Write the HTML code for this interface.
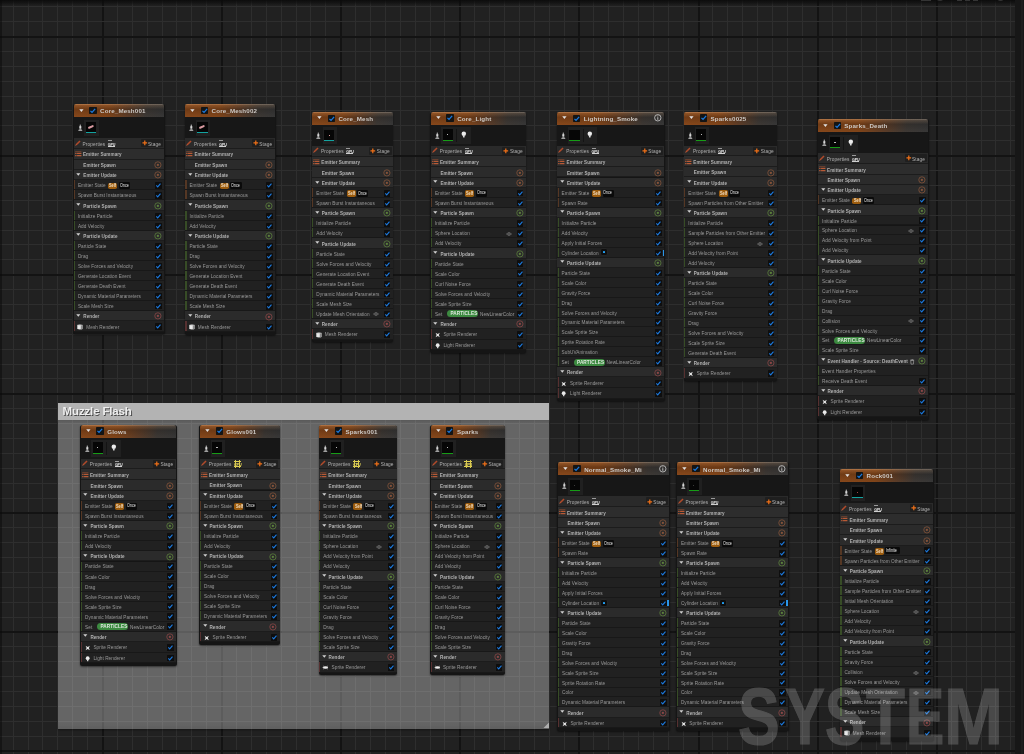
<!DOCTYPE html>
<html><head><meta charset="utf-8"><style>
html,body{margin:0;padding:0;}
body{width:1024px;height:754px;overflow:hidden;position:relative;background:#212121;font-family:"Liberation Sans",sans-serif;}
.gv{position:absolute;top:0;width:1px;height:754px;}
.gh{position:absolute;left:0;height:1px;width:1015px;}
.t{position:absolute;white-space:nowrap;}
svg{display:block;overflow:visible}
.wm{position:absolute;top:677px;font-weight:700;font-size:79.5px;line-height:79.5px;color:#fff;-webkit-text-stroke:1.1px #fff;transform-origin:0 0;white-space:nowrap;}
</style></head><body>
<div class="gv" style="left:13px;background:#2e2e2e"></div><div class="gv" style="left:28px;background:#2e2e2e"></div><div class="gv" style="left:42px;background:#2e2e2e"></div><div class="gv" style="left:57px;background:#2e2e2e"></div><div class="gv" style="left:72px;background:#2e2e2e"></div><div class="gv" style="left:87px;background:#2e2e2e"></div><div class="gv" style="left:102px;width:2px;background:#131313"></div><div class="gv" style="left:117px;background:#2e2e2e"></div><div class="gv" style="left:132px;background:#2e2e2e"></div><div class="gv" style="left:147px;background:#2e2e2e"></div><div class="gv" style="left:162px;background:#2e2e2e"></div><div class="gv" style="left:176px;background:#2e2e2e"></div><div class="gv" style="left:191px;background:#2e2e2e"></div><div class="gv" style="left:206px;background:#2e2e2e"></div><div class="gv" style="left:221px;width:2px;background:#131313"></div><div class="gv" style="left:236px;background:#2e2e2e"></div><div class="gv" style="left:251px;background:#2e2e2e"></div><div class="gv" style="left:266px;background:#2e2e2e"></div><div class="gv" style="left:281px;background:#2e2e2e"></div><div class="gv" style="left:296px;background:#2e2e2e"></div><div class="gv" style="left:310px;background:#2e2e2e"></div><div class="gv" style="left:325px;background:#2e2e2e"></div><div class="gv" style="left:340px;width:2px;background:#131313"></div><div class="gv" style="left:355px;background:#2e2e2e"></div><div class="gv" style="left:370px;background:#2e2e2e"></div><div class="gv" style="left:385px;background:#2e2e2e"></div><div class="gv" style="left:400px;background:#2e2e2e"></div><div class="gv" style="left:415px;background:#2e2e2e"></div><div class="gv" style="left:430px;background:#2e2e2e"></div><div class="gv" style="left:444px;background:#2e2e2e"></div><div class="gv" style="left:459px;width:2px;background:#131313"></div><div class="gv" style="left:474px;background:#2e2e2e"></div><div class="gv" style="left:489px;background:#2e2e2e"></div><div class="gv" style="left:504px;background:#2e2e2e"></div><div class="gv" style="left:519px;background:#2e2e2e"></div><div class="gv" style="left:534px;background:#2e2e2e"></div><div class="gv" style="left:549px;background:#2e2e2e"></div><div class="gv" style="left:564px;background:#2e2e2e"></div><div class="gv" style="left:578px;width:2px;background:#131313"></div><div class="gv" style="left:593px;background:#2e2e2e"></div><div class="gv" style="left:608px;background:#2e2e2e"></div><div class="gv" style="left:623px;background:#2e2e2e"></div><div class="gv" style="left:638px;background:#2e2e2e"></div><div class="gv" style="left:653px;background:#2e2e2e"></div><div class="gv" style="left:668px;background:#2e2e2e"></div><div class="gv" style="left:683px;background:#2e2e2e"></div><div class="gv" style="left:698px;width:2px;background:#131313"></div><div class="gv" style="left:712px;background:#2e2e2e"></div><div class="gv" style="left:727px;background:#2e2e2e"></div><div class="gv" style="left:742px;background:#2e2e2e"></div><div class="gv" style="left:757px;background:#2e2e2e"></div><div class="gv" style="left:772px;background:#2e2e2e"></div><div class="gv" style="left:787px;background:#2e2e2e"></div><div class="gv" style="left:802px;background:#2e2e2e"></div><div class="gv" style="left:817px;width:2px;background:#131313"></div><div class="gv" style="left:832px;background:#2e2e2e"></div><div class="gv" style="left:846px;background:#2e2e2e"></div><div class="gv" style="left:861px;background:#2e2e2e"></div><div class="gv" style="left:876px;background:#2e2e2e"></div><div class="gv" style="left:891px;background:#2e2e2e"></div><div class="gv" style="left:906px;background:#2e2e2e"></div><div class="gv" style="left:921px;background:#2e2e2e"></div><div class="gv" style="left:936px;width:2px;background:#131313"></div><div class="gv" style="left:951px;background:#2e2e2e"></div><div class="gv" style="left:966px;background:#2e2e2e"></div><div class="gv" style="left:981px;background:#2e2e2e"></div><div class="gv" style="left:995px;background:#2e2e2e"></div><div class="gv" style="left:1010px;background:#2e2e2e"></div><div class="gh" style="top:6px;background:#2e2e2e"></div><div class="gh" style="top:21px;background:#2e2e2e"></div><div class="gh" style="top:36px;height:2px;background:#131313"></div><div class="gh" style="top:51px;background:#2e2e2e"></div><div class="gh" style="top:66px;background:#2e2e2e"></div><div class="gh" style="top:81px;background:#2e2e2e"></div><div class="gh" style="top:96px;background:#2e2e2e"></div><div class="gh" style="top:110px;background:#2e2e2e"></div><div class="gh" style="top:125px;background:#2e2e2e"></div><div class="gh" style="top:140px;background:#2e2e2e"></div><div class="gh" style="top:155px;height:2px;background:#131313"></div><div class="gh" style="top:170px;background:#2e2e2e"></div><div class="gh" style="top:185px;background:#2e2e2e"></div><div class="gh" style="top:200px;background:#2e2e2e"></div><div class="gh" style="top:215px;background:#2e2e2e"></div><div class="gh" style="top:230px;background:#2e2e2e"></div><div class="gh" style="top:244px;background:#2e2e2e"></div><div class="gh" style="top:259px;background:#2e2e2e"></div><div class="gh" style="top:274px;height:2px;background:#131313"></div><div class="gh" style="top:289px;background:#2e2e2e"></div><div class="gh" style="top:304px;background:#2e2e2e"></div><div class="gh" style="top:319px;background:#2e2e2e"></div><div class="gh" style="top:334px;background:#2e2e2e"></div><div class="gh" style="top:349px;background:#2e2e2e"></div><div class="gh" style="top:364px;background:#2e2e2e"></div><div class="gh" style="top:378px;background:#2e2e2e"></div><div class="gh" style="top:393px;height:2px;background:#131313"></div><div class="gh" style="top:408px;background:#2e2e2e"></div><div class="gh" style="top:423px;background:#2e2e2e"></div><div class="gh" style="top:438px;background:#2e2e2e"></div><div class="gh" style="top:453px;background:#2e2e2e"></div><div class="gh" style="top:468px;background:#2e2e2e"></div><div class="gh" style="top:483px;background:#2e2e2e"></div><div class="gh" style="top:498px;background:#2e2e2e"></div><div class="gh" style="top:512px;height:2px;background:#131313"></div><div class="gh" style="top:527px;background:#2e2e2e"></div><div class="gh" style="top:542px;background:#2e2e2e"></div><div class="gh" style="top:557px;background:#2e2e2e"></div><div class="gh" style="top:572px;background:#2e2e2e"></div><div class="gh" style="top:587px;background:#2e2e2e"></div><div class="gh" style="top:602px;background:#2e2e2e"></div><div class="gh" style="top:617px;background:#2e2e2e"></div><div class="gh" style="top:631px;height:2px;background:#131313"></div><div class="gh" style="top:646px;background:#2e2e2e"></div><div class="gh" style="top:661px;background:#2e2e2e"></div><div class="gh" style="top:676px;background:#2e2e2e"></div><div class="gh" style="top:691px;background:#2e2e2e"></div><div class="gh" style="top:706px;background:#2e2e2e"></div><div class="gh" style="top:721px;background:#2e2e2e"></div><div class="gh" style="top:736px;background:#2e2e2e"></div><div class="gh" style="top:750px;height:2px;background:#131313"></div>
<div style="position:absolute;left:0;top:0;width:1024px;height:6px;background:linear-gradient(rgba(10,10,10,0.9),rgba(10,10,10,0.55) 45%,rgba(10,10,10,0))"></div>
<div style="position:absolute;left:0;top:0;width:1.5px;height:754px;background:rgba(10,10,10,0.5)"></div>
<div style="position:absolute;left:921px;top:0;width:10px;height:1.4px;background:#343434"></div>
<div style="position:absolute;left:934.6px;top:-6px;width:10.4px;height:7.4px;border-radius:0 0 5px 5px;border:1.4px solid #343434;border-top:none;box-sizing:border-box"></div>
<div style="position:absolute;left:957px;top:0;width:5px;height:1.4px;background:#343434"></div>
<div style="position:absolute;left:964.5px;top:0;width:5px;height:1.4px;background:#343434"></div>
<div style="position:absolute;left:972.5px;top:0;width:5px;height:1.4px;background:#343434"></div>
<div style="position:absolute;left:996px;top:-6px;width:9.4px;height:7.4px;border-radius:0 0 5px 5px;border:1.4px solid #343434;border-top:none;box-sizing:border-box"></div>
<div style="position:absolute;left:1015px;top:0;width:9px;height:754px;background:#171717"></div>
<div style="position:absolute;left:1021px;top:0;width:1.5px;height:754px;background:#1e1e1e"></div>
<div style="position:absolute;left:0;top:0;width:1024px;height:754px;will-change:transform">
<div style="position:absolute;left:57.8px;top:420px;width:491.2px;height:308.7px;background:rgba(255,255,255,0.31);box-shadow:0 1px 2px rgba(0,0,0,0.4)"></div><div style="position:absolute;left:57.8px;top:403px;width:491.2px;height:16.5px;background:#b3b3b3"></div><div style="position:absolute;left:57.8px;top:419.5px;width:491.2px;height:4px;background:linear-gradient(rgba(0,0,0,0.12),rgba(0,0,0,0))"></div><div class="t" style="left:62.6px;top:404.9px;font-size:11.5px;line-height:13.8px;color:#eeeeee;font-weight:700;text-shadow:0.9px 0.9px 0.6px rgba(0,0,0,0.6);letter-spacing:-0.15px">Muzzle Flash</div><div style="position:absolute;left:57.8px;top:721.7px;width:491.2px;height:7px;background:linear-gradient(rgba(0,0,0,0),rgba(0,0,0,0.06))"></div><div style="position:absolute;left:542.5px;top:722.2px;width:6px;height:6px;"><svg viewBox="0 0 6 6" width="100%" height="100%"><path d="M6 0.5 L6 6 L0.5 6Z" fill="#c8c8c8" opacity="0.75"/></svg></div>
<div style="position:absolute;left:73.2px;top:104px;width:91.5px;height:230.3px;background:#151515;border-radius:2.5px;box-shadow:0 1px 2px rgba(0,0,0,0.5)"></div><div style="position:absolute;left:73.7px;top:104px;width:90.5px;height:13.2px;border-radius:2.5px 2.5px 0 0;background:linear-gradient(100deg,#88481b 0%,#824519 38%,#5e3d27 60%,#3e3935 80%,#373737 100%)"></div><div style="position:absolute;left:73.7px;top:104px;width:90.5px;height:13.2px;border-radius:2.5px 2.5px 0 0;background:linear-gradient(180deg,rgba(255,190,130,0.16) 0%,rgba(0,0,0,0.18) 40%,rgba(0,0,0,0.12) 60%,rgba(0,0,0,0) 100%)"></div><div style="position:absolute;left:73.7px;top:104px;width:90.5px;height:1px;border-radius:2.5px 2.5px 0 0;background:linear-gradient(90deg,rgba(255,200,150,0.22),rgba(255,255,255,0.12))"></div><div style="position:absolute;left:78.7px;top:108.5px;width:4.8px;height:3.1px;"><svg viewBox="0 0 10 6" width="100%" height="100%"><path d="M0.5 0.5 H9.5 L5 5.8Z" fill="#e2e2e2"/></svg></div><div style="position:absolute;left:89.3px;top:106.9px;width:7.4px;height:7.4px;background:#141414;border-radius:0.8px"><svg viewBox="0 0 10 10" width="100%" height="100%"><path d="M2 5.2 L4.1 7.3 L8.3 2.6" fill="none" stroke="#1b7ae0" stroke-width="1.7"/></svg></div><div class="t" style="left:100.1px;top:107.38px;font-size:6.2px;line-height:7.44px;color:#cdc9c5;font-weight:700;letter-spacing:0.15px">Core_Mesh001</div><div style="position:absolute;left:73.7px;top:117.2px;width:90.5px;height:20.9px;background:rgba(24,24,24,0.84)"></div><div style="position:absolute;left:77.7px;top:124.2px;width:4.6px;height:7.4px;"><svg viewBox="0 0 6 9" width="100%" height="100%"><ellipse cx="3" cy="1.4" rx="0.9" ry="1.0" fill="#bdbdbd"/><path d="M1.6 2.6 Q3 1.8 4.4 2.6 L4.3 5.6 Q3 6.4 1.7 5.6Z" fill="#d8d8d8"/><path d="M0.2 8.8 Q0.6 6.2 3 6.1 Q5.4 6.2 5.8 8.8Z" fill="#a0a0a0"/></svg></div><div style="position:absolute;left:84.3px;top:119.7px;width:14.6px;height:16.8px;background:#202020"></div><div style="position:absolute;left:85.5px;top:121.9px;width:10.6px;height:11.2px;background:#060606;border-bottom:1.6px solid #13a3a0;box-sizing:border-box"></div><div style="position:absolute;left:87.7px;top:126px;width:5.5px;height:2.4px;background:#d99aa0;transform:rotate(-25deg);border-radius:1px"></div><div style="position:absolute;left:73.7px;top:138.1px;width:90.5px;height:10.8px;background:#2a2a2a;border-bottom:0.9px solid #1c1c1c;box-sizing:border-box"></div><div style="position:absolute;left:74.7px;top:139.7px;width:6px;height:6px;"><svg viewBox="0 0 10 10" width="100%" height="100%"><path d="M1.6 8.4 L8.4 1.6" stroke="#b04a2a" stroke-width="2.6"/><path d="M0.8 9.2 L2 8" stroke="#d07050" stroke-width="1.2"/></svg></div><div class="t" style="left:82.6px;top:141.55px;font-size:4.75px;line-height:5.7px;color:#aeaeae;font-weight:400;letter-spacing:0.1px">Properties</div><div class="t" style="left:107.8px;top:142.58px;font-size:3.7px;line-height:4.44px;color:#e6e6e6;font-weight:700;letter-spacing:-0.15px">GPU</div><div style="position:absolute;left:107.9px;top:140.2px;width:4px;height:0.6px;background:#9a9a9a"></div><div style="position:absolute;left:107.8px;top:145.7px;width:7.2px;height:0.8px;background:#d0d0d0"></div><div style="position:absolute;left:140.6px;top:139.1px;width:22.4px;height:8.2px;background:#1f1f1f;border-radius:1px"></div><div style="position:absolute;left:141.6px;top:140.3px;width:5.6px;height:5.6px;"><svg viewBox="0 0 10 10" width="100%" height="100%"><path d="M5 0.8 V9.2 M0.8 5 H9.2" stroke="#f07018" stroke-width="2.2"/></svg></div><div class="t" style="left:148.1px;top:141.55px;font-size:4.75px;line-height:5.7px;color:#b4b4b4;font-weight:400;letter-spacing:0.1px">Stage</div><div style="position:absolute;left:73.7px;top:148.9px;width:90.5px;height:10.8px;background:#2d2d2d;border-bottom:0.9px solid #1c1c1c;box-sizing:border-box"></div><div style="position:absolute;left:74.5px;top:151.1px;width:6.6px;height:5.6px;"><svg viewBox="0 0 10 9" width="100%" height="100%"><path d="M0 0.8 H10" stroke="#a05030" stroke-width="0.8"/><path d="M0 4 H2.2 M3 4 H10 M0 7.3 H2.2 M3 7.3 H10" stroke="#b85a36" stroke-width="2"/></svg></div><div class="t" style="left:82.9px;top:152.44px;font-size:4.6px;line-height:5.52px;color:#b0b0b0;font-weight:700;letter-spacing:0.05px">Emitter Summary</div><div style="position:absolute;left:73.7px;top:159.7px;width:90.5px;height:10.3px;background:#2b2b2b;border-bottom:0.9px solid #1c1c1c;box-sizing:border-box"></div><div class="t" style="left:83.3px;top:162.99px;font-size:4.6px;line-height:5.52px;color:#b2b2b2;font-weight:700;letter-spacing:0.05px">Emitter Spawn</div><div style="position:absolute;left:154px;top:161.15px;width:7.8px;height:7.8px;"><svg viewBox="0 0 10 10" width="100%" height="100%"><circle cx="5" cy="5" r="4.0" fill="none" stroke="#a0603f" stroke-width="0.85" opacity="0.9"/><path d="M5 3.6 V6.4 M3.6 5 H6.4" stroke="#a0603f" stroke-width="1.1"/></svg></div><div style="position:absolute;left:73.7px;top:170px;width:90.5px;height:10.3px;background:#2b2b2b;border-bottom:0.9px solid #1c1c1c;box-sizing:border-box"></div><div style="position:absolute;left:76.3px;top:172.85px;width:4.6px;height:3px;"><svg viewBox="0 0 10 6" width="100%" height="100%"><path d="M0.5 0.5 H9.5 L5 5.8Z" fill="#d0d0d0"/></svg></div><div class="t" style="left:83.3px;top:173.29px;font-size:4.6px;line-height:5.52px;color:#b2b2b2;font-weight:700;letter-spacing:0.05px">Emitter Update</div><div style="position:absolute;left:154px;top:171.45px;width:7.8px;height:7.8px;"><svg viewBox="0 0 10 10" width="100%" height="100%"><circle cx="5" cy="5" r="4.0" fill="none" stroke="#a0603f" stroke-width="0.85" opacity="0.9"/><path d="M5 3.6 V6.4 M3.6 5 H6.4" stroke="#a0603f" stroke-width="1.1"/></svg></div><div style="position:absolute;left:73.7px;top:180.3px;width:90.5px;height:10px;background:#212121;border-bottom:0.9px solid #181818;box-sizing:border-box"></div><div style="position:absolute;left:73.9px;top:180.3px;width:1.2px;height:9.1px;background:#553724"></div><div class="t" style="left:77.9px;top:183.28px;font-size:4.7px;line-height:5.64px;color:#9a9a9a;font-weight:400;letter-spacing:0.05px">Emitter State</div><div style="position:absolute;left:108.1px;top:182.7px;width:9px;height:6.6px;background:#9c5c0e;border-radius:1.8px"></div><div class="t" style="left:109.3px;top:183.3px;font-size:4.5px;line-height:5.4px;color:#f0dcc0;font-weight:700;transform:scaleX(0.85);transform-origin:0 50%">Self</div><div style="position:absolute;left:118.9px;top:182.2px;width:11.2px;height:7px;background:#0a0a0a;border-radius:1.2px"></div><div class="t" style="left:119.7px;top:182.9px;font-size:4.5px;line-height:5.4px;color:#e8e8e8;font-weight:400;transform:scaleX(0.82);transform-origin:0 50%">Once</div><div style="position:absolute;left:155.1px;top:182.2px;width:6.6px;height:6.6px;background:#0e0e0e;border-radius:0.6px"><svg viewBox="0 0 10 10" width="100%" height="100%"><path d="M2 5.2 L4.1 7.3 L8.3 2.6" fill="none" stroke="#1b7ae0" stroke-width="1.7"/></svg></div><div style="position:absolute;left:73.7px;top:190.3px;width:90.5px;height:10px;background:#212121;border-bottom:0.9px solid #181818;box-sizing:border-box"></div><div style="position:absolute;left:73.9px;top:190.3px;width:1.2px;height:9.1px;background:#553724"></div><div class="t" style="left:77.9px;top:193.28px;font-size:4.7px;line-height:5.64px;color:#9a9a9a;font-weight:400;letter-spacing:0.05px">Spawn Burst Instantaneous</div><div style="position:absolute;left:155.1px;top:192.2px;width:6.6px;height:6.6px;background:#0e0e0e;border-radius:0.6px"><svg viewBox="0 0 10 10" width="100%" height="100%"><path d="M2 5.2 L4.1 7.3 L8.3 2.6" fill="none" stroke="#1b7ae0" stroke-width="1.7"/></svg></div><div style="position:absolute;left:73.7px;top:200.3px;width:90.5px;height:10.3px;background:#2b2b2b;border-bottom:0.9px solid #1c1c1c;box-sizing:border-box"></div><div style="position:absolute;left:76.3px;top:203.15px;width:4.6px;height:3px;"><svg viewBox="0 0 10 6" width="100%" height="100%"><path d="M0.5 0.5 H9.5 L5 5.8Z" fill="#d0d0d0"/></svg></div><div class="t" style="left:83.3px;top:203.59px;font-size:4.6px;line-height:5.52px;color:#b2b2b2;font-weight:700;letter-spacing:0.05px">Particle Spawn</div><div style="position:absolute;left:154px;top:201.75px;width:7.8px;height:7.8px;"><svg viewBox="0 0 10 10" width="100%" height="100%"><circle cx="5" cy="5" r="4.0" fill="none" stroke="#6a9a42" stroke-width="0.85" opacity="0.9"/><path d="M5 3.6 V6.4 M3.6 5 H6.4" stroke="#6a9a42" stroke-width="1.1"/></svg></div><div style="position:absolute;left:73.7px;top:210.6px;width:90.5px;height:10px;background:#212121;border-bottom:0.9px solid #181818;box-sizing:border-box"></div><div style="position:absolute;left:73.9px;top:210.6px;width:1.2px;height:9.1px;background:#374c26"></div><div class="t" style="left:77.9px;top:213.58px;font-size:4.7px;line-height:5.64px;color:#9a9a9a;font-weight:400;letter-spacing:0.05px">Initialize Particle</div><div style="position:absolute;left:155.1px;top:212.5px;width:6.6px;height:6.6px;background:#0e0e0e;border-radius:0.6px"><svg viewBox="0 0 10 10" width="100%" height="100%"><path d="M2 5.2 L4.1 7.3 L8.3 2.6" fill="none" stroke="#1b7ae0" stroke-width="1.7"/></svg></div><div style="position:absolute;left:73.7px;top:220.6px;width:90.5px;height:10px;background:#212121;border-bottom:0.9px solid #181818;box-sizing:border-box"></div><div style="position:absolute;left:73.9px;top:220.6px;width:1.2px;height:9.1px;background:#374c26"></div><div class="t" style="left:77.9px;top:223.58px;font-size:4.7px;line-height:5.64px;color:#9a9a9a;font-weight:400;letter-spacing:0.05px">Add Velocity</div><div style="position:absolute;left:155.1px;top:222.5px;width:6.6px;height:6.6px;background:#0e0e0e;border-radius:0.6px"><svg viewBox="0 0 10 10" width="100%" height="100%"><path d="M2 5.2 L4.1 7.3 L8.3 2.6" fill="none" stroke="#1b7ae0" stroke-width="1.7"/></svg></div><div style="position:absolute;left:73.7px;top:230.6px;width:90.5px;height:10.3px;background:#2b2b2b;border-bottom:0.9px solid #1c1c1c;box-sizing:border-box"></div><div style="position:absolute;left:76.3px;top:233.45px;width:4.6px;height:3px;"><svg viewBox="0 0 10 6" width="100%" height="100%"><path d="M0.5 0.5 H9.5 L5 5.8Z" fill="#d0d0d0"/></svg></div><div class="t" style="left:83.3px;top:233.89px;font-size:4.6px;line-height:5.52px;color:#b2b2b2;font-weight:700;letter-spacing:0.05px">Particle Update</div><div style="position:absolute;left:154px;top:232.05px;width:7.8px;height:7.8px;"><svg viewBox="0 0 10 10" width="100%" height="100%"><circle cx="5" cy="5" r="4.0" fill="none" stroke="#6a9a42" stroke-width="0.85" opacity="0.9"/><path d="M5 3.6 V6.4 M3.6 5 H6.4" stroke="#6a9a42" stroke-width="1.1"/></svg></div><div style="position:absolute;left:73.7px;top:240.9px;width:90.5px;height:10px;background:#212121;border-bottom:0.9px solid #181818;box-sizing:border-box"></div><div style="position:absolute;left:73.9px;top:240.9px;width:1.2px;height:9.1px;background:#374c26"></div><div class="t" style="left:77.9px;top:243.88px;font-size:4.7px;line-height:5.64px;color:#9a9a9a;font-weight:400;letter-spacing:0.05px">Particle State</div><div style="position:absolute;left:155.1px;top:242.8px;width:6.6px;height:6.6px;background:#0e0e0e;border-radius:0.6px"><svg viewBox="0 0 10 10" width="100%" height="100%"><path d="M2 5.2 L4.1 7.3 L8.3 2.6" fill="none" stroke="#1b7ae0" stroke-width="1.7"/></svg></div><div style="position:absolute;left:73.7px;top:250.9px;width:90.5px;height:10px;background:#212121;border-bottom:0.9px solid #181818;box-sizing:border-box"></div><div style="position:absolute;left:73.9px;top:250.9px;width:1.2px;height:9.1px;background:#374c26"></div><div class="t" style="left:77.9px;top:253.88px;font-size:4.7px;line-height:5.64px;color:#9a9a9a;font-weight:400;letter-spacing:0.05px">Drag</div><div style="position:absolute;left:155.1px;top:252.8px;width:6.6px;height:6.6px;background:#0e0e0e;border-radius:0.6px"><svg viewBox="0 0 10 10" width="100%" height="100%"><path d="M2 5.2 L4.1 7.3 L8.3 2.6" fill="none" stroke="#1b7ae0" stroke-width="1.7"/></svg></div><div style="position:absolute;left:73.7px;top:260.9px;width:90.5px;height:10px;background:#212121;border-bottom:0.9px solid #181818;box-sizing:border-box"></div><div style="position:absolute;left:73.9px;top:260.9px;width:1.2px;height:9.1px;background:#374c26"></div><div class="t" style="left:77.9px;top:263.88px;font-size:4.7px;line-height:5.64px;color:#9a9a9a;font-weight:400;letter-spacing:0.05px">Solve Forces and Velocity</div><div style="position:absolute;left:155.1px;top:262.8px;width:6.6px;height:6.6px;background:#0e0e0e;border-radius:0.6px"><svg viewBox="0 0 10 10" width="100%" height="100%"><path d="M2 5.2 L4.1 7.3 L8.3 2.6" fill="none" stroke="#1b7ae0" stroke-width="1.7"/></svg></div><div style="position:absolute;left:73.7px;top:270.9px;width:90.5px;height:10px;background:#212121;border-bottom:0.9px solid #181818;box-sizing:border-box"></div><div style="position:absolute;left:73.9px;top:270.9px;width:1.2px;height:9.1px;background:#374c26"></div><div class="t" style="left:77.9px;top:273.88px;font-size:4.7px;line-height:5.64px;color:#9a9a9a;font-weight:400;letter-spacing:0.05px">Generate Location Event</div><div style="position:absolute;left:155.1px;top:272.8px;width:6.6px;height:6.6px;background:#0e0e0e;border-radius:0.6px"><svg viewBox="0 0 10 10" width="100%" height="100%"><path d="M2 5.2 L4.1 7.3 L8.3 2.6" fill="none" stroke="#1b7ae0" stroke-width="1.7"/></svg></div><div style="position:absolute;left:73.7px;top:280.9px;width:90.5px;height:10px;background:#212121;border-bottom:0.9px solid #181818;box-sizing:border-box"></div><div style="position:absolute;left:73.9px;top:280.9px;width:1.2px;height:9.1px;background:#374c26"></div><div class="t" style="left:77.9px;top:283.88px;font-size:4.7px;line-height:5.64px;color:#9a9a9a;font-weight:400;letter-spacing:0.05px">Generate Death Event</div><div style="position:absolute;left:155.1px;top:282.8px;width:6.6px;height:6.6px;background:#0e0e0e;border-radius:0.6px"><svg viewBox="0 0 10 10" width="100%" height="100%"><path d="M2 5.2 L4.1 7.3 L8.3 2.6" fill="none" stroke="#1b7ae0" stroke-width="1.7"/></svg></div><div style="position:absolute;left:73.7px;top:290.9px;width:90.5px;height:10px;background:#212121;border-bottom:0.9px solid #181818;box-sizing:border-box"></div><div style="position:absolute;left:73.9px;top:290.9px;width:1.2px;height:9.1px;background:#374c26"></div><div class="t" style="left:77.9px;top:293.88px;font-size:4.7px;line-height:5.64px;color:#9a9a9a;font-weight:400;letter-spacing:0.05px">Dynamic Material Parameters</div><div style="position:absolute;left:155.1px;top:292.8px;width:6.6px;height:6.6px;background:#0e0e0e;border-radius:0.6px"><svg viewBox="0 0 10 10" width="100%" height="100%"><path d="M2 5.2 L4.1 7.3 L8.3 2.6" fill="none" stroke="#1b7ae0" stroke-width="1.7"/></svg></div><div style="position:absolute;left:73.7px;top:300.9px;width:90.5px;height:10px;background:#212121;border-bottom:0.9px solid #181818;box-sizing:border-box"></div><div style="position:absolute;left:73.9px;top:300.9px;width:1.2px;height:9.1px;background:#374c26"></div><div class="t" style="left:77.9px;top:303.88px;font-size:4.7px;line-height:5.64px;color:#9a9a9a;font-weight:400;letter-spacing:0.05px">Scale Mesh Size</div><div style="position:absolute;left:155.1px;top:302.8px;width:6.6px;height:6.6px;background:#0e0e0e;border-radius:0.6px"><svg viewBox="0 0 10 10" width="100%" height="100%"><path d="M2 5.2 L4.1 7.3 L8.3 2.6" fill="none" stroke="#1b7ae0" stroke-width="1.7"/></svg></div><div style="position:absolute;left:73.7px;top:310.9px;width:90.5px;height:10.3px;background:#2b2b2b;border-bottom:0.9px solid #1c1c1c;box-sizing:border-box"></div><div style="position:absolute;left:76.3px;top:313.75px;width:4.6px;height:3px;"><svg viewBox="0 0 10 6" width="100%" height="100%"><path d="M0.5 0.5 H9.5 L5 5.8Z" fill="#d0d0d0"/></svg></div><div class="t" style="left:83.3px;top:314.19px;font-size:4.6px;line-height:5.52px;color:#b2b2b2;font-weight:700;letter-spacing:0.05px">Render</div><div style="position:absolute;left:154px;top:312.35px;width:7.8px;height:7.8px;"><svg viewBox="0 0 10 10" width="100%" height="100%"><circle cx="5" cy="5" r="4.0" fill="none" stroke="#a85050" stroke-width="0.85" opacity="0.9"/><path d="M5 3.6 V6.4 M3.6 5 H6.4" stroke="#a85050" stroke-width="1.1"/></svg></div><div style="position:absolute;left:73.7px;top:321.2px;width:90.5px;height:10.7px;background:#212121;border-bottom:0.9px solid #181818;box-sizing:border-box"></div><div style="position:absolute;left:73.9px;top:321.2px;width:1.2px;height:9.8px;background:#563030"></div><div style="position:absolute;left:77.1px;top:323.95px;width:5.8px;height:6px;"><svg viewBox="0 0 10 10" width="100%" height="100%"><path d="M0.5 1.5 Q5 0 9.5 1.5 V8.3 Q5 10 0.5 8.3Z" fill="#e8e8e8"/><path d="M6.5 2 H9.5 V8.3 Q8 9.3 6.5 9.3Z" fill="#8a8a8a"/><path d="M0.5 1.5 Q5 3 9.5 1.5" stroke="#b0b0b0" stroke-width="0.6" fill="none"/></svg></div><div class="t" style="left:86.3px;top:324.53px;font-size:4.7px;line-height:5.64px;color:#9a9a9a;font-weight:400;letter-spacing:0.05px">Mesh Renderer</div><div style="position:absolute;left:155.1px;top:323.45px;width:6.6px;height:6.6px;background:#0e0e0e;border-radius:0.6px"><svg viewBox="0 0 10 10" width="100%" height="100%"><path d="M2 5.2 L4.1 7.3 L8.3 2.6" fill="none" stroke="#1b7ae0" stroke-width="1.7"/></svg></div><div style="position:absolute;left:184.7px;top:104px;width:91.2px;height:230.5px;background:#151515;border-radius:2.5px;box-shadow:0 1px 2px rgba(0,0,0,0.5)"></div><div style="position:absolute;left:185.2px;top:104px;width:90.2px;height:13.2px;border-radius:2.5px 2.5px 0 0;background:linear-gradient(100deg,#88481b 0%,#824519 38%,#5e3d27 60%,#3e3935 80%,#373737 100%)"></div><div style="position:absolute;left:185.2px;top:104px;width:90.2px;height:13.2px;border-radius:2.5px 2.5px 0 0;background:linear-gradient(180deg,rgba(255,190,130,0.16) 0%,rgba(0,0,0,0.18) 40%,rgba(0,0,0,0.12) 60%,rgba(0,0,0,0) 100%)"></div><div style="position:absolute;left:185.2px;top:104px;width:90.2px;height:1px;border-radius:2.5px 2.5px 0 0;background:linear-gradient(90deg,rgba(255,200,150,0.22),rgba(255,255,255,0.12))"></div><div style="position:absolute;left:190.2px;top:108.5px;width:4.8px;height:3.1px;"><svg viewBox="0 0 10 6" width="100%" height="100%"><path d="M0.5 0.5 H9.5 L5 5.8Z" fill="#e2e2e2"/></svg></div><div style="position:absolute;left:200.8px;top:106.9px;width:7.4px;height:7.4px;background:#141414;border-radius:0.8px"><svg viewBox="0 0 10 10" width="100%" height="100%"><path d="M2 5.2 L4.1 7.3 L8.3 2.6" fill="none" stroke="#1b7ae0" stroke-width="1.7"/></svg></div><div class="t" style="left:211.6px;top:107.38px;font-size:6.2px;line-height:7.44px;color:#cdc9c5;font-weight:700;letter-spacing:0.15px">Core_Mesh002</div><div style="position:absolute;left:185.2px;top:117.2px;width:90.2px;height:20.9px;background:rgba(24,24,24,0.84)"></div><div style="position:absolute;left:189.2px;top:124.2px;width:4.6px;height:7.4px;"><svg viewBox="0 0 6 9" width="100%" height="100%"><ellipse cx="3" cy="1.4" rx="0.9" ry="1.0" fill="#bdbdbd"/><path d="M1.6 2.6 Q3 1.8 4.4 2.6 L4.3 5.6 Q3 6.4 1.7 5.6Z" fill="#d8d8d8"/><path d="M0.2 8.8 Q0.6 6.2 3 6.1 Q5.4 6.2 5.8 8.8Z" fill="#a0a0a0"/></svg></div><div style="position:absolute;left:195.8px;top:119.7px;width:14.6px;height:16.8px;background:#202020"></div><div style="position:absolute;left:197px;top:121.9px;width:10.6px;height:11.2px;background:#060606;border-bottom:1.6px solid #13a3a0;box-sizing:border-box"></div><div style="position:absolute;left:199.2px;top:126px;width:5.5px;height:2.4px;background:#d99aa0;transform:rotate(-25deg);border-radius:1px"></div><div style="position:absolute;left:185.2px;top:138.1px;width:90.2px;height:10.81px;background:#2a2a2a;border-bottom:0.9px solid #1c1c1c;box-sizing:border-box"></div><div style="position:absolute;left:186.2px;top:139.7px;width:6px;height:6px;"><svg viewBox="0 0 10 10" width="100%" height="100%"><path d="M1.6 8.4 L8.4 1.6" stroke="#b04a2a" stroke-width="2.6"/><path d="M0.8 9.2 L2 8" stroke="#d07050" stroke-width="1.2"/></svg></div><div class="t" style="left:194.1px;top:141.56px;font-size:4.75px;line-height:5.7px;color:#aeaeae;font-weight:400;letter-spacing:0.1px">Properties</div><div class="t" style="left:219.3px;top:142.59px;font-size:3.7px;line-height:4.44px;color:#e6e6e6;font-weight:700;letter-spacing:-0.15px">GPU</div><div style="position:absolute;left:219.4px;top:140.2px;width:4px;height:0.6px;background:#9a9a9a"></div><div style="position:absolute;left:219.3px;top:145.7px;width:7.2px;height:0.8px;background:#d0d0d0"></div><div style="position:absolute;left:251.8px;top:139.1px;width:22.4px;height:8.2px;background:#1f1f1f;border-radius:1px"></div><div style="position:absolute;left:252.8px;top:140.3px;width:5.6px;height:5.6px;"><svg viewBox="0 0 10 10" width="100%" height="100%"><path d="M5 0.8 V9.2 M0.8 5 H9.2" stroke="#f07018" stroke-width="2.2"/></svg></div><div class="t" style="left:259.3px;top:141.56px;font-size:4.75px;line-height:5.7px;color:#b4b4b4;font-weight:400;letter-spacing:0.1px">Stage</div><div style="position:absolute;left:185.2px;top:148.91px;width:90.2px;height:10.81px;background:#2d2d2d;border-bottom:0.9px solid #1c1c1c;box-sizing:border-box"></div><div style="position:absolute;left:186px;top:151.11px;width:6.6px;height:5.6px;"><svg viewBox="0 0 10 9" width="100%" height="100%"><path d="M0 0.8 H10" stroke="#a05030" stroke-width="0.8"/><path d="M0 4 H2.2 M3 4 H10 M0 7.3 H2.2 M3 7.3 H10" stroke="#b85a36" stroke-width="2"/></svg></div><div class="t" style="left:194.4px;top:152.46px;font-size:4.6px;line-height:5.52px;color:#b0b0b0;font-weight:700;letter-spacing:0.05px">Emitter Summary</div><div style="position:absolute;left:185.2px;top:159.72px;width:90.2px;height:10.31px;background:#2b2b2b;border-bottom:0.9px solid #1c1c1c;box-sizing:border-box"></div><div class="t" style="left:194.8px;top:163.02px;font-size:4.6px;line-height:5.52px;color:#b2b2b2;font-weight:700;letter-spacing:0.05px">Emitter Spawn</div><div style="position:absolute;left:265.2px;top:161.18px;width:7.8px;height:7.8px;"><svg viewBox="0 0 10 10" width="100%" height="100%"><circle cx="5" cy="5" r="4.0" fill="none" stroke="#a0603f" stroke-width="0.85" opacity="0.9"/><path d="M5 3.6 V6.4 M3.6 5 H6.4" stroke="#a0603f" stroke-width="1.1"/></svg></div><div style="position:absolute;left:185.2px;top:170.03px;width:90.2px;height:10.31px;background:#2b2b2b;border-bottom:0.9px solid #1c1c1c;box-sizing:border-box"></div><div style="position:absolute;left:187.8px;top:172.89px;width:4.6px;height:3px;"><svg viewBox="0 0 10 6" width="100%" height="100%"><path d="M0.5 0.5 H9.5 L5 5.8Z" fill="#d0d0d0"/></svg></div><div class="t" style="left:194.8px;top:173.33px;font-size:4.6px;line-height:5.52px;color:#b2b2b2;font-weight:700;letter-spacing:0.05px">Emitter Update</div><div style="position:absolute;left:265.2px;top:171.49px;width:7.8px;height:7.8px;"><svg viewBox="0 0 10 10" width="100%" height="100%"><circle cx="5" cy="5" r="4.0" fill="none" stroke="#a0603f" stroke-width="0.85" opacity="0.9"/><path d="M5 3.6 V6.4 M3.6 5 H6.4" stroke="#a0603f" stroke-width="1.1"/></svg></div><div style="position:absolute;left:185.2px;top:180.34px;width:90.2px;height:10.01px;background:#212121;border-bottom:0.9px solid #181818;box-sizing:border-box"></div><div style="position:absolute;left:185.4px;top:180.34px;width:1.2px;height:9.11px;background:#553724"></div><div class="t" style="left:189.4px;top:183.33px;font-size:4.7px;line-height:5.64px;color:#9a9a9a;font-weight:400;letter-spacing:0.05px">Emitter State</div><div style="position:absolute;left:219.6px;top:182.75px;width:9px;height:6.6px;background:#9c5c0e;border-radius:1.8px"></div><div class="t" style="left:220.8px;top:183.35px;font-size:4.5px;line-height:5.4px;color:#f0dcc0;font-weight:700;transform:scaleX(0.85);transform-origin:0 50%">Self</div><div style="position:absolute;left:230.4px;top:182.25px;width:11.2px;height:7px;background:#0a0a0a;border-radius:1.2px"></div><div class="t" style="left:231.2px;top:182.95px;font-size:4.5px;line-height:5.4px;color:#e8e8e8;font-weight:400;transform:scaleX(0.82);transform-origin:0 50%">Once</div><div style="position:absolute;left:266.3px;top:182.25px;width:6.6px;height:6.6px;background:#0e0e0e;border-radius:0.6px"><svg viewBox="0 0 10 10" width="100%" height="100%"><path d="M2 5.2 L4.1 7.3 L8.3 2.6" fill="none" stroke="#1b7ae0" stroke-width="1.7"/></svg></div><div style="position:absolute;left:185.2px;top:190.35px;width:90.2px;height:10.01px;background:#212121;border-bottom:0.9px solid #181818;box-sizing:border-box"></div><div style="position:absolute;left:185.4px;top:190.35px;width:1.2px;height:9.11px;background:#553724"></div><div class="t" style="left:189.4px;top:193.34px;font-size:4.7px;line-height:5.64px;color:#9a9a9a;font-weight:400;letter-spacing:0.05px">Spawn Burst Instantaneous</div><div style="position:absolute;left:266.3px;top:192.26px;width:6.6px;height:6.6px;background:#0e0e0e;border-radius:0.6px"><svg viewBox="0 0 10 10" width="100%" height="100%"><path d="M2 5.2 L4.1 7.3 L8.3 2.6" fill="none" stroke="#1b7ae0" stroke-width="1.7"/></svg></div><div style="position:absolute;left:185.2px;top:200.36px;width:90.2px;height:10.31px;background:#2b2b2b;border-bottom:0.9px solid #1c1c1c;box-sizing:border-box"></div><div style="position:absolute;left:187.8px;top:203.22px;width:4.6px;height:3px;"><svg viewBox="0 0 10 6" width="100%" height="100%"><path d="M0.5 0.5 H9.5 L5 5.8Z" fill="#d0d0d0"/></svg></div><div class="t" style="left:194.8px;top:203.66px;font-size:4.6px;line-height:5.52px;color:#b2b2b2;font-weight:700;letter-spacing:0.05px">Particle Spawn</div><div style="position:absolute;left:265.2px;top:201.82px;width:7.8px;height:7.8px;"><svg viewBox="0 0 10 10" width="100%" height="100%"><circle cx="5" cy="5" r="4.0" fill="none" stroke="#6a9a42" stroke-width="0.85" opacity="0.9"/><path d="M5 3.6 V6.4 M3.6 5 H6.4" stroke="#6a9a42" stroke-width="1.1"/></svg></div><div style="position:absolute;left:185.2px;top:210.67px;width:90.2px;height:10.01px;background:#212121;border-bottom:0.9px solid #181818;box-sizing:border-box"></div><div style="position:absolute;left:185.4px;top:210.67px;width:1.2px;height:9.11px;background:#374c26"></div><div class="t" style="left:189.4px;top:213.66px;font-size:4.7px;line-height:5.64px;color:#9a9a9a;font-weight:400;letter-spacing:0.05px">Initialize Particle</div><div style="position:absolute;left:266.3px;top:212.58px;width:6.6px;height:6.6px;background:#0e0e0e;border-radius:0.6px"><svg viewBox="0 0 10 10" width="100%" height="100%"><path d="M2 5.2 L4.1 7.3 L8.3 2.6" fill="none" stroke="#1b7ae0" stroke-width="1.7"/></svg></div><div style="position:absolute;left:185.2px;top:220.69px;width:90.2px;height:10.01px;background:#212121;border-bottom:0.9px solid #181818;box-sizing:border-box"></div><div style="position:absolute;left:185.4px;top:220.69px;width:1.2px;height:9.11px;background:#374c26"></div><div class="t" style="left:189.4px;top:223.67px;font-size:4.7px;line-height:5.64px;color:#9a9a9a;font-weight:400;letter-spacing:0.05px">Add Velocity</div><div style="position:absolute;left:266.3px;top:222.59px;width:6.6px;height:6.6px;background:#0e0e0e;border-radius:0.6px"><svg viewBox="0 0 10 10" width="100%" height="100%"><path d="M2 5.2 L4.1 7.3 L8.3 2.6" fill="none" stroke="#1b7ae0" stroke-width="1.7"/></svg></div><div style="position:absolute;left:185.2px;top:230.7px;width:90.2px;height:10.31px;background:#2b2b2b;border-bottom:0.9px solid #1c1c1c;box-sizing:border-box"></div><div style="position:absolute;left:187.8px;top:233.55px;width:4.6px;height:3px;"><svg viewBox="0 0 10 6" width="100%" height="100%"><path d="M0.5 0.5 H9.5 L5 5.8Z" fill="#d0d0d0"/></svg></div><div class="t" style="left:194.8px;top:233.99px;font-size:4.6px;line-height:5.52px;color:#b2b2b2;font-weight:700;letter-spacing:0.05px">Particle Update</div><div style="position:absolute;left:265.2px;top:232.15px;width:7.8px;height:7.8px;"><svg viewBox="0 0 10 10" width="100%" height="100%"><circle cx="5" cy="5" r="4.0" fill="none" stroke="#6a9a42" stroke-width="0.85" opacity="0.9"/><path d="M5 3.6 V6.4 M3.6 5 H6.4" stroke="#6a9a42" stroke-width="1.1"/></svg></div><div style="position:absolute;left:185.2px;top:241.01px;width:90.2px;height:10.01px;background:#212121;border-bottom:0.9px solid #181818;box-sizing:border-box"></div><div style="position:absolute;left:185.4px;top:241.01px;width:1.2px;height:9.11px;background:#374c26"></div><div class="t" style="left:189.4px;top:243.99px;font-size:4.7px;line-height:5.64px;color:#9a9a9a;font-weight:400;letter-spacing:0.05px">Particle State</div><div style="position:absolute;left:266.3px;top:242.91px;width:6.6px;height:6.6px;background:#0e0e0e;border-radius:0.6px"><svg viewBox="0 0 10 10" width="100%" height="100%"><path d="M2 5.2 L4.1 7.3 L8.3 2.6" fill="none" stroke="#1b7ae0" stroke-width="1.7"/></svg></div><div style="position:absolute;left:185.2px;top:251.02px;width:90.2px;height:10.01px;background:#212121;border-bottom:0.9px solid #181818;box-sizing:border-box"></div><div style="position:absolute;left:185.4px;top:251.02px;width:1.2px;height:9.11px;background:#374c26"></div><div class="t" style="left:189.4px;top:254px;font-size:4.7px;line-height:5.64px;color:#9a9a9a;font-weight:400;letter-spacing:0.05px">Drag</div><div style="position:absolute;left:266.3px;top:252.92px;width:6.6px;height:6.6px;background:#0e0e0e;border-radius:0.6px"><svg viewBox="0 0 10 10" width="100%" height="100%"><path d="M2 5.2 L4.1 7.3 L8.3 2.6" fill="none" stroke="#1b7ae0" stroke-width="1.7"/></svg></div><div style="position:absolute;left:185.2px;top:261.03px;width:90.2px;height:10.01px;background:#212121;border-bottom:0.9px solid #181818;box-sizing:border-box"></div><div style="position:absolute;left:185.4px;top:261.03px;width:1.2px;height:9.11px;background:#374c26"></div><div class="t" style="left:189.4px;top:264.01px;font-size:4.7px;line-height:5.64px;color:#9a9a9a;font-weight:400;letter-spacing:0.05px">Solve Forces and Velocity</div><div style="position:absolute;left:266.3px;top:262.93px;width:6.6px;height:6.6px;background:#0e0e0e;border-radius:0.6px"><svg viewBox="0 0 10 10" width="100%" height="100%"><path d="M2 5.2 L4.1 7.3 L8.3 2.6" fill="none" stroke="#1b7ae0" stroke-width="1.7"/></svg></div><div style="position:absolute;left:185.2px;top:271.04px;width:90.2px;height:10.01px;background:#212121;border-bottom:0.9px solid #181818;box-sizing:border-box"></div><div style="position:absolute;left:185.4px;top:271.04px;width:1.2px;height:9.11px;background:#374c26"></div><div class="t" style="left:189.4px;top:274.02px;font-size:4.7px;line-height:5.64px;color:#9a9a9a;font-weight:400;letter-spacing:0.05px">Generate Location Event</div><div style="position:absolute;left:266.3px;top:272.94px;width:6.6px;height:6.6px;background:#0e0e0e;border-radius:0.6px"><svg viewBox="0 0 10 10" width="100%" height="100%"><path d="M2 5.2 L4.1 7.3 L8.3 2.6" fill="none" stroke="#1b7ae0" stroke-width="1.7"/></svg></div><div style="position:absolute;left:185.2px;top:281.05px;width:90.2px;height:10.01px;background:#212121;border-bottom:0.9px solid #181818;box-sizing:border-box"></div><div style="position:absolute;left:185.4px;top:281.05px;width:1.2px;height:9.11px;background:#374c26"></div><div class="t" style="left:189.4px;top:284.03px;font-size:4.7px;line-height:5.64px;color:#9a9a9a;font-weight:400;letter-spacing:0.05px">Generate Death Event</div><div style="position:absolute;left:266.3px;top:282.95px;width:6.6px;height:6.6px;background:#0e0e0e;border-radius:0.6px"><svg viewBox="0 0 10 10" width="100%" height="100%"><path d="M2 5.2 L4.1 7.3 L8.3 2.6" fill="none" stroke="#1b7ae0" stroke-width="1.7"/></svg></div><div style="position:absolute;left:185.2px;top:291.06px;width:90.2px;height:10.01px;background:#212121;border-bottom:0.9px solid #181818;box-sizing:border-box"></div><div style="position:absolute;left:185.4px;top:291.06px;width:1.2px;height:9.11px;background:#374c26"></div><div class="t" style="left:189.4px;top:294.04px;font-size:4.7px;line-height:5.64px;color:#9a9a9a;font-weight:400;letter-spacing:0.05px">Dynamic Material Parameters</div><div style="position:absolute;left:266.3px;top:292.96px;width:6.6px;height:6.6px;background:#0e0e0e;border-radius:0.6px"><svg viewBox="0 0 10 10" width="100%" height="100%"><path d="M2 5.2 L4.1 7.3 L8.3 2.6" fill="none" stroke="#1b7ae0" stroke-width="1.7"/></svg></div><div style="position:absolute;left:185.2px;top:301.07px;width:90.2px;height:10.01px;background:#212121;border-bottom:0.9px solid #181818;box-sizing:border-box"></div><div style="position:absolute;left:185.4px;top:301.07px;width:1.2px;height:9.11px;background:#374c26"></div><div class="t" style="left:189.4px;top:304.05px;font-size:4.7px;line-height:5.64px;color:#9a9a9a;font-weight:400;letter-spacing:0.05px">Scale Mesh Size</div><div style="position:absolute;left:266.3px;top:302.97px;width:6.6px;height:6.6px;background:#0e0e0e;border-radius:0.6px"><svg viewBox="0 0 10 10" width="100%" height="100%"><path d="M2 5.2 L4.1 7.3 L8.3 2.6" fill="none" stroke="#1b7ae0" stroke-width="1.7"/></svg></div><div style="position:absolute;left:185.2px;top:311.08px;width:90.2px;height:10.31px;background:#2b2b2b;border-bottom:0.9px solid #1c1c1c;box-sizing:border-box"></div><div style="position:absolute;left:187.8px;top:313.93px;width:4.6px;height:3px;"><svg viewBox="0 0 10 6" width="100%" height="100%"><path d="M0.5 0.5 H9.5 L5 5.8Z" fill="#d0d0d0"/></svg></div><div class="t" style="left:194.8px;top:314.37px;font-size:4.6px;line-height:5.52px;color:#b2b2b2;font-weight:700;letter-spacing:0.05px">Render</div><div style="position:absolute;left:265.2px;top:312.53px;width:7.8px;height:7.8px;"><svg viewBox="0 0 10 10" width="100%" height="100%"><circle cx="5" cy="5" r="4.0" fill="none" stroke="#a85050" stroke-width="0.85" opacity="0.9"/><path d="M5 3.6 V6.4 M3.6 5 H6.4" stroke="#a85050" stroke-width="1.1"/></svg></div><div style="position:absolute;left:185.2px;top:321.39px;width:90.2px;height:10.71px;background:#212121;border-bottom:0.9px solid #181818;box-sizing:border-box"></div><div style="position:absolute;left:185.4px;top:321.39px;width:1.2px;height:9.81px;background:#563030"></div><div style="position:absolute;left:188.6px;top:324.14px;width:5.8px;height:6px;"><svg viewBox="0 0 10 10" width="100%" height="100%"><path d="M0.5 1.5 Q5 0 9.5 1.5 V8.3 Q5 10 0.5 8.3Z" fill="#e8e8e8"/><path d="M6.5 2 H9.5 V8.3 Q8 9.3 6.5 9.3Z" fill="#8a8a8a"/><path d="M0.5 1.5 Q5 3 9.5 1.5" stroke="#b0b0b0" stroke-width="0.6" fill="none"/></svg></div><div class="t" style="left:197.8px;top:324.72px;font-size:4.7px;line-height:5.64px;color:#9a9a9a;font-weight:400;letter-spacing:0.05px">Mesh Renderer</div><div style="position:absolute;left:266.3px;top:323.64px;width:6.6px;height:6.6px;background:#0e0e0e;border-radius:0.6px"><svg viewBox="0 0 10 10" width="100%" height="100%"><path d="M2 5.2 L4.1 7.3 L8.3 2.6" fill="none" stroke="#1b7ae0" stroke-width="1.7"/></svg></div><div style="position:absolute;left:311.6px;top:111.7px;width:81.8px;height:230.4px;background:#151515;border-radius:2.5px;box-shadow:0 1px 2px rgba(0,0,0,0.5)"></div><div style="position:absolute;left:312.1px;top:111.7px;width:80.8px;height:13.2px;border-radius:2.5px 2.5px 0 0;background:linear-gradient(100deg,#88481b 0%,#824519 38%,#5e3d27 60%,#3e3935 80%,#373737 100%)"></div><div style="position:absolute;left:312.1px;top:111.7px;width:80.8px;height:13.2px;border-radius:2.5px 2.5px 0 0;background:linear-gradient(180deg,rgba(255,190,130,0.16) 0%,rgba(0,0,0,0.18) 40%,rgba(0,0,0,0.12) 60%,rgba(0,0,0,0) 100%)"></div><div style="position:absolute;left:312.1px;top:111.7px;width:80.8px;height:1px;border-radius:2.5px 2.5px 0 0;background:linear-gradient(90deg,rgba(255,200,150,0.22),rgba(255,255,255,0.12))"></div><div style="position:absolute;left:317.1px;top:116.2px;width:4.8px;height:3.1px;"><svg viewBox="0 0 10 6" width="100%" height="100%"><path d="M0.5 0.5 H9.5 L5 5.8Z" fill="#e2e2e2"/></svg></div><div style="position:absolute;left:327.7px;top:114.6px;width:7.4px;height:7.4px;background:#141414;border-radius:0.8px"><svg viewBox="0 0 10 10" width="100%" height="100%"><path d="M2 5.2 L4.1 7.3 L8.3 2.6" fill="none" stroke="#1b7ae0" stroke-width="1.7"/></svg></div><div class="t" style="left:338.5px;top:115.08px;font-size:6.2px;line-height:7.44px;color:#cdc9c5;font-weight:700;letter-spacing:0.15px">Core_Mesh</div><div style="position:absolute;left:312.1px;top:124.9px;width:80.8px;height:20.9px;background:rgba(24,24,24,0.84)"></div><div style="position:absolute;left:316.1px;top:131.9px;width:4.6px;height:7.4px;"><svg viewBox="0 0 6 9" width="100%" height="100%"><ellipse cx="3" cy="1.4" rx="0.9" ry="1.0" fill="#bdbdbd"/><path d="M1.6 2.6 Q3 1.8 4.4 2.6 L4.3 5.6 Q3 6.4 1.7 5.6Z" fill="#d8d8d8"/><path d="M0.2 8.8 Q0.6 6.2 3 6.1 Q5.4 6.2 5.8 8.8Z" fill="#a0a0a0"/></svg></div><div style="position:absolute;left:322.7px;top:127.4px;width:14.6px;height:16.8px;background:#202020"></div><div style="position:absolute;left:323.9px;top:129.6px;width:10.6px;height:11.2px;background:#060606;border-bottom:1.6px solid #13a3a0;box-sizing:border-box"></div><div style="position:absolute;left:328.7px;top:134.5px;width:0.9px;height:0.9px;background:#e79a9a"></div><div style="position:absolute;left:312.1px;top:145.8px;width:80.8px;height:10.81px;background:#2a2a2a;border-bottom:0.9px solid #1c1c1c;box-sizing:border-box"></div><div style="position:absolute;left:313.1px;top:147.4px;width:6px;height:6px;"><svg viewBox="0 0 10 10" width="100%" height="100%"><path d="M1.6 8.4 L8.4 1.6" stroke="#b04a2a" stroke-width="2.6"/><path d="M0.8 9.2 L2 8" stroke="#d07050" stroke-width="1.2"/></svg></div><div class="t" style="left:321px;top:149.25px;font-size:4.75px;line-height:5.7px;color:#aeaeae;font-weight:400;letter-spacing:0.1px">Properties</div><div class="t" style="left:346.2px;top:150.28px;font-size:3.7px;line-height:4.44px;color:#e6e6e6;font-weight:700;letter-spacing:-0.15px">GPU</div><div style="position:absolute;left:346.3px;top:147.9px;width:4px;height:0.6px;background:#9a9a9a"></div><div style="position:absolute;left:346.2px;top:153.4px;width:7.2px;height:0.8px;background:#d0d0d0"></div><div style="position:absolute;left:369.3px;top:146.8px;width:22.4px;height:8.2px;background:#1f1f1f;border-radius:1px"></div><div style="position:absolute;left:370.3px;top:148px;width:5.6px;height:5.6px;"><svg viewBox="0 0 10 10" width="100%" height="100%"><path d="M5 0.8 V9.2 M0.8 5 H9.2" stroke="#f07018" stroke-width="2.2"/></svg></div><div class="t" style="left:376.8px;top:149.25px;font-size:4.75px;line-height:5.7px;color:#b4b4b4;font-weight:400;letter-spacing:0.1px">Stage</div><div style="position:absolute;left:312.1px;top:156.61px;width:80.8px;height:10.81px;background:#2d2d2d;border-bottom:0.9px solid #1c1c1c;box-sizing:border-box"></div><div style="position:absolute;left:312.9px;top:158.81px;width:6.6px;height:5.6px;"><svg viewBox="0 0 10 9" width="100%" height="100%"><path d="M0 0.8 H10" stroke="#a05030" stroke-width="0.8"/><path d="M0 4 H2.2 M3 4 H10 M0 7.3 H2.2 M3 7.3 H10" stroke="#b85a36" stroke-width="2"/></svg></div><div class="t" style="left:321.3px;top:160.15px;font-size:4.6px;line-height:5.52px;color:#b0b0b0;font-weight:700;letter-spacing:0.05px">Emitter Summary</div><div style="position:absolute;left:312.1px;top:167.41px;width:80.8px;height:10.31px;background:#2b2b2b;border-bottom:0.9px solid #1c1c1c;box-sizing:border-box"></div><div class="t" style="left:321.7px;top:170.7px;font-size:4.6px;line-height:5.52px;color:#b2b2b2;font-weight:700;letter-spacing:0.05px">Emitter Spawn</div><div style="position:absolute;left:382.7px;top:168.86px;width:7.8px;height:7.8px;"><svg viewBox="0 0 10 10" width="100%" height="100%"><circle cx="5" cy="5" r="4.0" fill="none" stroke="#a0603f" stroke-width="0.85" opacity="0.9"/><path d="M5 3.6 V6.4 M3.6 5 H6.4" stroke="#a0603f" stroke-width="1.1"/></svg></div><div style="position:absolute;left:312.1px;top:177.72px;width:80.8px;height:10.31px;background:#2b2b2b;border-bottom:0.9px solid #1c1c1c;box-sizing:border-box"></div><div style="position:absolute;left:314.7px;top:180.57px;width:4.6px;height:3px;"><svg viewBox="0 0 10 6" width="100%" height="100%"><path d="M0.5 0.5 H9.5 L5 5.8Z" fill="#d0d0d0"/></svg></div><div class="t" style="left:321.7px;top:181.01px;font-size:4.6px;line-height:5.52px;color:#b2b2b2;font-weight:700;letter-spacing:0.05px">Emitter Update</div><div style="position:absolute;left:382.7px;top:179.17px;width:7.8px;height:7.8px;"><svg viewBox="0 0 10 10" width="100%" height="100%"><circle cx="5" cy="5" r="4.0" fill="none" stroke="#a0603f" stroke-width="0.85" opacity="0.9"/><path d="M5 3.6 V6.4 M3.6 5 H6.4" stroke="#a0603f" stroke-width="1.1"/></svg></div><div style="position:absolute;left:312.1px;top:188.02px;width:80.8px;height:10.01px;background:#212121;border-bottom:0.9px solid #181818;box-sizing:border-box"></div><div style="position:absolute;left:312.3px;top:188.02px;width:1.2px;height:9.11px;background:#553724"></div><div class="t" style="left:316.3px;top:191px;font-size:4.7px;line-height:5.64px;color:#9a9a9a;font-weight:400;letter-spacing:0.05px">Emitter State</div><div style="position:absolute;left:346.5px;top:190.42px;width:9px;height:6.6px;background:#9c5c0e;border-radius:1.8px"></div><div class="t" style="left:347.7px;top:191.02px;font-size:4.5px;line-height:5.4px;color:#f0dcc0;font-weight:700;transform:scaleX(0.85);transform-origin:0 50%">Self</div><div style="position:absolute;left:357.3px;top:189.92px;width:11.2px;height:7px;background:#0a0a0a;border-radius:1.2px"></div><div class="t" style="left:358.1px;top:190.62px;font-size:4.5px;line-height:5.4px;color:#e8e8e8;font-weight:400;transform:scaleX(0.82);transform-origin:0 50%">Once</div><div style="position:absolute;left:383.8px;top:189.92px;width:6.6px;height:6.6px;background:#0e0e0e;border-radius:0.6px"><svg viewBox="0 0 10 10" width="100%" height="100%"><path d="M2 5.2 L4.1 7.3 L8.3 2.6" fill="none" stroke="#1b7ae0" stroke-width="1.7"/></svg></div><div style="position:absolute;left:312.1px;top:198.03px;width:80.8px;height:10.01px;background:#212121;border-bottom:0.9px solid #181818;box-sizing:border-box"></div><div style="position:absolute;left:312.3px;top:198.03px;width:1.2px;height:9.11px;background:#553724"></div><div class="t" style="left:316.3px;top:201.01px;font-size:4.7px;line-height:5.64px;color:#9a9a9a;font-weight:400;letter-spacing:0.05px">Spawn Burst Instantaneous</div><div style="position:absolute;left:383.8px;top:199.93px;width:6.6px;height:6.6px;background:#0e0e0e;border-radius:0.6px"><svg viewBox="0 0 10 10" width="100%" height="100%"><path d="M2 5.2 L4.1 7.3 L8.3 2.6" fill="none" stroke="#1b7ae0" stroke-width="1.7"/></svg></div><div style="position:absolute;left:312.1px;top:208.03px;width:80.8px;height:10.31px;background:#2b2b2b;border-bottom:0.9px solid #1c1c1c;box-sizing:border-box"></div><div style="position:absolute;left:314.7px;top:210.88px;width:4.6px;height:3px;"><svg viewBox="0 0 10 6" width="100%" height="100%"><path d="M0.5 0.5 H9.5 L5 5.8Z" fill="#d0d0d0"/></svg></div><div class="t" style="left:321.7px;top:211.32px;font-size:4.6px;line-height:5.52px;color:#b2b2b2;font-weight:700;letter-spacing:0.05px">Particle Spawn</div><div style="position:absolute;left:382.7px;top:209.48px;width:7.8px;height:7.8px;"><svg viewBox="0 0 10 10" width="100%" height="100%"><circle cx="5" cy="5" r="4.0" fill="none" stroke="#6a9a42" stroke-width="0.85" opacity="0.9"/><path d="M5 3.6 V6.4 M3.6 5 H6.4" stroke="#6a9a42" stroke-width="1.1"/></svg></div><div style="position:absolute;left:312.1px;top:218.34px;width:80.8px;height:10.01px;background:#212121;border-bottom:0.9px solid #181818;box-sizing:border-box"></div><div style="position:absolute;left:312.3px;top:218.34px;width:1.2px;height:9.11px;background:#374c26"></div><div class="t" style="left:316.3px;top:221.32px;font-size:4.7px;line-height:5.64px;color:#9a9a9a;font-weight:400;letter-spacing:0.05px">Initialize Particle</div><div style="position:absolute;left:383.8px;top:220.24px;width:6.6px;height:6.6px;background:#0e0e0e;border-radius:0.6px"><svg viewBox="0 0 10 10" width="100%" height="100%"><path d="M2 5.2 L4.1 7.3 L8.3 2.6" fill="none" stroke="#1b7ae0" stroke-width="1.7"/></svg></div><div style="position:absolute;left:312.1px;top:228.34px;width:80.8px;height:10.01px;background:#212121;border-bottom:0.9px solid #181818;box-sizing:border-box"></div><div style="position:absolute;left:312.3px;top:228.34px;width:1.2px;height:9.11px;background:#374c26"></div><div class="t" style="left:316.3px;top:231.33px;font-size:4.7px;line-height:5.64px;color:#9a9a9a;font-weight:400;letter-spacing:0.05px">Add Velocity</div><div style="position:absolute;left:383.8px;top:230.25px;width:6.6px;height:6.6px;background:#0e0e0e;border-radius:0.6px"><svg viewBox="0 0 10 10" width="100%" height="100%"><path d="M2 5.2 L4.1 7.3 L8.3 2.6" fill="none" stroke="#1b7ae0" stroke-width="1.7"/></svg></div><div style="position:absolute;left:312.1px;top:238.35px;width:80.8px;height:10.31px;background:#2b2b2b;border-bottom:0.9px solid #1c1c1c;box-sizing:border-box"></div><div style="position:absolute;left:314.7px;top:241.2px;width:4.6px;height:3px;"><svg viewBox="0 0 10 6" width="100%" height="100%"><path d="M0.5 0.5 H9.5 L5 5.8Z" fill="#d0d0d0"/></svg></div><div class="t" style="left:321.7px;top:241.64px;font-size:4.6px;line-height:5.52px;color:#b2b2b2;font-weight:700;letter-spacing:0.05px">Particle Update</div><div style="position:absolute;left:382.7px;top:239.8px;width:7.8px;height:7.8px;"><svg viewBox="0 0 10 10" width="100%" height="100%"><circle cx="5" cy="5" r="4.0" fill="none" stroke="#6a9a42" stroke-width="0.85" opacity="0.9"/><path d="M5 3.6 V6.4 M3.6 5 H6.4" stroke="#6a9a42" stroke-width="1.1"/></svg></div><div style="position:absolute;left:312.1px;top:248.65px;width:80.8px;height:10.01px;background:#212121;border-bottom:0.9px solid #181818;box-sizing:border-box"></div><div style="position:absolute;left:312.3px;top:248.65px;width:1.2px;height:9.11px;background:#374c26"></div><div class="t" style="left:316.3px;top:251.64px;font-size:4.7px;line-height:5.64px;color:#9a9a9a;font-weight:400;letter-spacing:0.05px">Particle State</div><div style="position:absolute;left:383.8px;top:250.56px;width:6.6px;height:6.6px;background:#0e0e0e;border-radius:0.6px"><svg viewBox="0 0 10 10" width="100%" height="100%"><path d="M2 5.2 L4.1 7.3 L8.3 2.6" fill="none" stroke="#1b7ae0" stroke-width="1.7"/></svg></div><div style="position:absolute;left:312.1px;top:258.66px;width:80.8px;height:10.01px;background:#212121;border-bottom:0.9px solid #181818;box-sizing:border-box"></div><div style="position:absolute;left:312.3px;top:258.66px;width:1.2px;height:9.11px;background:#374c26"></div><div class="t" style="left:316.3px;top:261.64px;font-size:4.7px;line-height:5.64px;color:#9a9a9a;font-weight:400;letter-spacing:0.05px">Solve Forces and Velocity</div><div style="position:absolute;left:383.8px;top:260.56px;width:6.6px;height:6.6px;background:#0e0e0e;border-radius:0.6px"><svg viewBox="0 0 10 10" width="100%" height="100%"><path d="M2 5.2 L4.1 7.3 L8.3 2.6" fill="none" stroke="#1b7ae0" stroke-width="1.7"/></svg></div><div style="position:absolute;left:312.1px;top:268.66px;width:80.8px;height:10.01px;background:#212121;border-bottom:0.9px solid #181818;box-sizing:border-box"></div><div style="position:absolute;left:312.3px;top:268.66px;width:1.2px;height:9.11px;background:#374c26"></div><div class="t" style="left:316.3px;top:271.65px;font-size:4.7px;line-height:5.64px;color:#9a9a9a;font-weight:400;letter-spacing:0.05px">Generate Location Event</div><div style="position:absolute;left:383.8px;top:270.57px;width:6.6px;height:6.6px;background:#0e0e0e;border-radius:0.6px"><svg viewBox="0 0 10 10" width="100%" height="100%"><path d="M2 5.2 L4.1 7.3 L8.3 2.6" fill="none" stroke="#1b7ae0" stroke-width="1.7"/></svg></div><div style="position:absolute;left:312.1px;top:278.67px;width:80.8px;height:10.01px;background:#212121;border-bottom:0.9px solid #181818;box-sizing:border-box"></div><div style="position:absolute;left:312.3px;top:278.67px;width:1.2px;height:9.11px;background:#374c26"></div><div class="t" style="left:316.3px;top:281.65px;font-size:4.7px;line-height:5.64px;color:#9a9a9a;font-weight:400;letter-spacing:0.05px">Generate Death Event</div><div style="position:absolute;left:383.8px;top:280.57px;width:6.6px;height:6.6px;background:#0e0e0e;border-radius:0.6px"><svg viewBox="0 0 10 10" width="100%" height="100%"><path d="M2 5.2 L4.1 7.3 L8.3 2.6" fill="none" stroke="#1b7ae0" stroke-width="1.7"/></svg></div><div style="position:absolute;left:312.1px;top:288.67px;width:80.8px;height:10.01px;background:#212121;border-bottom:0.9px solid #181818;box-sizing:border-box"></div><div style="position:absolute;left:312.3px;top:288.67px;width:1.2px;height:9.11px;background:#374c26"></div><div class="t" style="left:316.3px;top:291.66px;font-size:4.7px;line-height:5.64px;color:#9a9a9a;font-weight:400;letter-spacing:0.05px">Dynamic Material Parameters</div><div style="position:absolute;left:383.8px;top:290.58px;width:6.6px;height:6.6px;background:#0e0e0e;border-radius:0.6px"><svg viewBox="0 0 10 10" width="100%" height="100%"><path d="M2 5.2 L4.1 7.3 L8.3 2.6" fill="none" stroke="#1b7ae0" stroke-width="1.7"/></svg></div><div style="position:absolute;left:312.1px;top:298.68px;width:80.8px;height:10.01px;background:#212121;border-bottom:0.9px solid #181818;box-sizing:border-box"></div><div style="position:absolute;left:312.3px;top:298.68px;width:1.2px;height:9.11px;background:#374c26"></div><div class="t" style="left:316.3px;top:301.66px;font-size:4.7px;line-height:5.64px;color:#9a9a9a;font-weight:400;letter-spacing:0.05px">Scale Mesh Size</div><div style="position:absolute;left:383.8px;top:300.58px;width:6.6px;height:6.6px;background:#0e0e0e;border-radius:0.6px"><svg viewBox="0 0 10 10" width="100%" height="100%"><path d="M2 5.2 L4.1 7.3 L8.3 2.6" fill="none" stroke="#1b7ae0" stroke-width="1.7"/></svg></div><div style="position:absolute;left:312.1px;top:308.68px;width:80.8px;height:10.01px;background:#212121;border-bottom:0.9px solid #181818;box-sizing:border-box"></div><div style="position:absolute;left:312.3px;top:308.68px;width:1.2px;height:9.11px;background:#374c26"></div><div class="t" style="left:316.3px;top:311.67px;font-size:4.7px;line-height:5.64px;color:#9a9a9a;font-weight:400;letter-spacing:0.05px">Update Mesh Orientation</div><div style="position:absolute;left:372.5px;top:312.49px;width:6px;height:4px;"><svg viewBox="0 0 10 7" width="100%" height="100%"><path d="M0.6 3.5 L5 0.6 L9.4 3.5 L5 6.4Z" fill="none" stroke="#9a9a9a" stroke-width="0.9"/><circle cx="5" cy="3.5" r="1.2" fill="#9a9a9a"/></svg></div><div style="position:absolute;left:383.8px;top:310.59px;width:6.6px;height:6.6px;background:#0e0e0e;border-radius:0.6px"><svg viewBox="0 0 10 10" width="100%" height="100%"><path d="M2 5.2 L4.1 7.3 L8.3 2.6" fill="none" stroke="#1b7ae0" stroke-width="1.7"/></svg></div><div style="position:absolute;left:312.1px;top:318.69px;width:80.8px;height:10.31px;background:#2b2b2b;border-bottom:0.9px solid #1c1c1c;box-sizing:border-box"></div><div style="position:absolute;left:314.7px;top:321.54px;width:4.6px;height:3px;"><svg viewBox="0 0 10 6" width="100%" height="100%"><path d="M0.5 0.5 H9.5 L5 5.8Z" fill="#d0d0d0"/></svg></div><div class="t" style="left:321.7px;top:321.98px;font-size:4.6px;line-height:5.52px;color:#b2b2b2;font-weight:700;letter-spacing:0.05px">Render</div><div style="position:absolute;left:382.7px;top:320.14px;width:7.8px;height:7.8px;"><svg viewBox="0 0 10 10" width="100%" height="100%"><circle cx="5" cy="5" r="4.0" fill="none" stroke="#a85050" stroke-width="0.85" opacity="0.9"/><path d="M5 3.6 V6.4 M3.6 5 H6.4" stroke="#a85050" stroke-width="1.1"/></svg></div><div style="position:absolute;left:312.1px;top:328.99px;width:80.8px;height:10.71px;background:#212121;border-bottom:0.9px solid #181818;box-sizing:border-box"></div><div style="position:absolute;left:312.3px;top:328.99px;width:1.2px;height:9.81px;background:#563030"></div><div style="position:absolute;left:315.5px;top:331.75px;width:5.8px;height:6px;"><svg viewBox="0 0 10 10" width="100%" height="100%"><path d="M0.5 1.5 Q5 0 9.5 1.5 V8.3 Q5 10 0.5 8.3Z" fill="#e8e8e8"/><path d="M6.5 2 H9.5 V8.3 Q8 9.3 6.5 9.3Z" fill="#8a8a8a"/><path d="M0.5 1.5 Q5 3 9.5 1.5" stroke="#b0b0b0" stroke-width="0.6" fill="none"/></svg></div><div class="t" style="left:324.7px;top:332.33px;font-size:4.7px;line-height:5.64px;color:#9a9a9a;font-weight:400;letter-spacing:0.05px">Mesh Renderer</div><div style="position:absolute;left:383.8px;top:331.25px;width:6.6px;height:6.6px;background:#0e0e0e;border-radius:0.6px"><svg viewBox="0 0 10 10" width="100%" height="100%"><path d="M2 5.2 L4.1 7.3 L8.3 2.6" fill="none" stroke="#1b7ae0" stroke-width="1.7"/></svg></div><div style="position:absolute;left:430.3px;top:111.5px;width:96.2px;height:241.3px;background:#151515;border-radius:2.5px;box-shadow:0 1px 2px rgba(0,0,0,0.5)"></div><div style="position:absolute;left:430.8px;top:111.5px;width:95.2px;height:13.2px;border-radius:2.5px 2.5px 0 0;background:linear-gradient(100deg,#88481b 0%,#824519 38%,#5e3d27 60%,#3e3935 80%,#373737 100%)"></div><div style="position:absolute;left:430.8px;top:111.5px;width:95.2px;height:13.2px;border-radius:2.5px 2.5px 0 0;background:linear-gradient(180deg,rgba(255,190,130,0.16) 0%,rgba(0,0,0,0.18) 40%,rgba(0,0,0,0.12) 60%,rgba(0,0,0,0) 100%)"></div><div style="position:absolute;left:430.8px;top:111.5px;width:95.2px;height:1px;border-radius:2.5px 2.5px 0 0;background:linear-gradient(90deg,rgba(255,200,150,0.22),rgba(255,255,255,0.12))"></div><div style="position:absolute;left:435.8px;top:116px;width:4.8px;height:3.1px;"><svg viewBox="0 0 10 6" width="100%" height="100%"><path d="M0.5 0.5 H9.5 L5 5.8Z" fill="#e2e2e2"/></svg></div><div style="position:absolute;left:446.4px;top:114.4px;width:7.4px;height:7.4px;background:#141414;border-radius:0.8px"><svg viewBox="0 0 10 10" width="100%" height="100%"><path d="M2 5.2 L4.1 7.3 L8.3 2.6" fill="none" stroke="#1b7ae0" stroke-width="1.7"/></svg></div><div class="t" style="left:457.2px;top:114.88px;font-size:6.2px;line-height:7.44px;color:#cdc9c5;font-weight:700;letter-spacing:0.15px">Core_Light</div><div style="position:absolute;left:430.8px;top:124.7px;width:95.2px;height:20.9px;background:rgba(24,24,24,0.84)"></div><div style="position:absolute;left:434.8px;top:131.7px;width:4.6px;height:7.4px;"><svg viewBox="0 0 6 9" width="100%" height="100%"><ellipse cx="3" cy="1.4" rx="0.9" ry="1.0" fill="#bdbdbd"/><path d="M1.6 2.6 Q3 1.8 4.4 2.6 L4.3 5.6 Q3 6.4 1.7 5.6Z" fill="#d8d8d8"/><path d="M0.2 8.8 Q0.6 6.2 3 6.1 Q5.4 6.2 5.8 8.8Z" fill="#a0a0a0"/></svg></div><div style="position:absolute;left:441.4px;top:127.2px;width:14.6px;height:16.8px;background:#202020"></div><div style="position:absolute;left:442.6px;top:129.4px;width:10.6px;height:11.2px;background:#060606;border-bottom:1.6px solid #169c16;box-sizing:border-box"></div><div style="position:absolute;left:447.3px;top:134.3px;width:1.2px;height:0.7px;background:#bbbbbb"></div><div style="position:absolute;left:456px;top:127.2px;width:14.6px;height:16.8px;background:#202020"></div><div style="position:absolute;left:460.6px;top:130.9px;width:5.6px;height:7.6px;"><svg viewBox="0 0 8 10" width="100%" height="100%"><circle cx="4" cy="3.6" r="3.2" fill="#ececec"/><path d="M2.6 6 H5.4 L5 8.8 H3Z" fill="#dcdcdc"/></svg></div><div style="position:absolute;left:456px;top:128.9px;width:0.8px;height:13.2px;background:#141414"></div><div style="position:absolute;left:430.8px;top:145.6px;width:95.2px;height:10.82px;background:#2a2a2a;border-bottom:0.9px solid #1c1c1c;box-sizing:border-box"></div><div style="position:absolute;left:431.8px;top:147.2px;width:6px;height:6px;"><svg viewBox="0 0 10 10" width="100%" height="100%"><path d="M1.6 8.4 L8.4 1.6" stroke="#b04a2a" stroke-width="2.6"/><path d="M0.8 9.2 L2 8" stroke="#d07050" stroke-width="1.2"/></svg></div><div class="t" style="left:439.7px;top:149.06px;font-size:4.75px;line-height:5.7px;color:#aeaeae;font-weight:400;letter-spacing:0.1px">Properties</div><div class="t" style="left:464.9px;top:150.09px;font-size:3.7px;line-height:4.44px;color:#e6e6e6;font-weight:700;letter-spacing:-0.15px">GPU</div><div style="position:absolute;left:465px;top:147.7px;width:4px;height:0.6px;background:#9a9a9a"></div><div style="position:absolute;left:464.9px;top:153.2px;width:7.2px;height:0.8px;background:#d0d0d0"></div><div style="position:absolute;left:502.4px;top:146.6px;width:22.4px;height:8.2px;background:#1f1f1f;border-radius:1px"></div><div style="position:absolute;left:503.4px;top:147.8px;width:5.6px;height:5.6px;"><svg viewBox="0 0 10 10" width="100%" height="100%"><path d="M5 0.8 V9.2 M0.8 5 H9.2" stroke="#f07018" stroke-width="2.2"/></svg></div><div class="t" style="left:509.9px;top:149.06px;font-size:4.75px;line-height:5.7px;color:#b4b4b4;font-weight:400;letter-spacing:0.1px">Stage</div><div style="position:absolute;left:430.8px;top:156.42px;width:95.2px;height:10.82px;background:#2d2d2d;border-bottom:0.9px solid #1c1c1c;box-sizing:border-box"></div><div style="position:absolute;left:431.6px;top:158.62px;width:6.6px;height:5.6px;"><svg viewBox="0 0 10 9" width="100%" height="100%"><path d="M0 0.8 H10" stroke="#a05030" stroke-width="0.8"/><path d="M0 4 H2.2 M3 4 H10 M0 7.3 H2.2 M3 7.3 H10" stroke="#b85a36" stroke-width="2"/></svg></div><div class="t" style="left:440px;top:159.96px;font-size:4.6px;line-height:5.52px;color:#b0b0b0;font-weight:700;letter-spacing:0.05px">Emitter Summary</div><div style="position:absolute;left:430.8px;top:167.23px;width:95.2px;height:10.32px;background:#2b2b2b;border-bottom:0.9px solid #1c1c1c;box-sizing:border-box"></div><div class="t" style="left:440.4px;top:170.53px;font-size:4.6px;line-height:5.52px;color:#b2b2b2;font-weight:700;letter-spacing:0.05px">Emitter Spawn</div><div style="position:absolute;left:515.8px;top:168.69px;width:7.8px;height:7.8px;"><svg viewBox="0 0 10 10" width="100%" height="100%"><circle cx="5" cy="5" r="4.0" fill="none" stroke="#a0603f" stroke-width="0.85" opacity="0.9"/><path d="M5 3.6 V6.4 M3.6 5 H6.4" stroke="#a0603f" stroke-width="1.1"/></svg></div><div style="position:absolute;left:430.8px;top:177.55px;width:95.2px;height:10.32px;background:#2b2b2b;border-bottom:0.9px solid #1c1c1c;box-sizing:border-box"></div><div style="position:absolute;left:433.4px;top:180.4px;width:4.6px;height:3px;"><svg viewBox="0 0 10 6" width="100%" height="100%"><path d="M0.5 0.5 H9.5 L5 5.8Z" fill="#d0d0d0"/></svg></div><div class="t" style="left:440.4px;top:180.84px;font-size:4.6px;line-height:5.52px;color:#b2b2b2;font-weight:700;letter-spacing:0.05px">Emitter Update</div><div style="position:absolute;left:515.8px;top:179px;width:7.8px;height:7.8px;"><svg viewBox="0 0 10 10" width="100%" height="100%"><circle cx="5" cy="5" r="4.0" fill="none" stroke="#a0603f" stroke-width="0.85" opacity="0.9"/><path d="M5 3.6 V6.4 M3.6 5 H6.4" stroke="#a0603f" stroke-width="1.1"/></svg></div><div style="position:absolute;left:430.8px;top:187.86px;width:95.2px;height:10.01px;background:#212121;border-bottom:0.9px solid #181818;box-sizing:border-box"></div><div style="position:absolute;left:431px;top:187.86px;width:1.2px;height:9.11px;background:#553724"></div><div class="t" style="left:435px;top:190.85px;font-size:4.7px;line-height:5.64px;color:#9a9a9a;font-weight:400;letter-spacing:0.05px">Emitter State</div><div style="position:absolute;left:465.2px;top:190.27px;width:9px;height:6.6px;background:#9c5c0e;border-radius:1.8px"></div><div class="t" style="left:466.4px;top:190.87px;font-size:4.5px;line-height:5.4px;color:#f0dcc0;font-weight:700;transform:scaleX(0.85);transform-origin:0 50%">Self</div><div style="position:absolute;left:476px;top:189.77px;width:11.2px;height:7px;background:#0a0a0a;border-radius:1.2px"></div><div class="t" style="left:476.8px;top:190.47px;font-size:4.5px;line-height:5.4px;color:#e8e8e8;font-weight:400;transform:scaleX(0.82);transform-origin:0 50%">Once</div><div style="position:absolute;left:516.9px;top:189.77px;width:6.6px;height:6.6px;background:#0e0e0e;border-radius:0.6px"><svg viewBox="0 0 10 10" width="100%" height="100%"><path d="M2 5.2 L4.1 7.3 L8.3 2.6" fill="none" stroke="#1b7ae0" stroke-width="1.7"/></svg></div><div style="position:absolute;left:430.8px;top:197.88px;width:95.2px;height:10.01px;background:#212121;border-bottom:0.9px solid #181818;box-sizing:border-box"></div><div style="position:absolute;left:431px;top:197.88px;width:1.2px;height:9.11px;background:#553724"></div><div class="t" style="left:435px;top:200.86px;font-size:4.7px;line-height:5.64px;color:#9a9a9a;font-weight:400;letter-spacing:0.05px">Spawn Burst Instantaneous</div><div style="position:absolute;left:516.9px;top:199.78px;width:6.6px;height:6.6px;background:#0e0e0e;border-radius:0.6px"><svg viewBox="0 0 10 10" width="100%" height="100%"><path d="M2 5.2 L4.1 7.3 L8.3 2.6" fill="none" stroke="#1b7ae0" stroke-width="1.7"/></svg></div><div style="position:absolute;left:430.8px;top:207.89px;width:95.2px;height:10.32px;background:#2b2b2b;border-bottom:0.9px solid #1c1c1c;box-sizing:border-box"></div><div style="position:absolute;left:433.4px;top:210.75px;width:4.6px;height:3px;"><svg viewBox="0 0 10 6" width="100%" height="100%"><path d="M0.5 0.5 H9.5 L5 5.8Z" fill="#d0d0d0"/></svg></div><div class="t" style="left:440.4px;top:211.19px;font-size:4.6px;line-height:5.52px;color:#b2b2b2;font-weight:700;letter-spacing:0.05px">Particle Spawn</div><div style="position:absolute;left:515.8px;top:209.35px;width:7.8px;height:7.8px;"><svg viewBox="0 0 10 10" width="100%" height="100%"><circle cx="5" cy="5" r="4.0" fill="none" stroke="#6a9a42" stroke-width="0.85" opacity="0.9"/><path d="M5 3.6 V6.4 M3.6 5 H6.4" stroke="#6a9a42" stroke-width="1.1"/></svg></div><div style="position:absolute;left:430.8px;top:218.21px;width:95.2px;height:10.01px;background:#212121;border-bottom:0.9px solid #181818;box-sizing:border-box"></div><div style="position:absolute;left:431px;top:218.21px;width:1.2px;height:9.11px;background:#374c26"></div><div class="t" style="left:435px;top:221.19px;font-size:4.7px;line-height:5.64px;color:#9a9a9a;font-weight:400;letter-spacing:0.05px">Initialize Particle</div><div style="position:absolute;left:516.9px;top:220.11px;width:6.6px;height:6.6px;background:#0e0e0e;border-radius:0.6px"><svg viewBox="0 0 10 10" width="100%" height="100%"><path d="M2 5.2 L4.1 7.3 L8.3 2.6" fill="none" stroke="#1b7ae0" stroke-width="1.7"/></svg></div><div style="position:absolute;left:430.8px;top:228.22px;width:95.2px;height:10.01px;background:#212121;border-bottom:0.9px solid #181818;box-sizing:border-box"></div><div style="position:absolute;left:431px;top:228.22px;width:1.2px;height:9.11px;background:#374c26"></div><div class="t" style="left:435px;top:231.21px;font-size:4.7px;line-height:5.64px;color:#9a9a9a;font-weight:400;letter-spacing:0.05px">Sphere Location</div><div style="position:absolute;left:505.6px;top:232.03px;width:6px;height:4px;"><svg viewBox="0 0 10 7" width="100%" height="100%"><path d="M0.6 3.5 L5 0.6 L9.4 3.5 L5 6.4Z" fill="none" stroke="#9a9a9a" stroke-width="0.9"/><circle cx="5" cy="3.5" r="1.2" fill="#9a9a9a"/></svg></div><div style="position:absolute;left:516.9px;top:230.13px;width:6.6px;height:6.6px;background:#0e0e0e;border-radius:0.6px"><svg viewBox="0 0 10 10" width="100%" height="100%"><path d="M2 5.2 L4.1 7.3 L8.3 2.6" fill="none" stroke="#1b7ae0" stroke-width="1.7"/></svg></div><div style="position:absolute;left:430.8px;top:238.24px;width:95.2px;height:10.01px;background:#212121;border-bottom:0.9px solid #181818;box-sizing:border-box"></div><div style="position:absolute;left:431px;top:238.24px;width:1.2px;height:9.11px;background:#374c26"></div><div class="t" style="left:435px;top:241.22px;font-size:4.7px;line-height:5.64px;color:#9a9a9a;font-weight:400;letter-spacing:0.05px">Add Velocity</div><div style="position:absolute;left:516.9px;top:240.14px;width:6.6px;height:6.6px;background:#0e0e0e;border-radius:0.6px"><svg viewBox="0 0 10 10" width="100%" height="100%"><path d="M2 5.2 L4.1 7.3 L8.3 2.6" fill="none" stroke="#1b7ae0" stroke-width="1.7"/></svg></div><div style="position:absolute;left:430.8px;top:248.25px;width:95.2px;height:10.32px;background:#2b2b2b;border-bottom:0.9px solid #1c1c1c;box-sizing:border-box"></div><div style="position:absolute;left:433.4px;top:251.11px;width:4.6px;height:3px;"><svg viewBox="0 0 10 6" width="100%" height="100%"><path d="M0.5 0.5 H9.5 L5 5.8Z" fill="#d0d0d0"/></svg></div><div class="t" style="left:440.4px;top:251.55px;font-size:4.6px;line-height:5.52px;color:#b2b2b2;font-weight:700;letter-spacing:0.05px">Particle Update</div><div style="position:absolute;left:515.8px;top:249.71px;width:7.8px;height:7.8px;"><svg viewBox="0 0 10 10" width="100%" height="100%"><circle cx="5" cy="5" r="4.0" fill="none" stroke="#6a9a42" stroke-width="0.85" opacity="0.9"/><path d="M5 3.6 V6.4 M3.6 5 H6.4" stroke="#6a9a42" stroke-width="1.1"/></svg></div><div style="position:absolute;left:430.8px;top:258.57px;width:95.2px;height:10.01px;background:#212121;border-bottom:0.9px solid #181818;box-sizing:border-box"></div><div style="position:absolute;left:431px;top:258.57px;width:1.2px;height:9.11px;background:#374c26"></div><div class="t" style="left:435px;top:261.55px;font-size:4.7px;line-height:5.64px;color:#9a9a9a;font-weight:400;letter-spacing:0.05px">Particle State</div><div style="position:absolute;left:516.9px;top:260.47px;width:6.6px;height:6.6px;background:#0e0e0e;border-radius:0.6px"><svg viewBox="0 0 10 10" width="100%" height="100%"><path d="M2 5.2 L4.1 7.3 L8.3 2.6" fill="none" stroke="#1b7ae0" stroke-width="1.7"/></svg></div><div style="position:absolute;left:430.8px;top:268.58px;width:95.2px;height:10.01px;background:#212121;border-bottom:0.9px solid #181818;box-sizing:border-box"></div><div style="position:absolute;left:431px;top:268.58px;width:1.2px;height:9.11px;background:#374c26"></div><div class="t" style="left:435px;top:271.57px;font-size:4.7px;line-height:5.64px;color:#9a9a9a;font-weight:400;letter-spacing:0.05px">Scale Color</div><div style="position:absolute;left:516.9px;top:270.49px;width:6.6px;height:6.6px;background:#0e0e0e;border-radius:0.6px"><svg viewBox="0 0 10 10" width="100%" height="100%"><path d="M2 5.2 L4.1 7.3 L8.3 2.6" fill="none" stroke="#1b7ae0" stroke-width="1.7"/></svg></div><div style="position:absolute;left:430.8px;top:278.59px;width:95.2px;height:10.01px;background:#212121;border-bottom:0.9px solid #181818;box-sizing:border-box"></div><div style="position:absolute;left:431px;top:278.59px;width:1.2px;height:9.11px;background:#374c26"></div><div class="t" style="left:435px;top:281.58px;font-size:4.7px;line-height:5.64px;color:#9a9a9a;font-weight:400;letter-spacing:0.05px">Curl Noise Force</div><div style="position:absolute;left:516.9px;top:280.5px;width:6.6px;height:6.6px;background:#0e0e0e;border-radius:0.6px"><svg viewBox="0 0 10 10" width="100%" height="100%"><path d="M2 5.2 L4.1 7.3 L8.3 2.6" fill="none" stroke="#1b7ae0" stroke-width="1.7"/></svg></div><div style="position:absolute;left:430.8px;top:288.61px;width:95.2px;height:10.01px;background:#212121;border-bottom:0.9px solid #181818;box-sizing:border-box"></div><div style="position:absolute;left:431px;top:288.61px;width:1.2px;height:9.11px;background:#374c26"></div><div class="t" style="left:435px;top:291.6px;font-size:4.7px;line-height:5.64px;color:#9a9a9a;font-weight:400;letter-spacing:0.05px">Solve Forces and Velocity</div><div style="position:absolute;left:516.9px;top:290.52px;width:6.6px;height:6.6px;background:#0e0e0e;border-radius:0.6px"><svg viewBox="0 0 10 10" width="100%" height="100%"><path d="M2 5.2 L4.1 7.3 L8.3 2.6" fill="none" stroke="#1b7ae0" stroke-width="1.7"/></svg></div><div style="position:absolute;left:430.8px;top:298.62px;width:95.2px;height:10.01px;background:#212121;border-bottom:0.9px solid #181818;box-sizing:border-box"></div><div style="position:absolute;left:431px;top:298.62px;width:1.2px;height:9.11px;background:#374c26"></div><div class="t" style="left:435px;top:301.61px;font-size:4.7px;line-height:5.64px;color:#9a9a9a;font-weight:400;letter-spacing:0.05px">Scale Sprite Size</div><div style="position:absolute;left:516.9px;top:300.53px;width:6.6px;height:6.6px;background:#0e0e0e;border-radius:0.6px"><svg viewBox="0 0 10 10" width="100%" height="100%"><path d="M2 5.2 L4.1 7.3 L8.3 2.6" fill="none" stroke="#1b7ae0" stroke-width="1.7"/></svg></div><div style="position:absolute;left:430.8px;top:308.64px;width:95.2px;height:10.01px;background:#212121;border-bottom:0.9px solid #181818;box-sizing:border-box"></div><div style="position:absolute;left:431px;top:308.64px;width:1.2px;height:9.11px;background:#374c26"></div><div class="t" style="left:435px;top:311.63px;font-size:4.7px;line-height:5.64px;color:#9e9e9e;font-weight:400;letter-spacing:0.1px">Set</div><div style="position:absolute;left:447.2px;top:310.45px;width:30.8px;height:7px;background:#3c8a40;border-radius:3.5px"></div><div class="t" style="left:450.4px;top:311.23px;font-size:4.7px;line-height:5.64px;color:#dfe8df;font-weight:700;letter-spacing:0.1px">PARTICLES</div><div class="t" style="left:480px;top:311.63px;font-size:4.7px;line-height:5.64px;color:#9e9e9e;font-weight:400;letter-spacing:0.05px">NewLinearColor</div><div style="position:absolute;left:516.9px;top:310.55px;width:6.6px;height:6.6px;background:#0e0e0e;border-radius:0.6px"><svg viewBox="0 0 10 10" width="100%" height="100%"><path d="M2 5.2 L4.1 7.3 L8.3 2.6" fill="none" stroke="#1b7ae0" stroke-width="1.7"/></svg></div><div style="position:absolute;left:430.8px;top:318.65px;width:95.2px;height:10.32px;background:#2b2b2b;border-bottom:0.9px solid #1c1c1c;box-sizing:border-box"></div><div style="position:absolute;left:433.4px;top:321.51px;width:4.6px;height:3px;"><svg viewBox="0 0 10 6" width="100%" height="100%"><path d="M0.5 0.5 H9.5 L5 5.8Z" fill="#d0d0d0"/></svg></div><div class="t" style="left:440.4px;top:321.95px;font-size:4.6px;line-height:5.52px;color:#b2b2b2;font-weight:700;letter-spacing:0.05px">Render</div><div style="position:absolute;left:515.8px;top:320.11px;width:7.8px;height:7.8px;"><svg viewBox="0 0 10 10" width="100%" height="100%"><circle cx="5" cy="5" r="4.0" fill="none" stroke="#a85050" stroke-width="0.85" opacity="0.9"/><path d="M5 3.6 V6.4 M3.6 5 H6.4" stroke="#a85050" stroke-width="1.1"/></svg></div><div style="position:absolute;left:430.8px;top:328.97px;width:95.2px;height:10.72px;background:#212121;border-bottom:0.9px solid #181818;box-sizing:border-box"></div><div style="position:absolute;left:431px;top:328.97px;width:1.2px;height:9.82px;background:#563030"></div><div style="position:absolute;left:434.8px;top:332.13px;width:5.4px;height:6px;"><svg viewBox="0 0 10 10" width="100%" height="100%"><path d="M1 1 L5 3 L9 1 L7 5 L9 9 L5 7 L1 9 L3 5Z" fill="#e6e6e6"/></svg></div><div class="t" style="left:443.4px;top:332.31px;font-size:4.7px;line-height:5.64px;color:#9a9a9a;font-weight:400;letter-spacing:0.05px">Sprite Renderer</div><div style="position:absolute;left:516.9px;top:331.23px;width:6.6px;height:6.6px;background:#0e0e0e;border-radius:0.6px"><svg viewBox="0 0 10 10" width="100%" height="100%"><path d="M2 5.2 L4.1 7.3 L8.3 2.6" fill="none" stroke="#1b7ae0" stroke-width="1.7"/></svg></div><div style="position:absolute;left:430.8px;top:339.68px;width:95.2px;height:10.72px;background:#212121;border-bottom:0.9px solid #181818;box-sizing:border-box"></div><div style="position:absolute;left:431px;top:339.68px;width:1.2px;height:9.82px;background:#563030"></div><div style="position:absolute;left:434.8px;top:342.84px;width:5.4px;height:6px;"><svg viewBox="0 0 8 10" width="100%" height="100%"><circle cx="4" cy="3.6" r="3.2" fill="#ececec"/><path d="M2.6 6 H5.4 L5 8.8 H3Z" fill="#dcdcdc"/></svg></div><div class="t" style="left:443.4px;top:343.02px;font-size:4.7px;line-height:5.64px;color:#9a9a9a;font-weight:400;letter-spacing:0.05px">Light Renderer</div><div style="position:absolute;left:516.9px;top:341.94px;width:6.6px;height:6.6px;background:#0e0e0e;border-radius:0.6px"><svg viewBox="0 0 10 10" width="100%" height="100%"><path d="M2 5.2 L4.1 7.3 L8.3 2.6" fill="none" stroke="#1b7ae0" stroke-width="1.7"/></svg></div><div style="position:absolute;left:556.9px;top:111.7px;width:108px;height:289.4px;background:#151515;border-radius:2.5px;box-shadow:0 1px 2px rgba(0,0,0,0.5)"></div><div style="position:absolute;left:557.4px;top:111.7px;width:107px;height:13.2px;border-radius:2.5px 2.5px 0 0;background:linear-gradient(100deg,#88481b 0%,#824519 38%,#5e3d27 60%,#3e3935 80%,#373737 100%)"></div><div style="position:absolute;left:557.4px;top:111.7px;width:107px;height:13.2px;border-radius:2.5px 2.5px 0 0;background:linear-gradient(180deg,rgba(255,190,130,0.16) 0%,rgba(0,0,0,0.18) 40%,rgba(0,0,0,0.12) 60%,rgba(0,0,0,0) 100%)"></div><div style="position:absolute;left:557.4px;top:111.7px;width:107px;height:1px;border-radius:2.5px 2.5px 0 0;background:linear-gradient(90deg,rgba(255,200,150,0.22),rgba(255,255,255,0.12))"></div><div style="position:absolute;left:562.4px;top:116.2px;width:4.8px;height:3.1px;"><svg viewBox="0 0 10 6" width="100%" height="100%"><path d="M0.5 0.5 H9.5 L5 5.8Z" fill="#e2e2e2"/></svg></div><div style="position:absolute;left:573px;top:114.6px;width:7.4px;height:7.4px;background:#141414;border-radius:0.8px"><svg viewBox="0 0 10 10" width="100%" height="100%"><path d="M2 5.2 L4.1 7.3 L8.3 2.6" fill="none" stroke="#1b7ae0" stroke-width="1.7"/></svg></div><div class="t" style="left:583.8px;top:115.08px;font-size:6.2px;line-height:7.44px;color:#cdc9c5;font-weight:700;letter-spacing:0.15px">Lightning_Smoke</div><div style="position:absolute;left:653.8px;top:114.3px;width:7.6px;height:7.6px;"><svg viewBox="0 0 10 10" width="100%" height="100%"><circle cx="5" cy="5" r="4.2" fill="none" stroke="#d8d8d8" stroke-width="1"/><path d="M5 4.2 V7.6" stroke="#d8d8d8" stroke-width="1.1"/><circle cx="5" cy="2.7" r="0.65" fill="#d8d8d8"/></svg></div><div style="position:absolute;left:557.4px;top:124.9px;width:107px;height:20.9px;background:rgba(24,24,24,0.84)"></div><div style="position:absolute;left:561.4px;top:131.9px;width:4.6px;height:7.4px;"><svg viewBox="0 0 6 9" width="100%" height="100%"><ellipse cx="3" cy="1.4" rx="0.9" ry="1.0" fill="#bdbdbd"/><path d="M1.6 2.6 Q3 1.8 4.4 2.6 L4.3 5.6 Q3 6.4 1.7 5.6Z" fill="#d8d8d8"/><path d="M0.2 8.8 Q0.6 6.2 3 6.1 Q5.4 6.2 5.8 8.8Z" fill="#a0a0a0"/></svg></div><div style="position:absolute;left:568px;top:127.4px;width:14.6px;height:16.8px;background:#202020"></div><div style="position:absolute;left:569.2px;top:129.6px;width:10.6px;height:11.2px;background:#060606;border-bottom:1.6px solid #169c16;box-sizing:border-box"></div><div style="position:absolute;left:582.6px;top:127.4px;width:14.6px;height:16.8px;background:#202020"></div><div style="position:absolute;left:587.2px;top:131.1px;width:5.6px;height:7.6px;"><svg viewBox="0 0 8 10" width="100%" height="100%"><circle cx="4" cy="3.6" r="3.2" fill="#ececec"/><path d="M2.6 6 H5.4 L5 8.8 H3Z" fill="#dcdcdc"/></svg></div><div style="position:absolute;left:582.6px;top:129.1px;width:0.8px;height:13.2px;background:#141414"></div><div style="position:absolute;left:557.4px;top:145.8px;width:107px;height:10.73px;background:#2a2a2a;border-bottom:0.9px solid #1c1c1c;box-sizing:border-box"></div><div style="position:absolute;left:558.4px;top:147.4px;width:6px;height:6px;"><svg viewBox="0 0 10 10" width="100%" height="100%"><path d="M1.6 8.4 L8.4 1.6" stroke="#b04a2a" stroke-width="2.6"/><path d="M0.8 9.2 L2 8" stroke="#d07050" stroke-width="1.2"/></svg></div><div class="t" style="left:566.3px;top:149.22px;font-size:4.75px;line-height:5.7px;color:#aeaeae;font-weight:400;letter-spacing:0.1px">Properties</div><div class="t" style="left:591.5px;top:150.25px;font-size:3.7px;line-height:4.44px;color:#e6e6e6;font-weight:700;letter-spacing:-0.15px">GPU</div><div style="position:absolute;left:591.6px;top:147.9px;width:4px;height:0.6px;background:#9a9a9a"></div><div style="position:absolute;left:591.5px;top:153.4px;width:7.2px;height:0.8px;background:#d0d0d0"></div><div style="position:absolute;left:640.8px;top:146.8px;width:22.4px;height:8.2px;background:#1f1f1f;border-radius:1px"></div><div style="position:absolute;left:641.8px;top:148px;width:5.6px;height:5.6px;"><svg viewBox="0 0 10 10" width="100%" height="100%"><path d="M5 0.8 V9.2 M0.8 5 H9.2" stroke="#f07018" stroke-width="2.2"/></svg></div><div class="t" style="left:648.3px;top:149.22px;font-size:4.75px;line-height:5.7px;color:#b4b4b4;font-weight:400;letter-spacing:0.1px">Stage</div><div style="position:absolute;left:557.4px;top:156.53px;width:107px;height:10.73px;background:#2d2d2d;border-bottom:0.9px solid #1c1c1c;box-sizing:border-box"></div><div style="position:absolute;left:558.2px;top:158.73px;width:6.6px;height:5.6px;"><svg viewBox="0 0 10 9" width="100%" height="100%"><path d="M0 0.8 H10" stroke="#a05030" stroke-width="0.8"/><path d="M0 4 H2.2 M3 4 H10 M0 7.3 H2.2 M3 7.3 H10" stroke="#b85a36" stroke-width="2"/></svg></div><div class="t" style="left:566.6px;top:160.04px;font-size:4.6px;line-height:5.52px;color:#b0b0b0;font-weight:700;letter-spacing:0.05px">Emitter Summary</div><div style="position:absolute;left:557.4px;top:167.26px;width:107px;height:10.24px;background:#2b2b2b;border-bottom:0.9px solid #1c1c1c;box-sizing:border-box"></div><div class="t" style="left:567px;top:170.52px;font-size:4.6px;line-height:5.52px;color:#b2b2b2;font-weight:700;letter-spacing:0.05px">Emitter Spawn</div><div style="position:absolute;left:654.2px;top:168.68px;width:7.8px;height:7.8px;"><svg viewBox="0 0 10 10" width="100%" height="100%"><circle cx="5" cy="5" r="4.0" fill="none" stroke="#a0603f" stroke-width="0.85" opacity="0.9"/><path d="M5 3.6 V6.4 M3.6 5 H6.4" stroke="#a0603f" stroke-width="1.1"/></svg></div><div style="position:absolute;left:557.4px;top:177.5px;width:107px;height:10.24px;background:#2b2b2b;border-bottom:0.9px solid #1c1c1c;box-sizing:border-box"></div><div style="position:absolute;left:560px;top:180.32px;width:4.6px;height:3px;"><svg viewBox="0 0 10 6" width="100%" height="100%"><path d="M0.5 0.5 H9.5 L5 5.8Z" fill="#d0d0d0"/></svg></div><div class="t" style="left:567px;top:180.76px;font-size:4.6px;line-height:5.52px;color:#b2b2b2;font-weight:700;letter-spacing:0.05px">Emitter Update</div><div style="position:absolute;left:654.2px;top:178.92px;width:7.8px;height:7.8px;"><svg viewBox="0 0 10 10" width="100%" height="100%"><circle cx="5" cy="5" r="4.0" fill="none" stroke="#a0603f" stroke-width="0.85" opacity="0.9"/><path d="M5 3.6 V6.4 M3.6 5 H6.4" stroke="#a0603f" stroke-width="1.1"/></svg></div><div style="position:absolute;left:557.4px;top:187.73px;width:107px;height:9.94px;background:#212121;border-bottom:0.9px solid #181818;box-sizing:border-box"></div><div style="position:absolute;left:557.6px;top:187.73px;width:1.2px;height:9.04px;background:#553724"></div><div class="t" style="left:561.6px;top:190.68px;font-size:4.7px;line-height:5.64px;color:#9a9a9a;font-weight:400;letter-spacing:0.05px">Emitter State</div><div style="position:absolute;left:591.8px;top:190.1px;width:9px;height:6.6px;background:#9c5c0e;border-radius:1.8px"></div><div class="t" style="left:593px;top:190.7px;font-size:4.5px;line-height:5.4px;color:#f0dcc0;font-weight:700;transform:scaleX(0.85);transform-origin:0 50%">Self</div><div style="position:absolute;left:602.6px;top:189.6px;width:11.2px;height:7px;background:#0a0a0a;border-radius:1.2px"></div><div class="t" style="left:603.4px;top:190.3px;font-size:4.5px;line-height:5.4px;color:#e8e8e8;font-weight:400;transform:scaleX(0.82);transform-origin:0 50%">Once</div><div style="position:absolute;left:655.3px;top:189.6px;width:6.6px;height:6.6px;background:#0e0e0e;border-radius:0.6px"><svg viewBox="0 0 10 10" width="100%" height="100%"><path d="M2 5.2 L4.1 7.3 L8.3 2.6" fill="none" stroke="#1b7ae0" stroke-width="1.7"/></svg></div><div style="position:absolute;left:557.4px;top:197.67px;width:107px;height:9.94px;background:#212121;border-bottom:0.9px solid #181818;box-sizing:border-box"></div><div style="position:absolute;left:557.6px;top:197.67px;width:1.2px;height:9.04px;background:#553724"></div><div class="t" style="left:561.6px;top:200.62px;font-size:4.7px;line-height:5.64px;color:#9a9a9a;font-weight:400;letter-spacing:0.05px">Spawn Rate</div><div style="position:absolute;left:655.3px;top:199.54px;width:6.6px;height:6.6px;background:#0e0e0e;border-radius:0.6px"><svg viewBox="0 0 10 10" width="100%" height="100%"><path d="M2 5.2 L4.1 7.3 L8.3 2.6" fill="none" stroke="#1b7ae0" stroke-width="1.7"/></svg></div><div style="position:absolute;left:557.4px;top:207.61px;width:107px;height:10.24px;background:#2b2b2b;border-bottom:0.9px solid #1c1c1c;box-sizing:border-box"></div><div style="position:absolute;left:560px;top:210.43px;width:4.6px;height:3px;"><svg viewBox="0 0 10 6" width="100%" height="100%"><path d="M0.5 0.5 H9.5 L5 5.8Z" fill="#d0d0d0"/></svg></div><div class="t" style="left:567px;top:210.87px;font-size:4.6px;line-height:5.52px;color:#b2b2b2;font-weight:700;letter-spacing:0.05px">Particle Spawn</div><div style="position:absolute;left:654.2px;top:209.03px;width:7.8px;height:7.8px;"><svg viewBox="0 0 10 10" width="100%" height="100%"><circle cx="5" cy="5" r="4.0" fill="none" stroke="#6a9a42" stroke-width="0.85" opacity="0.9"/><path d="M5 3.6 V6.4 M3.6 5 H6.4" stroke="#6a9a42" stroke-width="1.1"/></svg></div><div style="position:absolute;left:557.4px;top:217.84px;width:107px;height:9.94px;background:#212121;border-bottom:0.9px solid #181818;box-sizing:border-box"></div><div style="position:absolute;left:557.6px;top:217.84px;width:1.2px;height:9.04px;background:#374c26"></div><div class="t" style="left:561.6px;top:220.79px;font-size:4.7px;line-height:5.64px;color:#9a9a9a;font-weight:400;letter-spacing:0.05px">Initialize Particle</div><div style="position:absolute;left:655.3px;top:219.71px;width:6.6px;height:6.6px;background:#0e0e0e;border-radius:0.6px"><svg viewBox="0 0 10 10" width="100%" height="100%"><path d="M2 5.2 L4.1 7.3 L8.3 2.6" fill="none" stroke="#1b7ae0" stroke-width="1.7"/></svg></div><div style="position:absolute;left:557.4px;top:227.78px;width:107px;height:9.94px;background:#212121;border-bottom:0.9px solid #181818;box-sizing:border-box"></div><div style="position:absolute;left:557.6px;top:227.78px;width:1.2px;height:9.04px;background:#374c26"></div><div class="t" style="left:561.6px;top:230.73px;font-size:4.7px;line-height:5.64px;color:#9a9a9a;font-weight:400;letter-spacing:0.05px">Add Velocity</div><div style="position:absolute;left:655.3px;top:229.65px;width:6.6px;height:6.6px;background:#0e0e0e;border-radius:0.6px"><svg viewBox="0 0 10 10" width="100%" height="100%"><path d="M2 5.2 L4.1 7.3 L8.3 2.6" fill="none" stroke="#1b7ae0" stroke-width="1.7"/></svg></div><div style="position:absolute;left:557.4px;top:237.72px;width:107px;height:9.94px;background:#212121;border-bottom:0.9px solid #181818;box-sizing:border-box"></div><div style="position:absolute;left:557.6px;top:237.72px;width:1.2px;height:9.04px;background:#374c26"></div><div class="t" style="left:561.6px;top:240.67px;font-size:4.7px;line-height:5.64px;color:#9a9a9a;font-weight:400;letter-spacing:0.05px">Apply Initial Forces</div><div style="position:absolute;left:655.3px;top:239.59px;width:6.6px;height:6.6px;background:#0e0e0e;border-radius:0.6px"><svg viewBox="0 0 10 10" width="100%" height="100%"><path d="M2 5.2 L4.1 7.3 L8.3 2.6" fill="none" stroke="#1b7ae0" stroke-width="1.7"/></svg></div><div style="position:absolute;left:557.4px;top:247.66px;width:107px;height:9.94px;background:#212121;border-bottom:0.9px solid #181818;box-sizing:border-box"></div><div style="position:absolute;left:557.6px;top:247.66px;width:1.2px;height:9.04px;background:#374c26"></div><div class="t" style="left:561.6px;top:250.6px;font-size:4.7px;line-height:5.64px;color:#9a9a9a;font-weight:400;letter-spacing:0.05px">Cylinder Location</div><div style="position:absolute;left:600.8px;top:249.42px;width:5.8px;height:5.8px;background:#0e0e0e;border-radius:1.2px;box-shadow:0 0 0 0.5px #2a2a2a"></div><div style="position:absolute;left:602.7px;top:251.32px;width:2.1px;height:2.1px;background:#22a0f4;border-radius:0.6px"></div><div style="position:absolute;left:662.5px;top:249.82px;width:1.9px;height:5.8px;background:#2a96ea"></div><div style="position:absolute;left:655.3px;top:249.52px;width:6.6px;height:6.6px;background:#0e0e0e;border-radius:0.6px"><svg viewBox="0 0 10 10" width="100%" height="100%"><path d="M2 5.2 L4.1 7.3 L8.3 2.6" fill="none" stroke="#1b7ae0" stroke-width="1.7"/></svg></div><div style="position:absolute;left:557.4px;top:257.59px;width:107px;height:10.24px;background:#2b2b2b;border-bottom:0.9px solid #1c1c1c;box-sizing:border-box"></div><div style="position:absolute;left:560px;top:260.41px;width:4.6px;height:3px;"><svg viewBox="0 0 10 6" width="100%" height="100%"><path d="M0.5 0.5 H9.5 L5 5.8Z" fill="#d0d0d0"/></svg></div><div class="t" style="left:567px;top:260.85px;font-size:4.6px;line-height:5.52px;color:#b2b2b2;font-weight:700;letter-spacing:0.05px">Particle Update</div><div style="position:absolute;left:654.2px;top:259.01px;width:7.8px;height:7.8px;"><svg viewBox="0 0 10 10" width="100%" height="100%"><circle cx="5" cy="5" r="4.0" fill="none" stroke="#6a9a42" stroke-width="0.85" opacity="0.9"/><path d="M5 3.6 V6.4 M3.6 5 H6.4" stroke="#6a9a42" stroke-width="1.1"/></svg></div><div style="position:absolute;left:557.4px;top:267.83px;width:107px;height:9.94px;background:#212121;border-bottom:0.9px solid #181818;box-sizing:border-box"></div><div style="position:absolute;left:557.6px;top:267.83px;width:1.2px;height:9.04px;background:#374c26"></div><div class="t" style="left:561.6px;top:270.78px;font-size:4.7px;line-height:5.64px;color:#9a9a9a;font-weight:400;letter-spacing:0.05px">Particle State</div><div style="position:absolute;left:655.3px;top:269.7px;width:6.6px;height:6.6px;background:#0e0e0e;border-radius:0.6px"><svg viewBox="0 0 10 10" width="100%" height="100%"><path d="M2 5.2 L4.1 7.3 L8.3 2.6" fill="none" stroke="#1b7ae0" stroke-width="1.7"/></svg></div><div style="position:absolute;left:557.4px;top:277.77px;width:107px;height:9.94px;background:#212121;border-bottom:0.9px solid #181818;box-sizing:border-box"></div><div style="position:absolute;left:557.6px;top:277.77px;width:1.2px;height:9.04px;background:#374c26"></div><div class="t" style="left:561.6px;top:280.71px;font-size:4.7px;line-height:5.64px;color:#9a9a9a;font-weight:400;letter-spacing:0.05px">Scale Color</div><div style="position:absolute;left:655.3px;top:279.63px;width:6.6px;height:6.6px;background:#0e0e0e;border-radius:0.6px"><svg viewBox="0 0 10 10" width="100%" height="100%"><path d="M2 5.2 L4.1 7.3 L8.3 2.6" fill="none" stroke="#1b7ae0" stroke-width="1.7"/></svg></div><div style="position:absolute;left:557.4px;top:287.7px;width:107px;height:9.94px;background:#212121;border-bottom:0.9px solid #181818;box-sizing:border-box"></div><div style="position:absolute;left:557.6px;top:287.7px;width:1.2px;height:9.04px;background:#374c26"></div><div class="t" style="left:561.6px;top:290.65px;font-size:4.7px;line-height:5.64px;color:#9a9a9a;font-weight:400;letter-spacing:0.05px">Gravity Force</div><div style="position:absolute;left:655.3px;top:289.57px;width:6.6px;height:6.6px;background:#0e0e0e;border-radius:0.6px"><svg viewBox="0 0 10 10" width="100%" height="100%"><path d="M2 5.2 L4.1 7.3 L8.3 2.6" fill="none" stroke="#1b7ae0" stroke-width="1.7"/></svg></div><div style="position:absolute;left:557.4px;top:297.64px;width:107px;height:9.94px;background:#212121;border-bottom:0.9px solid #181818;box-sizing:border-box"></div><div style="position:absolute;left:557.6px;top:297.64px;width:1.2px;height:9.04px;background:#374c26"></div><div class="t" style="left:561.6px;top:300.59px;font-size:4.7px;line-height:5.64px;color:#9a9a9a;font-weight:400;letter-spacing:0.05px">Drag</div><div style="position:absolute;left:655.3px;top:299.51px;width:6.6px;height:6.6px;background:#0e0e0e;border-radius:0.6px"><svg viewBox="0 0 10 10" width="100%" height="100%"><path d="M2 5.2 L4.1 7.3 L8.3 2.6" fill="none" stroke="#1b7ae0" stroke-width="1.7"/></svg></div><div style="position:absolute;left:557.4px;top:307.58px;width:107px;height:9.94px;background:#212121;border-bottom:0.9px solid #181818;box-sizing:border-box"></div><div style="position:absolute;left:557.6px;top:307.58px;width:1.2px;height:9.04px;background:#374c26"></div><div class="t" style="left:561.6px;top:310.53px;font-size:4.7px;line-height:5.64px;color:#9a9a9a;font-weight:400;letter-spacing:0.05px">Solve Forces and Velocity</div><div style="position:absolute;left:655.3px;top:309.45px;width:6.6px;height:6.6px;background:#0e0e0e;border-radius:0.6px"><svg viewBox="0 0 10 10" width="100%" height="100%"><path d="M2 5.2 L4.1 7.3 L8.3 2.6" fill="none" stroke="#1b7ae0" stroke-width="1.7"/></svg></div><div style="position:absolute;left:557.4px;top:317.51px;width:107px;height:9.94px;background:#212121;border-bottom:0.9px solid #181818;box-sizing:border-box"></div><div style="position:absolute;left:557.6px;top:317.51px;width:1.2px;height:9.04px;background:#374c26"></div><div class="t" style="left:561.6px;top:320.46px;font-size:4.7px;line-height:5.64px;color:#9a9a9a;font-weight:400;letter-spacing:0.05px">Dynamic Material Parameters</div><div style="position:absolute;left:655.3px;top:319.38px;width:6.6px;height:6.6px;background:#0e0e0e;border-radius:0.6px"><svg viewBox="0 0 10 10" width="100%" height="100%"><path d="M2 5.2 L4.1 7.3 L8.3 2.6" fill="none" stroke="#1b7ae0" stroke-width="1.7"/></svg></div><div style="position:absolute;left:557.4px;top:327.45px;width:107px;height:9.94px;background:#212121;border-bottom:0.9px solid #181818;box-sizing:border-box"></div><div style="position:absolute;left:557.6px;top:327.45px;width:1.2px;height:9.04px;background:#374c26"></div><div class="t" style="left:561.6px;top:330.4px;font-size:4.7px;line-height:5.64px;color:#9a9a9a;font-weight:400;letter-spacing:0.05px">Scale Sprite Size</div><div style="position:absolute;left:655.3px;top:329.32px;width:6.6px;height:6.6px;background:#0e0e0e;border-radius:0.6px"><svg viewBox="0 0 10 10" width="100%" height="100%"><path d="M2 5.2 L4.1 7.3 L8.3 2.6" fill="none" stroke="#1b7ae0" stroke-width="1.7"/></svg></div><div style="position:absolute;left:557.4px;top:337.39px;width:107px;height:9.94px;background:#212121;border-bottom:0.9px solid #181818;box-sizing:border-box"></div><div style="position:absolute;left:557.6px;top:337.39px;width:1.2px;height:9.04px;background:#374c26"></div><div class="t" style="left:561.6px;top:340.34px;font-size:4.7px;line-height:5.64px;color:#9a9a9a;font-weight:400;letter-spacing:0.05px">Sprite Rotation Rate</div><div style="position:absolute;left:655.3px;top:339.26px;width:6.6px;height:6.6px;background:#0e0e0e;border-radius:0.6px"><svg viewBox="0 0 10 10" width="100%" height="100%"><path d="M2 5.2 L4.1 7.3 L8.3 2.6" fill="none" stroke="#1b7ae0" stroke-width="1.7"/></svg></div><div style="position:absolute;left:557.4px;top:347.33px;width:107px;height:9.94px;background:#212121;border-bottom:0.9px solid #181818;box-sizing:border-box"></div><div style="position:absolute;left:557.6px;top:347.33px;width:1.2px;height:9.04px;background:#374c26"></div><div class="t" style="left:561.6px;top:350.27px;font-size:4.7px;line-height:5.64px;color:#9a9a9a;font-weight:400;letter-spacing:0.05px">SubUVAnimation</div><div style="position:absolute;left:655.3px;top:349.19px;width:6.6px;height:6.6px;background:#0e0e0e;border-radius:0.6px"><svg viewBox="0 0 10 10" width="100%" height="100%"><path d="M2 5.2 L4.1 7.3 L8.3 2.6" fill="none" stroke="#1b7ae0" stroke-width="1.7"/></svg></div><div style="position:absolute;left:557.4px;top:357.26px;width:107px;height:9.94px;background:#212121;border-bottom:0.9px solid #181818;box-sizing:border-box"></div><div style="position:absolute;left:557.6px;top:357.26px;width:1.2px;height:9.04px;background:#374c26"></div><div class="t" style="left:561.6px;top:360.21px;font-size:4.7px;line-height:5.64px;color:#9e9e9e;font-weight:400;letter-spacing:0.1px">Set</div><div style="position:absolute;left:573.8px;top:359.03px;width:30.8px;height:7px;background:#3c8a40;border-radius:3.5px"></div><div class="t" style="left:577px;top:359.81px;font-size:4.7px;line-height:5.64px;color:#dfe8df;font-weight:700;letter-spacing:0.1px">PARTICLES</div><div class="t" style="left:606.6px;top:360.21px;font-size:4.7px;line-height:5.64px;color:#9e9e9e;font-weight:400;letter-spacing:0.05px">NewLinearColor</div><div style="position:absolute;left:655.3px;top:359.13px;width:6.6px;height:6.6px;background:#0e0e0e;border-radius:0.6px"><svg viewBox="0 0 10 10" width="100%" height="100%"><path d="M2 5.2 L4.1 7.3 L8.3 2.6" fill="none" stroke="#1b7ae0" stroke-width="1.7"/></svg></div><div style="position:absolute;left:557.4px;top:367.2px;width:107px;height:10.24px;background:#2b2b2b;border-bottom:0.9px solid #1c1c1c;box-sizing:border-box"></div><div style="position:absolute;left:560px;top:370.02px;width:4.6px;height:3px;"><svg viewBox="0 0 10 6" width="100%" height="100%"><path d="M0.5 0.5 H9.5 L5 5.8Z" fill="#d0d0d0"/></svg></div><div class="t" style="left:567px;top:370.46px;font-size:4.6px;line-height:5.52px;color:#b2b2b2;font-weight:700;letter-spacing:0.05px">Render</div><div style="position:absolute;left:654.2px;top:368.62px;width:7.8px;height:7.8px;"><svg viewBox="0 0 10 10" width="100%" height="100%"><circle cx="5" cy="5" r="4.0" fill="none" stroke="#a85050" stroke-width="0.85" opacity="0.9"/><path d="M5 3.6 V6.4 M3.6 5 H6.4" stroke="#a85050" stroke-width="1.1"/></svg></div><div style="position:absolute;left:557.4px;top:377.43px;width:107px;height:10.63px;background:#212121;border-bottom:0.9px solid #181818;box-sizing:border-box"></div><div style="position:absolute;left:557.6px;top:377.43px;width:1.2px;height:9.73px;background:#563030"></div><div style="position:absolute;left:561.4px;top:380.55px;width:5.4px;height:6px;"><svg viewBox="0 0 10 10" width="100%" height="100%"><path d="M1 1 L5 3 L9 1 L7 5 L9 9 L5 7 L1 9 L3 5Z" fill="#e6e6e6"/></svg></div><div class="t" style="left:570px;top:380.73px;font-size:4.7px;line-height:5.64px;color:#9a9a9a;font-weight:400;letter-spacing:0.05px">Sprite Renderer</div><div style="position:absolute;left:655.3px;top:379.65px;width:6.6px;height:6.6px;background:#0e0e0e;border-radius:0.6px"><svg viewBox="0 0 10 10" width="100%" height="100%"><path d="M2 5.2 L4.1 7.3 L8.3 2.6" fill="none" stroke="#1b7ae0" stroke-width="1.7"/></svg></div><div style="position:absolute;left:557.4px;top:388.07px;width:107px;height:10.63px;background:#212121;border-bottom:0.9px solid #181818;box-sizing:border-box"></div><div style="position:absolute;left:557.6px;top:388.07px;width:1.2px;height:9.73px;background:#563030"></div><div style="position:absolute;left:561.4px;top:391.18px;width:5.4px;height:6px;"><svg viewBox="0 0 8 10" width="100%" height="100%"><circle cx="4" cy="3.6" r="3.2" fill="#ececec"/><path d="M2.6 6 H5.4 L5 8.8 H3Z" fill="#dcdcdc"/></svg></div><div class="t" style="left:570px;top:391.36px;font-size:4.7px;line-height:5.64px;color:#9a9a9a;font-weight:400;letter-spacing:0.05px">Light Renderer</div><div style="position:absolute;left:655.3px;top:390.28px;width:6.6px;height:6.6px;background:#0e0e0e;border-radius:0.6px"><svg viewBox="0 0 10 10" width="100%" height="100%"><path d="M2 5.2 L4.1 7.3 L8.3 2.6" fill="none" stroke="#1b7ae0" stroke-width="1.7"/></svg></div><div style="position:absolute;left:683.6px;top:111.5px;width:93.8px;height:269.6px;background:#151515;border-radius:2.5px;box-shadow:0 1px 2px rgba(0,0,0,0.5)"></div><div style="position:absolute;left:684.1px;top:111.5px;width:92.8px;height:13.2px;border-radius:2.5px 2.5px 0 0;background:linear-gradient(100deg,#88481b 0%,#824519 38%,#5e3d27 60%,#3e3935 80%,#373737 100%)"></div><div style="position:absolute;left:684.1px;top:111.5px;width:92.8px;height:13.2px;border-radius:2.5px 2.5px 0 0;background:linear-gradient(180deg,rgba(255,190,130,0.16) 0%,rgba(0,0,0,0.18) 40%,rgba(0,0,0,0.12) 60%,rgba(0,0,0,0) 100%)"></div><div style="position:absolute;left:684.1px;top:111.5px;width:92.8px;height:1px;border-radius:2.5px 2.5px 0 0;background:linear-gradient(90deg,rgba(255,200,150,0.22),rgba(255,255,255,0.12))"></div><div style="position:absolute;left:689.1px;top:116px;width:4.8px;height:3.1px;"><svg viewBox="0 0 10 6" width="100%" height="100%"><path d="M0.5 0.5 H9.5 L5 5.8Z" fill="#e2e2e2"/></svg></div><div style="position:absolute;left:699.7px;top:114.4px;width:7.4px;height:7.4px;background:#141414;border-radius:0.8px"><svg viewBox="0 0 10 10" width="100%" height="100%"><path d="M2 5.2 L4.1 7.3 L8.3 2.6" fill="none" stroke="#1b7ae0" stroke-width="1.7"/></svg></div><div class="t" style="left:710.5px;top:114.88px;font-size:6.2px;line-height:7.44px;color:#cdc9c5;font-weight:700;letter-spacing:0.15px">Sparks0025</div><div style="position:absolute;left:684.1px;top:124.7px;width:92.8px;height:20.9px;background:rgba(24,24,24,0.84)"></div><div style="position:absolute;left:688.1px;top:131.7px;width:4.6px;height:7.4px;"><svg viewBox="0 0 6 9" width="100%" height="100%"><ellipse cx="3" cy="1.4" rx="0.9" ry="1.0" fill="#bdbdbd"/><path d="M1.6 2.6 Q3 1.8 4.4 2.6 L4.3 5.6 Q3 6.4 1.7 5.6Z" fill="#d8d8d8"/><path d="M0.2 8.8 Q0.6 6.2 3 6.1 Q5.4 6.2 5.8 8.8Z" fill="#a0a0a0"/></svg></div><div style="position:absolute;left:694.7px;top:127.2px;width:14.6px;height:16.8px;background:#202020"></div><div style="position:absolute;left:695.9px;top:129.4px;width:10.6px;height:11.2px;background:#060606;border-bottom:1.6px solid #169c16;box-sizing:border-box"></div><div style="position:absolute;left:700.6px;top:134.3px;width:1.2px;height:0.7px;background:#bbbbbb"></div><div style="position:absolute;left:684.1px;top:145.6px;width:92.8px;height:10.77px;background:#2a2a2a;border-bottom:0.9px solid #1c1c1c;box-sizing:border-box"></div><div style="position:absolute;left:685.1px;top:147.2px;width:6px;height:6px;"><svg viewBox="0 0 10 10" width="100%" height="100%"><path d="M1.6 8.4 L8.4 1.6" stroke="#b04a2a" stroke-width="2.6"/><path d="M0.8 9.2 L2 8" stroke="#d07050" stroke-width="1.2"/></svg></div><div class="t" style="left:693px;top:149.03px;font-size:4.75px;line-height:5.7px;color:#aeaeae;font-weight:400;letter-spacing:0.1px">Properties</div><div class="t" style="left:718.2px;top:150.06px;font-size:3.7px;line-height:4.44px;color:#e6e6e6;font-weight:700;letter-spacing:-0.15px">GPU</div><div style="position:absolute;left:718.3px;top:147.7px;width:4px;height:0.6px;background:#9a9a9a"></div><div style="position:absolute;left:718.2px;top:153.2px;width:7.2px;height:0.8px;background:#d0d0d0"></div><div style="position:absolute;left:753.3px;top:146.6px;width:22.4px;height:8.2px;background:#1f1f1f;border-radius:1px"></div><div style="position:absolute;left:754.3px;top:147.8px;width:5.6px;height:5.6px;"><svg viewBox="0 0 10 10" width="100%" height="100%"><path d="M5 0.8 V9.2 M0.8 5 H9.2" stroke="#f07018" stroke-width="2.2"/></svg></div><div class="t" style="left:760.8px;top:149.03px;font-size:4.75px;line-height:5.7px;color:#b4b4b4;font-weight:400;letter-spacing:0.1px">Stage</div><div style="position:absolute;left:684.1px;top:156.37px;width:92.8px;height:10.77px;background:#2d2d2d;border-bottom:0.9px solid #1c1c1c;box-sizing:border-box"></div><div style="position:absolute;left:684.9px;top:158.57px;width:6.6px;height:5.6px;"><svg viewBox="0 0 10 9" width="100%" height="100%"><path d="M0 0.8 H10" stroke="#a05030" stroke-width="0.8"/><path d="M0 4 H2.2 M3 4 H10 M0 7.3 H2.2 M3 7.3 H10" stroke="#b85a36" stroke-width="2"/></svg></div><div class="t" style="left:693.3px;top:159.89px;font-size:4.6px;line-height:5.52px;color:#b0b0b0;font-weight:700;letter-spacing:0.05px">Emitter Summary</div><div style="position:absolute;left:684.1px;top:167.14px;width:92.8px;height:10.27px;background:#2b2b2b;border-bottom:0.9px solid #1c1c1c;box-sizing:border-box"></div><div class="t" style="left:693.7px;top:170.41px;font-size:4.6px;line-height:5.52px;color:#b2b2b2;font-weight:700;letter-spacing:0.05px">Emitter Spawn</div><div style="position:absolute;left:766.7px;top:168.57px;width:7.8px;height:7.8px;"><svg viewBox="0 0 10 10" width="100%" height="100%"><circle cx="5" cy="5" r="4.0" fill="none" stroke="#a0603f" stroke-width="0.85" opacity="0.9"/><path d="M5 3.6 V6.4 M3.6 5 H6.4" stroke="#a0603f" stroke-width="1.1"/></svg></div><div style="position:absolute;left:684.1px;top:177.4px;width:92.8px;height:10.27px;background:#2b2b2b;border-bottom:0.9px solid #1c1c1c;box-sizing:border-box"></div><div style="position:absolute;left:686.7px;top:180.24px;width:4.6px;height:3px;"><svg viewBox="0 0 10 6" width="100%" height="100%"><path d="M0.5 0.5 H9.5 L5 5.8Z" fill="#d0d0d0"/></svg></div><div class="t" style="left:693.7px;top:180.68px;font-size:4.6px;line-height:5.52px;color:#b2b2b2;font-weight:700;letter-spacing:0.05px">Emitter Update</div><div style="position:absolute;left:766.7px;top:178.84px;width:7.8px;height:7.8px;"><svg viewBox="0 0 10 10" width="100%" height="100%"><circle cx="5" cy="5" r="4.0" fill="none" stroke="#a0603f" stroke-width="0.85" opacity="0.9"/><path d="M5 3.6 V6.4 M3.6 5 H6.4" stroke="#a0603f" stroke-width="1.1"/></svg></div><div style="position:absolute;left:684.1px;top:187.67px;width:92.8px;height:9.97px;background:#212121;border-bottom:0.9px solid #181818;box-sizing:border-box"></div><div style="position:absolute;left:684.3px;top:187.67px;width:1.2px;height:9.07px;background:#553724"></div><div class="t" style="left:688.3px;top:190.64px;font-size:4.7px;line-height:5.64px;color:#9a9a9a;font-weight:400;letter-spacing:0.05px">Emitter State</div><div style="position:absolute;left:718.5px;top:190.06px;width:9px;height:6.6px;background:#9c5c0e;border-radius:1.8px"></div><div class="t" style="left:719.7px;top:190.66px;font-size:4.5px;line-height:5.4px;color:#f0dcc0;font-weight:700;transform:scaleX(0.85);transform-origin:0 50%">Self</div><div style="position:absolute;left:729.3px;top:189.56px;width:11.2px;height:7px;background:#0a0a0a;border-radius:1.2px"></div><div class="t" style="left:730.1px;top:190.26px;font-size:4.5px;line-height:5.4px;color:#e8e8e8;font-weight:400;transform:scaleX(0.82);transform-origin:0 50%">Once</div><div style="position:absolute;left:767.8px;top:189.56px;width:6.6px;height:6.6px;background:#0e0e0e;border-radius:0.6px"><svg viewBox="0 0 10 10" width="100%" height="100%"><path d="M2 5.2 L4.1 7.3 L8.3 2.6" fill="none" stroke="#1b7ae0" stroke-width="1.7"/></svg></div><div style="position:absolute;left:684.1px;top:197.64px;width:92.8px;height:9.97px;background:#212121;border-bottom:0.9px solid #181818;box-sizing:border-box"></div><div style="position:absolute;left:684.3px;top:197.64px;width:1.2px;height:9.07px;background:#553724"></div><div class="t" style="left:688.3px;top:200.61px;font-size:4.7px;line-height:5.64px;color:#9a9a9a;font-weight:400;letter-spacing:0.05px">Spawn Particles from Other Emitter</div><div style="position:absolute;left:767.8px;top:199.53px;width:6.6px;height:6.6px;background:#0e0e0e;border-radius:0.6px"><svg viewBox="0 0 10 10" width="100%" height="100%"><path d="M2 5.2 L4.1 7.3 L8.3 2.6" fill="none" stroke="#1b7ae0" stroke-width="1.7"/></svg></div><div style="position:absolute;left:684.1px;top:207.61px;width:92.8px;height:10.27px;background:#2b2b2b;border-bottom:0.9px solid #1c1c1c;box-sizing:border-box"></div><div style="position:absolute;left:686.7px;top:210.45px;width:4.6px;height:3px;"><svg viewBox="0 0 10 6" width="100%" height="100%"><path d="M0.5 0.5 H9.5 L5 5.8Z" fill="#d0d0d0"/></svg></div><div class="t" style="left:693.7px;top:210.89px;font-size:4.6px;line-height:5.52px;color:#b2b2b2;font-weight:700;letter-spacing:0.05px">Particle Spawn</div><div style="position:absolute;left:766.7px;top:209.05px;width:7.8px;height:7.8px;"><svg viewBox="0 0 10 10" width="100%" height="100%"><circle cx="5" cy="5" r="4.0" fill="none" stroke="#6a9a42" stroke-width="0.85" opacity="0.9"/><path d="M5 3.6 V6.4 M3.6 5 H6.4" stroke="#6a9a42" stroke-width="1.1"/></svg></div><div style="position:absolute;left:684.1px;top:217.88px;width:92.8px;height:9.97px;background:#212121;border-bottom:0.9px solid #181818;box-sizing:border-box"></div><div style="position:absolute;left:684.3px;top:217.88px;width:1.2px;height:9.07px;background:#374c26"></div><div class="t" style="left:688.3px;top:220.85px;font-size:4.7px;line-height:5.64px;color:#9a9a9a;font-weight:400;letter-spacing:0.05px">Initialize Particle</div><div style="position:absolute;left:767.8px;top:219.77px;width:6.6px;height:6.6px;background:#0e0e0e;border-radius:0.6px"><svg viewBox="0 0 10 10" width="100%" height="100%"><path d="M2 5.2 L4.1 7.3 L8.3 2.6" fill="none" stroke="#1b7ae0" stroke-width="1.7"/></svg></div><div style="position:absolute;left:684.1px;top:227.85px;width:92.8px;height:9.97px;background:#212121;border-bottom:0.9px solid #181818;box-sizing:border-box"></div><div style="position:absolute;left:684.3px;top:227.85px;width:1.2px;height:9.07px;background:#374c26"></div><div class="t" style="left:688.3px;top:230.82px;font-size:4.7px;line-height:5.64px;color:#9a9a9a;font-weight:400;letter-spacing:0.05px">Sample Particles from Other Emitter</div><div style="position:absolute;left:767.8px;top:229.74px;width:6.6px;height:6.6px;background:#0e0e0e;border-radius:0.6px"><svg viewBox="0 0 10 10" width="100%" height="100%"><path d="M2 5.2 L4.1 7.3 L8.3 2.6" fill="none" stroke="#1b7ae0" stroke-width="1.7"/></svg></div><div style="position:absolute;left:684.1px;top:237.82px;width:92.8px;height:9.97px;background:#212121;border-bottom:0.9px solid #181818;box-sizing:border-box"></div><div style="position:absolute;left:684.3px;top:237.82px;width:1.2px;height:9.07px;background:#374c26"></div><div class="t" style="left:688.3px;top:240.79px;font-size:4.7px;line-height:5.64px;color:#9a9a9a;font-weight:400;letter-spacing:0.05px">Sphere Location</div><div style="position:absolute;left:756.5px;top:241.61px;width:6px;height:4px;"><svg viewBox="0 0 10 7" width="100%" height="100%"><path d="M0.6 3.5 L5 0.6 L9.4 3.5 L5 6.4Z" fill="none" stroke="#9a9a9a" stroke-width="0.9"/><circle cx="5" cy="3.5" r="1.2" fill="#9a9a9a"/></svg></div><div style="position:absolute;left:767.8px;top:239.71px;width:6.6px;height:6.6px;background:#0e0e0e;border-radius:0.6px"><svg viewBox="0 0 10 10" width="100%" height="100%"><path d="M2 5.2 L4.1 7.3 L8.3 2.6" fill="none" stroke="#1b7ae0" stroke-width="1.7"/></svg></div><div style="position:absolute;left:684.1px;top:247.79px;width:92.8px;height:9.97px;background:#212121;border-bottom:0.9px solid #181818;box-sizing:border-box"></div><div style="position:absolute;left:684.3px;top:247.79px;width:1.2px;height:9.07px;background:#374c26"></div><div class="t" style="left:688.3px;top:250.76px;font-size:4.7px;line-height:5.64px;color:#9a9a9a;font-weight:400;letter-spacing:0.05px">Add Velocity from Point</div><div style="position:absolute;left:767.8px;top:249.68px;width:6.6px;height:6.6px;background:#0e0e0e;border-radius:0.6px"><svg viewBox="0 0 10 10" width="100%" height="100%"><path d="M2 5.2 L4.1 7.3 L8.3 2.6" fill="none" stroke="#1b7ae0" stroke-width="1.7"/></svg></div><div style="position:absolute;left:684.1px;top:257.76px;width:92.8px;height:9.97px;background:#212121;border-bottom:0.9px solid #181818;box-sizing:border-box"></div><div style="position:absolute;left:684.3px;top:257.76px;width:1.2px;height:9.07px;background:#374c26"></div><div class="t" style="left:688.3px;top:260.73px;font-size:4.7px;line-height:5.64px;color:#9a9a9a;font-weight:400;letter-spacing:0.05px">Add Velocity</div><div style="position:absolute;left:767.8px;top:259.65px;width:6.6px;height:6.6px;background:#0e0e0e;border-radius:0.6px"><svg viewBox="0 0 10 10" width="100%" height="100%"><path d="M2 5.2 L4.1 7.3 L8.3 2.6" fill="none" stroke="#1b7ae0" stroke-width="1.7"/></svg></div><div style="position:absolute;left:684.1px;top:267.73px;width:92.8px;height:10.27px;background:#2b2b2b;border-bottom:0.9px solid #1c1c1c;box-sizing:border-box"></div><div style="position:absolute;left:686.7px;top:270.57px;width:4.6px;height:3px;"><svg viewBox="0 0 10 6" width="100%" height="100%"><path d="M0.5 0.5 H9.5 L5 5.8Z" fill="#d0d0d0"/></svg></div><div class="t" style="left:693.7px;top:271.01px;font-size:4.6px;line-height:5.52px;color:#b2b2b2;font-weight:700;letter-spacing:0.05px">Particle Update</div><div style="position:absolute;left:766.7px;top:269.17px;width:7.8px;height:7.8px;"><svg viewBox="0 0 10 10" width="100%" height="100%"><circle cx="5" cy="5" r="4.0" fill="none" stroke="#6a9a42" stroke-width="0.85" opacity="0.9"/><path d="M5 3.6 V6.4 M3.6 5 H6.4" stroke="#6a9a42" stroke-width="1.1"/></svg></div><div style="position:absolute;left:684.1px;top:278px;width:92.8px;height:9.97px;background:#212121;border-bottom:0.9px solid #181818;box-sizing:border-box"></div><div style="position:absolute;left:684.3px;top:278px;width:1.2px;height:9.07px;background:#374c26"></div><div class="t" style="left:688.3px;top:280.97px;font-size:4.7px;line-height:5.64px;color:#9a9a9a;font-weight:400;letter-spacing:0.05px">Particle State</div><div style="position:absolute;left:767.8px;top:279.89px;width:6.6px;height:6.6px;background:#0e0e0e;border-radius:0.6px"><svg viewBox="0 0 10 10" width="100%" height="100%"><path d="M2 5.2 L4.1 7.3 L8.3 2.6" fill="none" stroke="#1b7ae0" stroke-width="1.7"/></svg></div><div style="position:absolute;left:684.1px;top:287.97px;width:92.8px;height:9.97px;background:#212121;border-bottom:0.9px solid #181818;box-sizing:border-box"></div><div style="position:absolute;left:684.3px;top:287.97px;width:1.2px;height:9.07px;background:#374c26"></div><div class="t" style="left:688.3px;top:290.94px;font-size:4.7px;line-height:5.64px;color:#9a9a9a;font-weight:400;letter-spacing:0.05px">Scale Color</div><div style="position:absolute;left:767.8px;top:289.86px;width:6.6px;height:6.6px;background:#0e0e0e;border-radius:0.6px"><svg viewBox="0 0 10 10" width="100%" height="100%"><path d="M2 5.2 L4.1 7.3 L8.3 2.6" fill="none" stroke="#1b7ae0" stroke-width="1.7"/></svg></div><div style="position:absolute;left:684.1px;top:297.94px;width:92.8px;height:9.97px;background:#212121;border-bottom:0.9px solid #181818;box-sizing:border-box"></div><div style="position:absolute;left:684.3px;top:297.94px;width:1.2px;height:9.07px;background:#374c26"></div><div class="t" style="left:688.3px;top:300.91px;font-size:4.7px;line-height:5.64px;color:#9a9a9a;font-weight:400;letter-spacing:0.05px">Curl Noise Force</div><div style="position:absolute;left:767.8px;top:299.83px;width:6.6px;height:6.6px;background:#0e0e0e;border-radius:0.6px"><svg viewBox="0 0 10 10" width="100%" height="100%"><path d="M2 5.2 L4.1 7.3 L8.3 2.6" fill="none" stroke="#1b7ae0" stroke-width="1.7"/></svg></div><div style="position:absolute;left:684.1px;top:307.91px;width:92.8px;height:9.97px;background:#212121;border-bottom:0.9px solid #181818;box-sizing:border-box"></div><div style="position:absolute;left:684.3px;top:307.91px;width:1.2px;height:9.07px;background:#374c26"></div><div class="t" style="left:688.3px;top:310.88px;font-size:4.7px;line-height:5.64px;color:#9a9a9a;font-weight:400;letter-spacing:0.05px">Gravity Force</div><div style="position:absolute;left:767.8px;top:309.8px;width:6.6px;height:6.6px;background:#0e0e0e;border-radius:0.6px"><svg viewBox="0 0 10 10" width="100%" height="100%"><path d="M2 5.2 L4.1 7.3 L8.3 2.6" fill="none" stroke="#1b7ae0" stroke-width="1.7"/></svg></div><div style="position:absolute;left:684.1px;top:317.88px;width:92.8px;height:9.97px;background:#212121;border-bottom:0.9px solid #181818;box-sizing:border-box"></div><div style="position:absolute;left:684.3px;top:317.88px;width:1.2px;height:9.07px;background:#374c26"></div><div class="t" style="left:688.3px;top:320.85px;font-size:4.7px;line-height:5.64px;color:#9a9a9a;font-weight:400;letter-spacing:0.05px">Drag</div><div style="position:absolute;left:767.8px;top:319.77px;width:6.6px;height:6.6px;background:#0e0e0e;border-radius:0.6px"><svg viewBox="0 0 10 10" width="100%" height="100%"><path d="M2 5.2 L4.1 7.3 L8.3 2.6" fill="none" stroke="#1b7ae0" stroke-width="1.7"/></svg></div><div style="position:absolute;left:684.1px;top:327.85px;width:92.8px;height:9.97px;background:#212121;border-bottom:0.9px solid #181818;box-sizing:border-box"></div><div style="position:absolute;left:684.3px;top:327.85px;width:1.2px;height:9.07px;background:#374c26"></div><div class="t" style="left:688.3px;top:330.82px;font-size:4.7px;line-height:5.64px;color:#9a9a9a;font-weight:400;letter-spacing:0.05px">Solve Forces and Velocity</div><div style="position:absolute;left:767.8px;top:329.74px;width:6.6px;height:6.6px;background:#0e0e0e;border-radius:0.6px"><svg viewBox="0 0 10 10" width="100%" height="100%"><path d="M2 5.2 L4.1 7.3 L8.3 2.6" fill="none" stroke="#1b7ae0" stroke-width="1.7"/></svg></div><div style="position:absolute;left:684.1px;top:337.82px;width:92.8px;height:9.97px;background:#212121;border-bottom:0.9px solid #181818;box-sizing:border-box"></div><div style="position:absolute;left:684.3px;top:337.82px;width:1.2px;height:9.07px;background:#374c26"></div><div class="t" style="left:688.3px;top:340.79px;font-size:4.7px;line-height:5.64px;color:#9a9a9a;font-weight:400;letter-spacing:0.05px">Scale Sprite Size</div><div style="position:absolute;left:767.8px;top:339.71px;width:6.6px;height:6.6px;background:#0e0e0e;border-radius:0.6px"><svg viewBox="0 0 10 10" width="100%" height="100%"><path d="M2 5.2 L4.1 7.3 L8.3 2.6" fill="none" stroke="#1b7ae0" stroke-width="1.7"/></svg></div><div style="position:absolute;left:684.1px;top:347.79px;width:92.8px;height:9.97px;background:#212121;border-bottom:0.9px solid #181818;box-sizing:border-box"></div><div style="position:absolute;left:684.3px;top:347.79px;width:1.2px;height:9.07px;background:#374c26"></div><div class="t" style="left:688.3px;top:350.76px;font-size:4.7px;line-height:5.64px;color:#9a9a9a;font-weight:400;letter-spacing:0.05px">Generate Death Event</div><div style="position:absolute;left:767.8px;top:349.68px;width:6.6px;height:6.6px;background:#0e0e0e;border-radius:0.6px"><svg viewBox="0 0 10 10" width="100%" height="100%"><path d="M2 5.2 L4.1 7.3 L8.3 2.6" fill="none" stroke="#1b7ae0" stroke-width="1.7"/></svg></div><div style="position:absolute;left:684.1px;top:357.76px;width:92.8px;height:10.27px;background:#2b2b2b;border-bottom:0.9px solid #1c1c1c;box-sizing:border-box"></div><div style="position:absolute;left:686.7px;top:360.6px;width:4.6px;height:3px;"><svg viewBox="0 0 10 6" width="100%" height="100%"><path d="M0.5 0.5 H9.5 L5 5.8Z" fill="#d0d0d0"/></svg></div><div class="t" style="left:693.7px;top:361.04px;font-size:4.6px;line-height:5.52px;color:#b2b2b2;font-weight:700;letter-spacing:0.05px">Render</div><div style="position:absolute;left:766.7px;top:359.2px;width:7.8px;height:7.8px;"><svg viewBox="0 0 10 10" width="100%" height="100%"><circle cx="5" cy="5" r="4.0" fill="none" stroke="#a85050" stroke-width="0.85" opacity="0.9"/><path d="M5 3.6 V6.4 M3.6 5 H6.4" stroke="#a85050" stroke-width="1.1"/></svg></div><div style="position:absolute;left:684.1px;top:368.03px;width:92.8px;height:10.67px;background:#212121;border-bottom:0.9px solid #181818;box-sizing:border-box"></div><div style="position:absolute;left:684.3px;top:368.03px;width:1.2px;height:9.77px;background:#563030"></div><div style="position:absolute;left:688.1px;top:371.17px;width:5.4px;height:6px;"><svg viewBox="0 0 10 10" width="100%" height="100%"><path d="M1 1 L5 3 L9 1 L7 5 L9 9 L5 7 L1 9 L3 5Z" fill="#e6e6e6"/></svg></div><div class="t" style="left:696.7px;top:371.35px;font-size:4.7px;line-height:5.64px;color:#9a9a9a;font-weight:400;letter-spacing:0.05px">Sprite Renderer</div><div style="position:absolute;left:767.8px;top:370.27px;width:6.6px;height:6.6px;background:#0e0e0e;border-radius:0.6px"><svg viewBox="0 0 10 10" width="100%" height="100%"><path d="M2 5.2 L4.1 7.3 L8.3 2.6" fill="none" stroke="#1b7ae0" stroke-width="1.7"/></svg></div><div style="position:absolute;left:817.4px;top:119.1px;width:111.2px;height:300.6px;background:#151515;border-radius:2.5px;box-shadow:0 1px 2px rgba(0,0,0,0.5)"></div><div style="position:absolute;left:817.9px;top:119.1px;width:110.2px;height:13.2px;border-radius:2.5px 2.5px 0 0;background:linear-gradient(100deg,#88481b 0%,#824519 38%,#5e3d27 60%,#3e3935 80%,#373737 100%)"></div><div style="position:absolute;left:817.9px;top:119.1px;width:110.2px;height:13.2px;border-radius:2.5px 2.5px 0 0;background:linear-gradient(180deg,rgba(255,190,130,0.16) 0%,rgba(0,0,0,0.18) 40%,rgba(0,0,0,0.12) 60%,rgba(0,0,0,0) 100%)"></div><div style="position:absolute;left:817.9px;top:119.1px;width:110.2px;height:1px;border-radius:2.5px 2.5px 0 0;background:linear-gradient(90deg,rgba(255,200,150,0.22),rgba(255,255,255,0.12))"></div><div style="position:absolute;left:822.9px;top:123.6px;width:4.8px;height:3.1px;"><svg viewBox="0 0 10 6" width="100%" height="100%"><path d="M0.5 0.5 H9.5 L5 5.8Z" fill="#e2e2e2"/></svg></div><div style="position:absolute;left:833.5px;top:122px;width:7.4px;height:7.4px;background:#141414;border-radius:0.8px"><svg viewBox="0 0 10 10" width="100%" height="100%"><path d="M2 5.2 L4.1 7.3 L8.3 2.6" fill="none" stroke="#1b7ae0" stroke-width="1.7"/></svg></div><div class="t" style="left:844.3px;top:122.48px;font-size:6.2px;line-height:7.44px;color:#cdc9c5;font-weight:700;letter-spacing:0.15px">Sparks_Death</div><div style="position:absolute;left:817.9px;top:132.3px;width:110.2px;height:20.9px;background:rgba(24,24,24,0.84)"></div><div style="position:absolute;left:821.9px;top:139.3px;width:4.6px;height:7.4px;"><svg viewBox="0 0 6 9" width="100%" height="100%"><ellipse cx="3" cy="1.4" rx="0.9" ry="1.0" fill="#bdbdbd"/><path d="M1.6 2.6 Q3 1.8 4.4 2.6 L4.3 5.6 Q3 6.4 1.7 5.6Z" fill="#d8d8d8"/><path d="M0.2 8.8 Q0.6 6.2 3 6.1 Q5.4 6.2 5.8 8.8Z" fill="#a0a0a0"/></svg></div><div style="position:absolute;left:828.5px;top:134.8px;width:14.6px;height:16.8px;background:#202020"></div><div style="position:absolute;left:829.7px;top:137px;width:10.6px;height:11.2px;background:#060606;border-bottom:1.6px solid #169c16;box-sizing:border-box"></div><div style="position:absolute;left:834.4px;top:141.9px;width:1.2px;height:0.7px;background:#bbbbbb"></div><div style="position:absolute;left:843.1px;top:134.8px;width:14.6px;height:16.8px;background:#202020"></div><div style="position:absolute;left:847.7px;top:138.5px;width:5.6px;height:7.6px;"><svg viewBox="0 0 8 10" width="100%" height="100%"><circle cx="4" cy="3.6" r="3.2" fill="#ececec"/><path d="M2.6 6 H5.4 L5 8.8 H3Z" fill="#dcdcdc"/></svg></div><div style="position:absolute;left:843.1px;top:136.5px;width:0.8px;height:13.2px;background:#141414"></div><div style="position:absolute;left:817.9px;top:153.2px;width:110.2px;height:10.77px;background:#2a2a2a;border-bottom:0.9px solid #1c1c1c;box-sizing:border-box"></div><div style="position:absolute;left:818.9px;top:154.8px;width:6px;height:6px;"><svg viewBox="0 0 10 10" width="100%" height="100%"><path d="M1.6 8.4 L8.4 1.6" stroke="#b04a2a" stroke-width="2.6"/><path d="M0.8 9.2 L2 8" stroke="#d07050" stroke-width="1.2"/></svg></div><div class="t" style="left:826.8px;top:156.64px;font-size:4.75px;line-height:5.7px;color:#aeaeae;font-weight:400;letter-spacing:0.1px">Properties</div><div class="t" style="left:852px;top:157.67px;font-size:3.7px;line-height:4.44px;color:#e6e6e6;font-weight:700;letter-spacing:-0.15px">GPU</div><div style="position:absolute;left:852.1px;top:155.3px;width:4px;height:0.6px;background:#9a9a9a"></div><div style="position:absolute;left:852px;top:160.8px;width:7.2px;height:0.8px;background:#d0d0d0"></div><div style="position:absolute;left:904.5px;top:154.2px;width:22.4px;height:8.2px;background:#1f1f1f;border-radius:1px"></div><div style="position:absolute;left:905.5px;top:155.4px;width:5.6px;height:5.6px;"><svg viewBox="0 0 10 10" width="100%" height="100%"><path d="M5 0.8 V9.2 M0.8 5 H9.2" stroke="#f07018" stroke-width="2.2"/></svg></div><div class="t" style="left:912px;top:156.64px;font-size:4.75px;line-height:5.7px;color:#b4b4b4;font-weight:400;letter-spacing:0.1px">Stage</div><div style="position:absolute;left:817.9px;top:163.97px;width:110.2px;height:10.77px;background:#2d2d2d;border-bottom:0.9px solid #1c1c1c;box-sizing:border-box"></div><div style="position:absolute;left:818.7px;top:166.17px;width:6.6px;height:5.6px;"><svg viewBox="0 0 10 9" width="100%" height="100%"><path d="M0 0.8 H10" stroke="#a05030" stroke-width="0.8"/><path d="M0 4 H2.2 M3 4 H10 M0 7.3 H2.2 M3 7.3 H10" stroke="#b85a36" stroke-width="2"/></svg></div><div class="t" style="left:827.1px;top:167.5px;font-size:4.6px;line-height:5.52px;color:#b0b0b0;font-weight:700;letter-spacing:0.05px">Emitter Summary</div><div style="position:absolute;left:817.9px;top:174.74px;width:110.2px;height:10.27px;background:#2b2b2b;border-bottom:0.9px solid #1c1c1c;box-sizing:border-box"></div><div class="t" style="left:827.5px;top:178.02px;font-size:4.6px;line-height:5.52px;color:#b2b2b2;font-weight:700;letter-spacing:0.05px">Emitter Spawn</div><div style="position:absolute;left:917.9px;top:176.18px;width:7.8px;height:7.8px;"><svg viewBox="0 0 10 10" width="100%" height="100%"><circle cx="5" cy="5" r="4.0" fill="none" stroke="#a0603f" stroke-width="0.85" opacity="0.9"/><path d="M5 3.6 V6.4 M3.6 5 H6.4" stroke="#a0603f" stroke-width="1.1"/></svg></div><div style="position:absolute;left:817.9px;top:185.02px;width:110.2px;height:10.27px;background:#2b2b2b;border-bottom:0.9px solid #1c1c1c;box-sizing:border-box"></div><div style="position:absolute;left:820.5px;top:187.85px;width:4.6px;height:3px;"><svg viewBox="0 0 10 6" width="100%" height="100%"><path d="M0.5 0.5 H9.5 L5 5.8Z" fill="#d0d0d0"/></svg></div><div class="t" style="left:827.5px;top:188.29px;font-size:4.6px;line-height:5.52px;color:#b2b2b2;font-weight:700;letter-spacing:0.05px">Emitter Update</div><div style="position:absolute;left:917.9px;top:186.45px;width:7.8px;height:7.8px;"><svg viewBox="0 0 10 10" width="100%" height="100%"><circle cx="5" cy="5" r="4.0" fill="none" stroke="#a0603f" stroke-width="0.85" opacity="0.9"/><path d="M5 3.6 V6.4 M3.6 5 H6.4" stroke="#a0603f" stroke-width="1.1"/></svg></div><div style="position:absolute;left:817.9px;top:195.29px;width:110.2px;height:9.97px;background:#212121;border-bottom:0.9px solid #181818;box-sizing:border-box"></div><div style="position:absolute;left:818.1px;top:195.29px;width:1.2px;height:9.07px;background:#553724"></div><div class="t" style="left:822.1px;top:198.26px;font-size:4.7px;line-height:5.64px;color:#9a9a9a;font-weight:400;letter-spacing:0.05px">Emitter State</div><div style="position:absolute;left:852.3px;top:197.68px;width:9px;height:6.6px;background:#9c5c0e;border-radius:1.8px"></div><div class="t" style="left:853.5px;top:198.28px;font-size:4.5px;line-height:5.4px;color:#f0dcc0;font-weight:700;transform:scaleX(0.85);transform-origin:0 50%">Self</div><div style="position:absolute;left:863.1px;top:197.18px;width:11.2px;height:7px;background:#0a0a0a;border-radius:1.2px"></div><div class="t" style="left:863.9px;top:197.88px;font-size:4.5px;line-height:5.4px;color:#e8e8e8;font-weight:400;transform:scaleX(0.82);transform-origin:0 50%">Once</div><div style="position:absolute;left:919px;top:197.18px;width:6.6px;height:6.6px;background:#0e0e0e;border-radius:0.6px"><svg viewBox="0 0 10 10" width="100%" height="100%"><path d="M2 5.2 L4.1 7.3 L8.3 2.6" fill="none" stroke="#1b7ae0" stroke-width="1.7"/></svg></div><div style="position:absolute;left:817.9px;top:205.26px;width:110.2px;height:10.27px;background:#2b2b2b;border-bottom:0.9px solid #1c1c1c;box-sizing:border-box"></div><div style="position:absolute;left:820.5px;top:208.1px;width:4.6px;height:3px;"><svg viewBox="0 0 10 6" width="100%" height="100%"><path d="M0.5 0.5 H9.5 L5 5.8Z" fill="#d0d0d0"/></svg></div><div class="t" style="left:827.5px;top:208.54px;font-size:4.6px;line-height:5.52px;color:#b2b2b2;font-weight:700;letter-spacing:0.05px">Particle Spawn</div><div style="position:absolute;left:917.9px;top:206.7px;width:7.8px;height:7.8px;"><svg viewBox="0 0 10 10" width="100%" height="100%"><circle cx="5" cy="5" r="4.0" fill="none" stroke="#6a9a42" stroke-width="0.85" opacity="0.9"/><path d="M5 3.6 V6.4 M3.6 5 H6.4" stroke="#6a9a42" stroke-width="1.1"/></svg></div><div style="position:absolute;left:817.9px;top:215.53px;width:110.2px;height:9.97px;background:#212121;border-bottom:0.9px solid #181818;box-sizing:border-box"></div><div style="position:absolute;left:818.1px;top:215.53px;width:1.2px;height:9.07px;background:#374c26"></div><div class="t" style="left:822.1px;top:218.5px;font-size:4.7px;line-height:5.64px;color:#9a9a9a;font-weight:400;letter-spacing:0.05px">Initialize Particle</div><div style="position:absolute;left:919px;top:217.42px;width:6.6px;height:6.6px;background:#0e0e0e;border-radius:0.6px"><svg viewBox="0 0 10 10" width="100%" height="100%"><path d="M2 5.2 L4.1 7.3 L8.3 2.6" fill="none" stroke="#1b7ae0" stroke-width="1.7"/></svg></div><div style="position:absolute;left:817.9px;top:225.51px;width:110.2px;height:9.97px;background:#212121;border-bottom:0.9px solid #181818;box-sizing:border-box"></div><div style="position:absolute;left:818.1px;top:225.51px;width:1.2px;height:9.07px;background:#374c26"></div><div class="t" style="left:822.1px;top:228.48px;font-size:4.7px;line-height:5.64px;color:#9a9a9a;font-weight:400;letter-spacing:0.05px">Sphere Location</div><div style="position:absolute;left:907.7px;top:229.3px;width:6px;height:4px;"><svg viewBox="0 0 10 7" width="100%" height="100%"><path d="M0.6 3.5 L5 0.6 L9.4 3.5 L5 6.4Z" fill="none" stroke="#9a9a9a" stroke-width="0.9"/><circle cx="5" cy="3.5" r="1.2" fill="#9a9a9a"/></svg></div><div style="position:absolute;left:919px;top:227.4px;width:6.6px;height:6.6px;background:#0e0e0e;border-radius:0.6px"><svg viewBox="0 0 10 10" width="100%" height="100%"><path d="M2 5.2 L4.1 7.3 L8.3 2.6" fill="none" stroke="#1b7ae0" stroke-width="1.7"/></svg></div><div style="position:absolute;left:817.9px;top:235.48px;width:110.2px;height:9.97px;background:#212121;border-bottom:0.9px solid #181818;box-sizing:border-box"></div><div style="position:absolute;left:818.1px;top:235.48px;width:1.2px;height:9.07px;background:#374c26"></div><div class="t" style="left:822.1px;top:238.45px;font-size:4.7px;line-height:5.64px;color:#9a9a9a;font-weight:400;letter-spacing:0.05px">Add Velocity from Point</div><div style="position:absolute;left:919px;top:237.37px;width:6.6px;height:6.6px;background:#0e0e0e;border-radius:0.6px"><svg viewBox="0 0 10 10" width="100%" height="100%"><path d="M2 5.2 L4.1 7.3 L8.3 2.6" fill="none" stroke="#1b7ae0" stroke-width="1.7"/></svg></div><div style="position:absolute;left:817.9px;top:245.46px;width:110.2px;height:9.97px;background:#212121;border-bottom:0.9px solid #181818;box-sizing:border-box"></div><div style="position:absolute;left:818.1px;top:245.46px;width:1.2px;height:9.07px;background:#374c26"></div><div class="t" style="left:822.1px;top:248.42px;font-size:4.7px;line-height:5.64px;color:#9a9a9a;font-weight:400;letter-spacing:0.05px">Add Velocity</div><div style="position:absolute;left:919px;top:247.34px;width:6.6px;height:6.6px;background:#0e0e0e;border-radius:0.6px"><svg viewBox="0 0 10 10" width="100%" height="100%"><path d="M2 5.2 L4.1 7.3 L8.3 2.6" fill="none" stroke="#1b7ae0" stroke-width="1.7"/></svg></div><div style="position:absolute;left:817.9px;top:255.43px;width:110.2px;height:10.27px;background:#2b2b2b;border-bottom:0.9px solid #1c1c1c;box-sizing:border-box"></div><div style="position:absolute;left:820.5px;top:258.27px;width:4.6px;height:3px;"><svg viewBox="0 0 10 6" width="100%" height="100%"><path d="M0.5 0.5 H9.5 L5 5.8Z" fill="#d0d0d0"/></svg></div><div class="t" style="left:827.5px;top:258.71px;font-size:4.6px;line-height:5.52px;color:#b2b2b2;font-weight:700;letter-spacing:0.05px">Particle Update</div><div style="position:absolute;left:917.9px;top:256.87px;width:7.8px;height:7.8px;"><svg viewBox="0 0 10 10" width="100%" height="100%"><circle cx="5" cy="5" r="4.0" fill="none" stroke="#6a9a42" stroke-width="0.85" opacity="0.9"/><path d="M5 3.6 V6.4 M3.6 5 H6.4" stroke="#6a9a42" stroke-width="1.1"/></svg></div><div style="position:absolute;left:817.9px;top:265.7px;width:110.2px;height:9.97px;background:#212121;border-bottom:0.9px solid #181818;box-sizing:border-box"></div><div style="position:absolute;left:818.1px;top:265.7px;width:1.2px;height:9.07px;background:#374c26"></div><div class="t" style="left:822.1px;top:268.67px;font-size:4.7px;line-height:5.64px;color:#9a9a9a;font-weight:400;letter-spacing:0.05px">Particle State</div><div style="position:absolute;left:919px;top:267.59px;width:6.6px;height:6.6px;background:#0e0e0e;border-radius:0.6px"><svg viewBox="0 0 10 10" width="100%" height="100%"><path d="M2 5.2 L4.1 7.3 L8.3 2.6" fill="none" stroke="#1b7ae0" stroke-width="1.7"/></svg></div><div style="position:absolute;left:817.9px;top:275.68px;width:110.2px;height:9.97px;background:#212121;border-bottom:0.9px solid #181818;box-sizing:border-box"></div><div style="position:absolute;left:818.1px;top:275.68px;width:1.2px;height:9.07px;background:#374c26"></div><div class="t" style="left:822.1px;top:278.64px;font-size:4.7px;line-height:5.64px;color:#9a9a9a;font-weight:400;letter-spacing:0.05px">Scale Color</div><div style="position:absolute;left:919px;top:277.56px;width:6.6px;height:6.6px;background:#0e0e0e;border-radius:0.6px"><svg viewBox="0 0 10 10" width="100%" height="100%"><path d="M2 5.2 L4.1 7.3 L8.3 2.6" fill="none" stroke="#1b7ae0" stroke-width="1.7"/></svg></div><div style="position:absolute;left:817.9px;top:285.65px;width:110.2px;height:9.97px;background:#212121;border-bottom:0.9px solid #181818;box-sizing:border-box"></div><div style="position:absolute;left:818.1px;top:285.65px;width:1.2px;height:9.07px;background:#374c26"></div><div class="t" style="left:822.1px;top:288.62px;font-size:4.7px;line-height:5.64px;color:#9a9a9a;font-weight:400;letter-spacing:0.05px">Curl Noise Force</div><div style="position:absolute;left:919px;top:287.54px;width:6.6px;height:6.6px;background:#0e0e0e;border-radius:0.6px"><svg viewBox="0 0 10 10" width="100%" height="100%"><path d="M2 5.2 L4.1 7.3 L8.3 2.6" fill="none" stroke="#1b7ae0" stroke-width="1.7"/></svg></div><div style="position:absolute;left:817.9px;top:295.62px;width:110.2px;height:9.97px;background:#212121;border-bottom:0.9px solid #181818;box-sizing:border-box"></div><div style="position:absolute;left:818.1px;top:295.62px;width:1.2px;height:9.07px;background:#374c26"></div><div class="t" style="left:822.1px;top:298.59px;font-size:4.7px;line-height:5.64px;color:#9a9a9a;font-weight:400;letter-spacing:0.05px">Gravity Force</div><div style="position:absolute;left:919px;top:297.51px;width:6.6px;height:6.6px;background:#0e0e0e;border-radius:0.6px"><svg viewBox="0 0 10 10" width="100%" height="100%"><path d="M2 5.2 L4.1 7.3 L8.3 2.6" fill="none" stroke="#1b7ae0" stroke-width="1.7"/></svg></div><div style="position:absolute;left:817.9px;top:305.6px;width:110.2px;height:9.97px;background:#212121;border-bottom:0.9px solid #181818;box-sizing:border-box"></div><div style="position:absolute;left:818.1px;top:305.6px;width:1.2px;height:9.07px;background:#374c26"></div><div class="t" style="left:822.1px;top:308.56px;font-size:4.7px;line-height:5.64px;color:#9a9a9a;font-weight:400;letter-spacing:0.05px">Drag</div><div style="position:absolute;left:919px;top:307.48px;width:6.6px;height:6.6px;background:#0e0e0e;border-radius:0.6px"><svg viewBox="0 0 10 10" width="100%" height="100%"><path d="M2 5.2 L4.1 7.3 L8.3 2.6" fill="none" stroke="#1b7ae0" stroke-width="1.7"/></svg></div><div style="position:absolute;left:817.9px;top:315.57px;width:110.2px;height:9.97px;background:#212121;border-bottom:0.9px solid #181818;box-sizing:border-box"></div><div style="position:absolute;left:818.1px;top:315.57px;width:1.2px;height:9.07px;background:#374c26"></div><div class="t" style="left:822.1px;top:318.54px;font-size:4.7px;line-height:5.64px;color:#9a9a9a;font-weight:400;letter-spacing:0.05px">Collision</div><div style="position:absolute;left:907.7px;top:319.36px;width:6px;height:4px;"><svg viewBox="0 0 10 7" width="100%" height="100%"><path d="M0.6 3.5 L5 0.6 L9.4 3.5 L5 6.4Z" fill="none" stroke="#9a9a9a" stroke-width="0.9"/><circle cx="5" cy="3.5" r="1.2" fill="#9a9a9a"/></svg></div><div style="position:absolute;left:919px;top:317.46px;width:6.6px;height:6.6px;background:#0e0e0e;border-radius:0.6px"><svg viewBox="0 0 10 10" width="100%" height="100%"><path d="M2 5.2 L4.1 7.3 L8.3 2.6" fill="none" stroke="#1b7ae0" stroke-width="1.7"/></svg></div><div style="position:absolute;left:817.9px;top:325.54px;width:110.2px;height:9.97px;background:#212121;border-bottom:0.9px solid #181818;box-sizing:border-box"></div><div style="position:absolute;left:818.1px;top:325.54px;width:1.2px;height:9.07px;background:#374c26"></div><div class="t" style="left:822.1px;top:328.51px;font-size:4.7px;line-height:5.64px;color:#9a9a9a;font-weight:400;letter-spacing:0.05px">Solve Forces and Velocity</div><div style="position:absolute;left:919px;top:327.43px;width:6.6px;height:6.6px;background:#0e0e0e;border-radius:0.6px"><svg viewBox="0 0 10 10" width="100%" height="100%"><path d="M2 5.2 L4.1 7.3 L8.3 2.6" fill="none" stroke="#1b7ae0" stroke-width="1.7"/></svg></div><div style="position:absolute;left:817.9px;top:335.52px;width:110.2px;height:9.97px;background:#212121;border-bottom:0.9px solid #181818;box-sizing:border-box"></div><div style="position:absolute;left:818.1px;top:335.52px;width:1.2px;height:9.07px;background:#374c26"></div><div class="t" style="left:822.1px;top:338.48px;font-size:4.7px;line-height:5.64px;color:#9e9e9e;font-weight:400;letter-spacing:0.1px">Set</div><div style="position:absolute;left:834.3px;top:337.3px;width:30.8px;height:7px;background:#3c8a40;border-radius:3.5px"></div><div class="t" style="left:837.5px;top:338.08px;font-size:4.7px;line-height:5.64px;color:#dfe8df;font-weight:700;letter-spacing:0.1px">PARTICLES</div><div class="t" style="left:867.1px;top:338.48px;font-size:4.7px;line-height:5.64px;color:#9e9e9e;font-weight:400;letter-spacing:0.05px">NewLinearColor</div><div style="position:absolute;left:919px;top:337.4px;width:6.6px;height:6.6px;background:#0e0e0e;border-radius:0.6px"><svg viewBox="0 0 10 10" width="100%" height="100%"><path d="M2 5.2 L4.1 7.3 L8.3 2.6" fill="none" stroke="#1b7ae0" stroke-width="1.7"/></svg></div><div style="position:absolute;left:817.9px;top:345.49px;width:110.2px;height:9.97px;background:#212121;border-bottom:0.9px solid #181818;box-sizing:border-box"></div><div style="position:absolute;left:818.1px;top:345.49px;width:1.2px;height:9.07px;background:#374c26"></div><div class="t" style="left:822.1px;top:348.46px;font-size:4.7px;line-height:5.64px;color:#9a9a9a;font-weight:400;letter-spacing:0.05px">Scale Sprite Size</div><div style="position:absolute;left:919px;top:347.38px;width:6.6px;height:6.6px;background:#0e0e0e;border-radius:0.6px"><svg viewBox="0 0 10 10" width="100%" height="100%"><path d="M2 5.2 L4.1 7.3 L8.3 2.6" fill="none" stroke="#1b7ae0" stroke-width="1.7"/></svg></div><div style="position:absolute;left:817.9px;top:355.46px;width:110.2px;height:10.27px;background:#2b2b2b;border-bottom:0.9px solid #1c1c1c;box-sizing:border-box"></div><div style="position:absolute;left:820.5px;top:358.3px;width:4.6px;height:3px;"><svg viewBox="0 0 10 6" width="100%" height="100%"><path d="M0.5 0.5 H9.5 L5 5.8Z" fill="#d0d0d0"/></svg></div><div class="t" style="left:827.5px;top:358.74px;font-size:4.6px;line-height:5.52px;color:#b2b2b2;font-weight:700;letter-spacing:0.05px">Event Handler - Source: DeathEvent</div><div style="position:absolute;left:917.9px;top:356.9px;width:7.8px;height:7.8px;"><svg viewBox="0 0 10 10" width="100%" height="100%"><circle cx="5" cy="5" r="4.0" fill="none" stroke="#6a9a42" stroke-width="0.85" opacity="0.9"/><path d="M5 3.6 V6.4 M3.6 5 H6.4" stroke="#6a9a42" stroke-width="1.1"/></svg></div><div style="position:absolute;left:910.1px;top:358.7px;width:4.4px;height:5.6px;"><svg viewBox="0 0 8 10" width="100%" height="100%"><path d="M0.5 1.8 H7.5 M3 0.8 H5 M1.3 2.5 H6.7 L6.2 9.3 H1.8Z" stroke="#c8c8c8" stroke-width="0.9" fill="none"/></svg></div><div style="position:absolute;left:817.9px;top:365.74px;width:110.2px;height:9.97px;background:#212121;border-bottom:0.9px solid #181818;box-sizing:border-box"></div><div style="position:absolute;left:818.1px;top:365.74px;width:1.2px;height:9.07px;background:#374c26"></div><div class="t" style="left:822.1px;top:368.7px;font-size:4.7px;line-height:5.64px;color:#9a9a9a;font-weight:400;letter-spacing:0.05px">Event Handler Properties</div><div style="position:absolute;left:817.9px;top:375.71px;width:110.2px;height:9.97px;background:#212121;border-bottom:0.9px solid #181818;box-sizing:border-box"></div><div style="position:absolute;left:818.1px;top:375.71px;width:1.2px;height:9.07px;background:#374c26"></div><div class="t" style="left:822.1px;top:378.68px;font-size:4.7px;line-height:5.64px;color:#9a9a9a;font-weight:400;letter-spacing:0.05px">Receive Death Event</div><div style="position:absolute;left:919px;top:377.6px;width:6.6px;height:6.6px;background:#0e0e0e;border-radius:0.6px"><svg viewBox="0 0 10 10" width="100%" height="100%"><path d="M2 5.2 L4.1 7.3 L8.3 2.6" fill="none" stroke="#1b7ae0" stroke-width="1.7"/></svg></div><div style="position:absolute;left:817.9px;top:385.68px;width:110.2px;height:10.27px;background:#2b2b2b;border-bottom:0.9px solid #1c1c1c;box-sizing:border-box"></div><div style="position:absolute;left:820.5px;top:388.52px;width:4.6px;height:3px;"><svg viewBox="0 0 10 6" width="100%" height="100%"><path d="M0.5 0.5 H9.5 L5 5.8Z" fill="#d0d0d0"/></svg></div><div class="t" style="left:827.5px;top:388.96px;font-size:4.6px;line-height:5.52px;color:#b2b2b2;font-weight:700;letter-spacing:0.05px">Render</div><div style="position:absolute;left:917.9px;top:387.12px;width:7.8px;height:7.8px;"><svg viewBox="0 0 10 10" width="100%" height="100%"><circle cx="5" cy="5" r="4.0" fill="none" stroke="#a85050" stroke-width="0.85" opacity="0.9"/><path d="M5 3.6 V6.4 M3.6 5 H6.4" stroke="#a85050" stroke-width="1.1"/></svg></div><div style="position:absolute;left:817.9px;top:395.96px;width:110.2px;height:10.67px;background:#212121;border-bottom:0.9px solid #181818;box-sizing:border-box"></div><div style="position:absolute;left:818.1px;top:395.96px;width:1.2px;height:9.77px;background:#563030"></div><div style="position:absolute;left:821.9px;top:399.09px;width:5.4px;height:6px;"><svg viewBox="0 0 10 10" width="100%" height="100%"><path d="M1 1 L5 3 L9 1 L7 5 L9 9 L5 7 L1 9 L3 5Z" fill="#e6e6e6"/></svg></div><div class="t" style="left:830.5px;top:399.27px;font-size:4.7px;line-height:5.64px;color:#9a9a9a;font-weight:400;letter-spacing:0.05px">Sprite Renderer</div><div style="position:absolute;left:919px;top:398.19px;width:6.6px;height:6.6px;background:#0e0e0e;border-radius:0.6px"><svg viewBox="0 0 10 10" width="100%" height="100%"><path d="M2 5.2 L4.1 7.3 L8.3 2.6" fill="none" stroke="#1b7ae0" stroke-width="1.7"/></svg></div><div style="position:absolute;left:817.9px;top:406.63px;width:110.2px;height:10.67px;background:#212121;border-bottom:0.9px solid #181818;box-sizing:border-box"></div><div style="position:absolute;left:818.1px;top:406.63px;width:1.2px;height:9.77px;background:#563030"></div><div style="position:absolute;left:821.9px;top:409.76px;width:5.4px;height:6px;"><svg viewBox="0 0 8 10" width="100%" height="100%"><circle cx="4" cy="3.6" r="3.2" fill="#ececec"/><path d="M2.6 6 H5.4 L5 8.8 H3Z" fill="#dcdcdc"/></svg></div><div class="t" style="left:830.5px;top:409.94px;font-size:4.7px;line-height:5.64px;color:#9a9a9a;font-weight:400;letter-spacing:0.05px">Light Renderer</div><div style="position:absolute;left:919px;top:408.86px;width:6.6px;height:6.6px;background:#0e0e0e;border-radius:0.6px"><svg viewBox="0 0 10 10" width="100%" height="100%"><path d="M2 5.2 L4.1 7.3 L8.3 2.6" fill="none" stroke="#1b7ae0" stroke-width="1.7"/></svg></div><div style="position:absolute;left:80.3px;top:424.5px;width:96.7px;height:241.2px;background:#151515;border-radius:2.5px;box-shadow:0 1px 2px rgba(0,0,0,0.5)"></div><div style="position:absolute;left:80.8px;top:424.5px;width:95.7px;height:13.2px;border-radius:2.5px 2.5px 0 0;background:linear-gradient(100deg,#88481b 0%,#824519 38%,#5e3d27 60%,#3e3935 80%,#373737 100%)"></div><div style="position:absolute;left:80.8px;top:424.5px;width:95.7px;height:13.2px;border-radius:2.5px 2.5px 0 0;background:linear-gradient(180deg,rgba(255,190,130,0.16) 0%,rgba(0,0,0,0.18) 40%,rgba(0,0,0,0.12) 60%,rgba(0,0,0,0) 100%)"></div><div style="position:absolute;left:80.8px;top:424.5px;width:95.7px;height:1px;border-radius:2.5px 2.5px 0 0;background:linear-gradient(90deg,rgba(255,200,150,0.22),rgba(255,255,255,0.12))"></div><div style="position:absolute;left:85.8px;top:429px;width:4.8px;height:3.1px;"><svg viewBox="0 0 10 6" width="100%" height="100%"><path d="M0.5 0.5 H9.5 L5 5.8Z" fill="#e2e2e2"/></svg></div><div style="position:absolute;left:96.4px;top:427.4px;width:7.4px;height:7.4px;background:#141414;border-radius:0.8px"><svg viewBox="0 0 10 10" width="100%" height="100%"><path d="M2 5.2 L4.1 7.3 L8.3 2.6" fill="none" stroke="#1b7ae0" stroke-width="1.7"/></svg></div><div class="t" style="left:107.2px;top:427.88px;font-size:6.2px;line-height:7.44px;color:#cdc9c5;font-weight:700;letter-spacing:0.15px">Glows</div><div style="position:absolute;left:80.8px;top:437.7px;width:95.7px;height:20.9px;background:rgba(24,24,24,0.84)"></div><div style="position:absolute;left:84.8px;top:444.7px;width:4.6px;height:7.4px;"><svg viewBox="0 0 6 9" width="100%" height="100%"><ellipse cx="3" cy="1.4" rx="0.9" ry="1.0" fill="#bdbdbd"/><path d="M1.6 2.6 Q3 1.8 4.4 2.6 L4.3 5.6 Q3 6.4 1.7 5.6Z" fill="#d8d8d8"/><path d="M0.2 8.8 Q0.6 6.2 3 6.1 Q5.4 6.2 5.8 8.8Z" fill="#a0a0a0"/></svg></div><div style="position:absolute;left:91.4px;top:440.2px;width:14.6px;height:16.8px;background:#202020"></div><div style="position:absolute;left:92.6px;top:442.4px;width:10.6px;height:11.2px;background:#060606;border-bottom:1.6px solid #169c16;box-sizing:border-box"></div><div style="position:absolute;left:97.3px;top:447.3px;width:1.2px;height:0.7px;background:#bbbbbb"></div><div style="position:absolute;left:106px;top:440.2px;width:14.6px;height:16.8px;background:#202020"></div><div style="position:absolute;left:110.6px;top:443.9px;width:5.6px;height:7.6px;"><svg viewBox="0 0 8 10" width="100%" height="100%"><circle cx="4" cy="3.6" r="3.2" fill="#ececec"/><path d="M2.6 6 H5.4 L5 8.8 H3Z" fill="#dcdcdc"/></svg></div><div style="position:absolute;left:106px;top:441.9px;width:0.8px;height:13.2px;background:#141414"></div><div style="position:absolute;left:80.8px;top:458.6px;width:95.7px;height:10.81px;background:#2a2a2a;border-bottom:0.9px solid #1c1c1c;box-sizing:border-box"></div><div style="position:absolute;left:81.8px;top:460.2px;width:6px;height:6px;"><svg viewBox="0 0 10 10" width="100%" height="100%"><path d="M1.6 8.4 L8.4 1.6" stroke="#b04a2a" stroke-width="2.6"/><path d="M0.8 9.2 L2 8" stroke="#d07050" stroke-width="1.2"/></svg></div><div class="t" style="left:89.7px;top:462.06px;font-size:4.75px;line-height:5.7px;color:#aeaeae;font-weight:400;letter-spacing:0.1px">Properties</div><div class="t" style="left:114.9px;top:463.09px;font-size:3.7px;line-height:4.44px;color:#e6e6e6;font-weight:700;letter-spacing:-0.15px">GPU</div><div style="position:absolute;left:115px;top:460.7px;width:4px;height:0.6px;background:#9a9a9a"></div><div style="position:absolute;left:114.9px;top:466.2px;width:7.2px;height:0.8px;background:#d0d0d0"></div><div style="position:absolute;left:152.9px;top:459.6px;width:22.4px;height:8.2px;background:#1f1f1f;border-radius:1px"></div><div style="position:absolute;left:153.9px;top:460.8px;width:5.6px;height:5.6px;"><svg viewBox="0 0 10 10" width="100%" height="100%"><path d="M5 0.8 V9.2 M0.8 5 H9.2" stroke="#f07018" stroke-width="2.2"/></svg></div><div class="t" style="left:160.4px;top:462.06px;font-size:4.75px;line-height:5.7px;color:#b4b4b4;font-weight:400;letter-spacing:0.1px">Stage</div><div style="position:absolute;left:80.8px;top:469.41px;width:95.7px;height:10.81px;background:#2d2d2d;border-bottom:0.9px solid #1c1c1c;box-sizing:border-box"></div><div style="position:absolute;left:81.6px;top:471.61px;width:6.6px;height:5.6px;"><svg viewBox="0 0 10 9" width="100%" height="100%"><path d="M0 0.8 H10" stroke="#a05030" stroke-width="0.8"/><path d="M0 4 H2.2 M3 4 H10 M0 7.3 H2.2 M3 7.3 H10" stroke="#b85a36" stroke-width="2"/></svg></div><div class="t" style="left:90px;top:472.96px;font-size:4.6px;line-height:5.52px;color:#b0b0b0;font-weight:700;letter-spacing:0.05px">Emitter Summary</div><div style="position:absolute;left:80.8px;top:480.22px;width:95.7px;height:10.31px;background:#2b2b2b;border-bottom:0.9px solid #1c1c1c;box-sizing:border-box"></div><div class="t" style="left:90.4px;top:483.52px;font-size:4.6px;line-height:5.52px;color:#b2b2b2;font-weight:700;letter-spacing:0.05px">Emitter Spawn</div><div style="position:absolute;left:166.3px;top:481.68px;width:7.8px;height:7.8px;"><svg viewBox="0 0 10 10" width="100%" height="100%"><circle cx="5" cy="5" r="4.0" fill="none" stroke="#a0603f" stroke-width="0.85" opacity="0.9"/><path d="M5 3.6 V6.4 M3.6 5 H6.4" stroke="#a0603f" stroke-width="1.1"/></svg></div><div style="position:absolute;left:80.8px;top:490.53px;width:95.7px;height:10.31px;background:#2b2b2b;border-bottom:0.9px solid #1c1c1c;box-sizing:border-box"></div><div style="position:absolute;left:83.4px;top:493.39px;width:4.6px;height:3px;"><svg viewBox="0 0 10 6" width="100%" height="100%"><path d="M0.5 0.5 H9.5 L5 5.8Z" fill="#d0d0d0"/></svg></div><div class="t" style="left:90.4px;top:493.83px;font-size:4.6px;line-height:5.52px;color:#b2b2b2;font-weight:700;letter-spacing:0.05px">Emitter Update</div><div style="position:absolute;left:166.3px;top:491.99px;width:7.8px;height:7.8px;"><svg viewBox="0 0 10 10" width="100%" height="100%"><circle cx="5" cy="5" r="4.0" fill="none" stroke="#a0603f" stroke-width="0.85" opacity="0.9"/><path d="M5 3.6 V6.4 M3.6 5 H6.4" stroke="#a0603f" stroke-width="1.1"/></svg></div><div style="position:absolute;left:80.8px;top:500.84px;width:95.7px;height:10.01px;background:#212121;border-bottom:0.9px solid #181818;box-sizing:border-box"></div><div style="position:absolute;left:81px;top:500.84px;width:1.2px;height:9.11px;background:#553724"></div><div class="t" style="left:85px;top:503.83px;font-size:4.7px;line-height:5.64px;color:#9a9a9a;font-weight:400;letter-spacing:0.05px">Emitter State</div><div style="position:absolute;left:115.2px;top:503.25px;width:9px;height:6.6px;background:#9c5c0e;border-radius:1.8px"></div><div class="t" style="left:116.4px;top:503.85px;font-size:4.5px;line-height:5.4px;color:#f0dcc0;font-weight:700;transform:scaleX(0.85);transform-origin:0 50%">Self</div><div style="position:absolute;left:126px;top:502.75px;width:11.2px;height:7px;background:#0a0a0a;border-radius:1.2px"></div><div class="t" style="left:126.8px;top:503.45px;font-size:4.5px;line-height:5.4px;color:#e8e8e8;font-weight:400;transform:scaleX(0.82);transform-origin:0 50%">Once</div><div style="position:absolute;left:167.4px;top:502.75px;width:6.6px;height:6.6px;background:#0e0e0e;border-radius:0.6px"><svg viewBox="0 0 10 10" width="100%" height="100%"><path d="M2 5.2 L4.1 7.3 L8.3 2.6" fill="none" stroke="#1b7ae0" stroke-width="1.7"/></svg></div><div style="position:absolute;left:80.8px;top:510.85px;width:95.7px;height:10.01px;background:#212121;border-bottom:0.9px solid #181818;box-sizing:border-box"></div><div style="position:absolute;left:81px;top:510.85px;width:1.2px;height:9.11px;background:#553724"></div><div class="t" style="left:85px;top:513.84px;font-size:4.7px;line-height:5.64px;color:#9a9a9a;font-weight:400;letter-spacing:0.05px">Spawn Burst Instantaneous</div><div style="position:absolute;left:167.4px;top:512.76px;width:6.6px;height:6.6px;background:#0e0e0e;border-radius:0.6px"><svg viewBox="0 0 10 10" width="100%" height="100%"><path d="M2 5.2 L4.1 7.3 L8.3 2.6" fill="none" stroke="#1b7ae0" stroke-width="1.7"/></svg></div><div style="position:absolute;left:80.8px;top:520.86px;width:95.7px;height:10.31px;background:#2b2b2b;border-bottom:0.9px solid #1c1c1c;box-sizing:border-box"></div><div style="position:absolute;left:83.4px;top:523.72px;width:4.6px;height:3px;"><svg viewBox="0 0 10 6" width="100%" height="100%"><path d="M0.5 0.5 H9.5 L5 5.8Z" fill="#d0d0d0"/></svg></div><div class="t" style="left:90.4px;top:524.16px;font-size:4.6px;line-height:5.52px;color:#b2b2b2;font-weight:700;letter-spacing:0.05px">Particle Spawn</div><div style="position:absolute;left:166.3px;top:522.32px;width:7.8px;height:7.8px;"><svg viewBox="0 0 10 10" width="100%" height="100%"><circle cx="5" cy="5" r="4.0" fill="none" stroke="#6a9a42" stroke-width="0.85" opacity="0.9"/><path d="M5 3.6 V6.4 M3.6 5 H6.4" stroke="#6a9a42" stroke-width="1.1"/></svg></div><div style="position:absolute;left:80.8px;top:531.17px;width:95.7px;height:10.01px;background:#212121;border-bottom:0.9px solid #181818;box-sizing:border-box"></div><div style="position:absolute;left:81px;top:531.17px;width:1.2px;height:9.11px;background:#374c26"></div><div class="t" style="left:85px;top:534.16px;font-size:4.7px;line-height:5.64px;color:#9a9a9a;font-weight:400;letter-spacing:0.05px">Initialize Particle</div><div style="position:absolute;left:167.4px;top:533.08px;width:6.6px;height:6.6px;background:#0e0e0e;border-radius:0.6px"><svg viewBox="0 0 10 10" width="100%" height="100%"><path d="M2 5.2 L4.1 7.3 L8.3 2.6" fill="none" stroke="#1b7ae0" stroke-width="1.7"/></svg></div><div style="position:absolute;left:80.8px;top:541.18px;width:95.7px;height:10.01px;background:#212121;border-bottom:0.9px solid #181818;box-sizing:border-box"></div><div style="position:absolute;left:81px;top:541.18px;width:1.2px;height:9.11px;background:#374c26"></div><div class="t" style="left:85px;top:544.17px;font-size:4.7px;line-height:5.64px;color:#9a9a9a;font-weight:400;letter-spacing:0.05px">Add Velocity</div><div style="position:absolute;left:167.4px;top:543.09px;width:6.6px;height:6.6px;background:#0e0e0e;border-radius:0.6px"><svg viewBox="0 0 10 10" width="100%" height="100%"><path d="M2 5.2 L4.1 7.3 L8.3 2.6" fill="none" stroke="#1b7ae0" stroke-width="1.7"/></svg></div><div style="position:absolute;left:80.8px;top:551.19px;width:95.7px;height:10.31px;background:#2b2b2b;border-bottom:0.9px solid #1c1c1c;box-sizing:border-box"></div><div style="position:absolute;left:83.4px;top:554.05px;width:4.6px;height:3px;"><svg viewBox="0 0 10 6" width="100%" height="100%"><path d="M0.5 0.5 H9.5 L5 5.8Z" fill="#d0d0d0"/></svg></div><div class="t" style="left:90.4px;top:554.49px;font-size:4.6px;line-height:5.52px;color:#b2b2b2;font-weight:700;letter-spacing:0.05px">Particle Update</div><div style="position:absolute;left:166.3px;top:552.65px;width:7.8px;height:7.8px;"><svg viewBox="0 0 10 10" width="100%" height="100%"><circle cx="5" cy="5" r="4.0" fill="none" stroke="#6a9a42" stroke-width="0.85" opacity="0.9"/><path d="M5 3.6 V6.4 M3.6 5 H6.4" stroke="#6a9a42" stroke-width="1.1"/></svg></div><div style="position:absolute;left:80.8px;top:561.5px;width:95.7px;height:10.01px;background:#212121;border-bottom:0.9px solid #181818;box-sizing:border-box"></div><div style="position:absolute;left:81px;top:561.5px;width:1.2px;height:9.11px;background:#374c26"></div><div class="t" style="left:85px;top:564.49px;font-size:4.7px;line-height:5.64px;color:#9a9a9a;font-weight:400;letter-spacing:0.05px">Particle State</div><div style="position:absolute;left:167.4px;top:563.41px;width:6.6px;height:6.6px;background:#0e0e0e;border-radius:0.6px"><svg viewBox="0 0 10 10" width="100%" height="100%"><path d="M2 5.2 L4.1 7.3 L8.3 2.6" fill="none" stroke="#1b7ae0" stroke-width="1.7"/></svg></div><div style="position:absolute;left:80.8px;top:571.51px;width:95.7px;height:10.01px;background:#212121;border-bottom:0.9px solid #181818;box-sizing:border-box"></div><div style="position:absolute;left:81px;top:571.51px;width:1.2px;height:9.11px;background:#374c26"></div><div class="t" style="left:85px;top:574.5px;font-size:4.7px;line-height:5.64px;color:#9a9a9a;font-weight:400;letter-spacing:0.05px">Scale Color</div><div style="position:absolute;left:167.4px;top:573.42px;width:6.6px;height:6.6px;background:#0e0e0e;border-radius:0.6px"><svg viewBox="0 0 10 10" width="100%" height="100%"><path d="M2 5.2 L4.1 7.3 L8.3 2.6" fill="none" stroke="#1b7ae0" stroke-width="1.7"/></svg></div><div style="position:absolute;left:80.8px;top:581.52px;width:95.7px;height:10.01px;background:#212121;border-bottom:0.9px solid #181818;box-sizing:border-box"></div><div style="position:absolute;left:81px;top:581.52px;width:1.2px;height:9.11px;background:#374c26"></div><div class="t" style="left:85px;top:584.5px;font-size:4.7px;line-height:5.64px;color:#9a9a9a;font-weight:400;letter-spacing:0.05px">Drag</div><div style="position:absolute;left:167.4px;top:583.42px;width:6.6px;height:6.6px;background:#0e0e0e;border-radius:0.6px"><svg viewBox="0 0 10 10" width="100%" height="100%"><path d="M2 5.2 L4.1 7.3 L8.3 2.6" fill="none" stroke="#1b7ae0" stroke-width="1.7"/></svg></div><div style="position:absolute;left:80.8px;top:591.53px;width:95.7px;height:10.01px;background:#212121;border-bottom:0.9px solid #181818;box-sizing:border-box"></div><div style="position:absolute;left:81px;top:591.53px;width:1.2px;height:9.11px;background:#374c26"></div><div class="t" style="left:85px;top:594.51px;font-size:4.7px;line-height:5.64px;color:#9a9a9a;font-weight:400;letter-spacing:0.05px">Solve Forces and Velocity</div><div style="position:absolute;left:167.4px;top:593.43px;width:6.6px;height:6.6px;background:#0e0e0e;border-radius:0.6px"><svg viewBox="0 0 10 10" width="100%" height="100%"><path d="M2 5.2 L4.1 7.3 L8.3 2.6" fill="none" stroke="#1b7ae0" stroke-width="1.7"/></svg></div><div style="position:absolute;left:80.8px;top:601.54px;width:95.7px;height:10.01px;background:#212121;border-bottom:0.9px solid #181818;box-sizing:border-box"></div><div style="position:absolute;left:81px;top:601.54px;width:1.2px;height:9.11px;background:#374c26"></div><div class="t" style="left:85px;top:604.52px;font-size:4.7px;line-height:5.64px;color:#9a9a9a;font-weight:400;letter-spacing:0.05px">Scale Sprite Size</div><div style="position:absolute;left:167.4px;top:603.44px;width:6.6px;height:6.6px;background:#0e0e0e;border-radius:0.6px"><svg viewBox="0 0 10 10" width="100%" height="100%"><path d="M2 5.2 L4.1 7.3 L8.3 2.6" fill="none" stroke="#1b7ae0" stroke-width="1.7"/></svg></div><div style="position:absolute;left:80.8px;top:611.55px;width:95.7px;height:10.01px;background:#212121;border-bottom:0.9px solid #181818;box-sizing:border-box"></div><div style="position:absolute;left:81px;top:611.55px;width:1.2px;height:9.11px;background:#374c26"></div><div class="t" style="left:85px;top:614.53px;font-size:4.7px;line-height:5.64px;color:#9a9a9a;font-weight:400;letter-spacing:0.05px">Dynamic Material Parameters</div><div style="position:absolute;left:167.4px;top:613.45px;width:6.6px;height:6.6px;background:#0e0e0e;border-radius:0.6px"><svg viewBox="0 0 10 10" width="100%" height="100%"><path d="M2 5.2 L4.1 7.3 L8.3 2.6" fill="none" stroke="#1b7ae0" stroke-width="1.7"/></svg></div><div style="position:absolute;left:80.8px;top:621.56px;width:95.7px;height:10.01px;background:#212121;border-bottom:0.9px solid #181818;box-sizing:border-box"></div><div style="position:absolute;left:81px;top:621.56px;width:1.2px;height:9.11px;background:#374c26"></div><div class="t" style="left:85px;top:624.54px;font-size:4.7px;line-height:5.64px;color:#9e9e9e;font-weight:400;letter-spacing:0.1px">Set</div><div style="position:absolute;left:97.2px;top:623.36px;width:30.8px;height:7px;background:#3c8a40;border-radius:3.5px"></div><div class="t" style="left:100.4px;top:624.14px;font-size:4.7px;line-height:5.64px;color:#dfe8df;font-weight:700;letter-spacing:0.1px">PARTICLES</div><div class="t" style="left:130px;top:624.54px;font-size:4.7px;line-height:5.64px;color:#9e9e9e;font-weight:400;letter-spacing:0.05px">NewLinearColor</div><div style="position:absolute;left:167.4px;top:623.46px;width:6.6px;height:6.6px;background:#0e0e0e;border-radius:0.6px"><svg viewBox="0 0 10 10" width="100%" height="100%"><path d="M2 5.2 L4.1 7.3 L8.3 2.6" fill="none" stroke="#1b7ae0" stroke-width="1.7"/></svg></div><div style="position:absolute;left:80.8px;top:631.57px;width:95.7px;height:10.31px;background:#2b2b2b;border-bottom:0.9px solid #1c1c1c;box-sizing:border-box"></div><div style="position:absolute;left:83.4px;top:634.42px;width:4.6px;height:3px;"><svg viewBox="0 0 10 6" width="100%" height="100%"><path d="M0.5 0.5 H9.5 L5 5.8Z" fill="#d0d0d0"/></svg></div><div class="t" style="left:90.4px;top:634.86px;font-size:4.6px;line-height:5.52px;color:#b2b2b2;font-weight:700;letter-spacing:0.05px">Render</div><div style="position:absolute;left:166.3px;top:633.02px;width:7.8px;height:7.8px;"><svg viewBox="0 0 10 10" width="100%" height="100%"><circle cx="5" cy="5" r="4.0" fill="none" stroke="#a85050" stroke-width="0.85" opacity="0.9"/><path d="M5 3.6 V6.4 M3.6 5 H6.4" stroke="#a85050" stroke-width="1.1"/></svg></div><div style="position:absolute;left:80.8px;top:641.88px;width:95.7px;height:10.71px;background:#212121;border-bottom:0.9px solid #181818;box-sizing:border-box"></div><div style="position:absolute;left:81px;top:641.88px;width:1.2px;height:9.81px;background:#563030"></div><div style="position:absolute;left:84.8px;top:645.03px;width:5.4px;height:6px;"><svg viewBox="0 0 10 10" width="100%" height="100%"><path d="M1 1 L5 3 L9 1 L7 5 L9 9 L5 7 L1 9 L3 5Z" fill="#e6e6e6"/></svg></div><div class="t" style="left:93.4px;top:645.21px;font-size:4.7px;line-height:5.64px;color:#9a9a9a;font-weight:400;letter-spacing:0.05px">Sprite Renderer</div><div style="position:absolute;left:167.4px;top:644.13px;width:6.6px;height:6.6px;background:#0e0e0e;border-radius:0.6px"><svg viewBox="0 0 10 10" width="100%" height="100%"><path d="M2 5.2 L4.1 7.3 L8.3 2.6" fill="none" stroke="#1b7ae0" stroke-width="1.7"/></svg></div><div style="position:absolute;left:80.8px;top:652.59px;width:95.7px;height:10.71px;background:#212121;border-bottom:0.9px solid #181818;box-sizing:border-box"></div><div style="position:absolute;left:81px;top:652.59px;width:1.2px;height:9.81px;background:#563030"></div><div style="position:absolute;left:84.8px;top:655.74px;width:5.4px;height:6px;"><svg viewBox="0 0 8 10" width="100%" height="100%"><circle cx="4" cy="3.6" r="3.2" fill="#ececec"/><path d="M2.6 6 H5.4 L5 8.8 H3Z" fill="#dcdcdc"/></svg></div><div class="t" style="left:93.4px;top:655.92px;font-size:4.7px;line-height:5.64px;color:#9a9a9a;font-weight:400;letter-spacing:0.05px">Light Renderer</div><div style="position:absolute;left:167.4px;top:654.84px;width:6.6px;height:6.6px;background:#0e0e0e;border-radius:0.6px"><svg viewBox="0 0 10 10" width="100%" height="100%"><path d="M2 5.2 L4.1 7.3 L8.3 2.6" fill="none" stroke="#1b7ae0" stroke-width="1.7"/></svg></div><div style="position:absolute;left:199.4px;top:424.5px;width:80.7px;height:220.3px;background:#151515;border-radius:2.5px;box-shadow:0 1px 2px rgba(0,0,0,0.5)"></div><div style="position:absolute;left:199.9px;top:424.5px;width:79.7px;height:13.2px;border-radius:2.5px 2.5px 0 0;background:linear-gradient(100deg,#88481b 0%,#824519 38%,#5e3d27 60%,#3e3935 80%,#373737 100%)"></div><div style="position:absolute;left:199.9px;top:424.5px;width:79.7px;height:13.2px;border-radius:2.5px 2.5px 0 0;background:linear-gradient(180deg,rgba(255,190,130,0.16) 0%,rgba(0,0,0,0.18) 40%,rgba(0,0,0,0.12) 60%,rgba(0,0,0,0) 100%)"></div><div style="position:absolute;left:199.9px;top:424.5px;width:79.7px;height:1px;border-radius:2.5px 2.5px 0 0;background:linear-gradient(90deg,rgba(255,200,150,0.22),rgba(255,255,255,0.12))"></div><div style="position:absolute;left:204.9px;top:429px;width:4.8px;height:3.1px;"><svg viewBox="0 0 10 6" width="100%" height="100%"><path d="M0.5 0.5 H9.5 L5 5.8Z" fill="#e2e2e2"/></svg></div><div style="position:absolute;left:215.5px;top:427.4px;width:7.4px;height:7.4px;background:#141414;border-radius:0.8px"><svg viewBox="0 0 10 10" width="100%" height="100%"><path d="M2 5.2 L4.1 7.3 L8.3 2.6" fill="none" stroke="#1b7ae0" stroke-width="1.7"/></svg></div><div class="t" style="left:226.3px;top:427.88px;font-size:6.2px;line-height:7.44px;color:#cdc9c5;font-weight:700;letter-spacing:0.15px">Glows001</div><div style="position:absolute;left:199.9px;top:437.7px;width:79.7px;height:20.9px;background:rgba(24,24,24,0.84)"></div><div style="position:absolute;left:203.9px;top:444.7px;width:4.6px;height:7.4px;"><svg viewBox="0 0 6 9" width="100%" height="100%"><ellipse cx="3" cy="1.4" rx="0.9" ry="1.0" fill="#bdbdbd"/><path d="M1.6 2.6 Q3 1.8 4.4 2.6 L4.3 5.6 Q3 6.4 1.7 5.6Z" fill="#d8d8d8"/><path d="M0.2 8.8 Q0.6 6.2 3 6.1 Q5.4 6.2 5.8 8.8Z" fill="#a0a0a0"/></svg></div><div style="position:absolute;left:210.5px;top:440.2px;width:14.6px;height:16.8px;background:#202020"></div><div style="position:absolute;left:211.7px;top:442.4px;width:10.6px;height:11.2px;background:#060606;border-bottom:1.6px solid #169c16;box-sizing:border-box"></div><div style="position:absolute;left:216.4px;top:447.3px;width:1.2px;height:0.7px;background:#bbbbbb"></div><div style="position:absolute;left:199.9px;top:458.6px;width:79.7px;height:10.8px;background:#2a2a2a;border-bottom:0.9px solid #1c1c1c;box-sizing:border-box"></div><div style="position:absolute;left:200.9px;top:460.2px;width:6px;height:6px;"><svg viewBox="0 0 10 10" width="100%" height="100%"><path d="M1.6 8.4 L8.4 1.6" stroke="#b04a2a" stroke-width="2.6"/><path d="M0.8 9.2 L2 8" stroke="#d07050" stroke-width="1.2"/></svg></div><div class="t" style="left:208.8px;top:462.05px;font-size:4.75px;line-height:5.7px;color:#aeaeae;font-weight:400;letter-spacing:0.1px">Properties</div><div class="t" style="left:234.1px;top:462.98px;font-size:3.7px;line-height:4.44px;color:#f6e45a;font-weight:700;letter-spacing:-0.15px">CPU</div><div style="position:absolute;left:233.8px;top:460.6px;width:7.6px;height:0.7px;background:#e0d050"></div><div style="position:absolute;left:233.8px;top:466.1px;width:7.6px;height:0.7px;background:#e0d050"></div><div style="position:absolute;left:235.3px;top:459.8px;width:0.6px;height:8px;background:#d8c850"></div><div style="position:absolute;left:239.3px;top:459.8px;width:0.6px;height:8px;background:#d8c850"></div><div style="position:absolute;left:256px;top:459.6px;width:22.4px;height:8.2px;background:#1f1f1f;border-radius:1px"></div><div style="position:absolute;left:257px;top:460.8px;width:5.6px;height:5.6px;"><svg viewBox="0 0 10 10" width="100%" height="100%"><path d="M5 0.8 V9.2 M0.8 5 H9.2" stroke="#f07018" stroke-width="2.2"/></svg></div><div class="t" style="left:263.5px;top:462.05px;font-size:4.75px;line-height:5.7px;color:#b4b4b4;font-weight:400;letter-spacing:0.1px">Stage</div><div style="position:absolute;left:199.9px;top:469.4px;width:79.7px;height:10.8px;background:#2d2d2d;border-bottom:0.9px solid #1c1c1c;box-sizing:border-box"></div><div style="position:absolute;left:200.7px;top:471.6px;width:6.6px;height:5.6px;"><svg viewBox="0 0 10 9" width="100%" height="100%"><path d="M0 0.8 H10" stroke="#a05030" stroke-width="0.8"/><path d="M0 4 H2.2 M3 4 H10 M0 7.3 H2.2 M3 7.3 H10" stroke="#b85a36" stroke-width="2"/></svg></div><div class="t" style="left:209.1px;top:472.94px;font-size:4.6px;line-height:5.52px;color:#b0b0b0;font-weight:700;letter-spacing:0.05px">Emitter Summary</div><div style="position:absolute;left:199.9px;top:480.2px;width:79.7px;height:10.3px;background:#2b2b2b;border-bottom:0.9px solid #1c1c1c;box-sizing:border-box"></div><div class="t" style="left:209.5px;top:483.49px;font-size:4.6px;line-height:5.52px;color:#b2b2b2;font-weight:700;letter-spacing:0.05px">Emitter Spawn</div><div style="position:absolute;left:269.4px;top:481.65px;width:7.8px;height:7.8px;"><svg viewBox="0 0 10 10" width="100%" height="100%"><circle cx="5" cy="5" r="4.0" fill="none" stroke="#a0603f" stroke-width="0.85" opacity="0.9"/><path d="M5 3.6 V6.4 M3.6 5 H6.4" stroke="#a0603f" stroke-width="1.1"/></svg></div><div style="position:absolute;left:199.9px;top:490.5px;width:79.7px;height:10.3px;background:#2b2b2b;border-bottom:0.9px solid #1c1c1c;box-sizing:border-box"></div><div style="position:absolute;left:202.5px;top:493.35px;width:4.6px;height:3px;"><svg viewBox="0 0 10 6" width="100%" height="100%"><path d="M0.5 0.5 H9.5 L5 5.8Z" fill="#d0d0d0"/></svg></div><div class="t" style="left:209.5px;top:493.79px;font-size:4.6px;line-height:5.52px;color:#b2b2b2;font-weight:700;letter-spacing:0.05px">Emitter Update</div><div style="position:absolute;left:269.4px;top:491.95px;width:7.8px;height:7.8px;"><svg viewBox="0 0 10 10" width="100%" height="100%"><circle cx="5" cy="5" r="4.0" fill="none" stroke="#a0603f" stroke-width="0.85" opacity="0.9"/><path d="M5 3.6 V6.4 M3.6 5 H6.4" stroke="#a0603f" stroke-width="1.1"/></svg></div><div style="position:absolute;left:199.9px;top:500.8px;width:79.7px;height:10px;background:#212121;border-bottom:0.9px solid #181818;box-sizing:border-box"></div><div style="position:absolute;left:200.1px;top:500.8px;width:1.2px;height:9.1px;background:#553724"></div><div class="t" style="left:204.1px;top:503.78px;font-size:4.7px;line-height:5.64px;color:#9a9a9a;font-weight:400;letter-spacing:0.05px">Emitter State</div><div style="position:absolute;left:234.3px;top:503.2px;width:9px;height:6.6px;background:#9c5c0e;border-radius:1.8px"></div><div class="t" style="left:235.5px;top:503.8px;font-size:4.5px;line-height:5.4px;color:#f0dcc0;font-weight:700;transform:scaleX(0.85);transform-origin:0 50%">Self</div><div style="position:absolute;left:245.1px;top:502.7px;width:11.2px;height:7px;background:#0a0a0a;border-radius:1.2px"></div><div class="t" style="left:245.9px;top:503.4px;font-size:4.5px;line-height:5.4px;color:#e8e8e8;font-weight:400;transform:scaleX(0.82);transform-origin:0 50%">Once</div><div style="position:absolute;left:270.5px;top:502.7px;width:6.6px;height:6.6px;background:#0e0e0e;border-radius:0.6px"><svg viewBox="0 0 10 10" width="100%" height="100%"><path d="M2 5.2 L4.1 7.3 L8.3 2.6" fill="none" stroke="#1b7ae0" stroke-width="1.7"/></svg></div><div style="position:absolute;left:199.9px;top:510.8px;width:79.7px;height:10px;background:#212121;border-bottom:0.9px solid #181818;box-sizing:border-box"></div><div style="position:absolute;left:200.1px;top:510.8px;width:1.2px;height:9.1px;background:#553724"></div><div class="t" style="left:204.1px;top:513.78px;font-size:4.7px;line-height:5.64px;color:#9a9a9a;font-weight:400;letter-spacing:0.05px">Spawn Burst Instantaneous</div><div style="position:absolute;left:270.5px;top:512.7px;width:6.6px;height:6.6px;background:#0e0e0e;border-radius:0.6px"><svg viewBox="0 0 10 10" width="100%" height="100%"><path d="M2 5.2 L4.1 7.3 L8.3 2.6" fill="none" stroke="#1b7ae0" stroke-width="1.7"/></svg></div><div style="position:absolute;left:199.9px;top:520.8px;width:79.7px;height:10.3px;background:#2b2b2b;border-bottom:0.9px solid #1c1c1c;box-sizing:border-box"></div><div style="position:absolute;left:202.5px;top:523.65px;width:4.6px;height:3px;"><svg viewBox="0 0 10 6" width="100%" height="100%"><path d="M0.5 0.5 H9.5 L5 5.8Z" fill="#d0d0d0"/></svg></div><div class="t" style="left:209.5px;top:524.09px;font-size:4.6px;line-height:5.52px;color:#b2b2b2;font-weight:700;letter-spacing:0.05px">Particle Spawn</div><div style="position:absolute;left:269.4px;top:522.25px;width:7.8px;height:7.8px;"><svg viewBox="0 0 10 10" width="100%" height="100%"><circle cx="5" cy="5" r="4.0" fill="none" stroke="#6a9a42" stroke-width="0.85" opacity="0.9"/><path d="M5 3.6 V6.4 M3.6 5 H6.4" stroke="#6a9a42" stroke-width="1.1"/></svg></div><div style="position:absolute;left:199.9px;top:531.1px;width:79.7px;height:10px;background:#212121;border-bottom:0.9px solid #181818;box-sizing:border-box"></div><div style="position:absolute;left:200.1px;top:531.1px;width:1.2px;height:9.1px;background:#374c26"></div><div class="t" style="left:204.1px;top:534.08px;font-size:4.7px;line-height:5.64px;color:#9a9a9a;font-weight:400;letter-spacing:0.05px">Initialize Particle</div><div style="position:absolute;left:270.5px;top:533px;width:6.6px;height:6.6px;background:#0e0e0e;border-radius:0.6px"><svg viewBox="0 0 10 10" width="100%" height="100%"><path d="M2 5.2 L4.1 7.3 L8.3 2.6" fill="none" stroke="#1b7ae0" stroke-width="1.7"/></svg></div><div style="position:absolute;left:199.9px;top:541.1px;width:79.7px;height:10px;background:#212121;border-bottom:0.9px solid #181818;box-sizing:border-box"></div><div style="position:absolute;left:200.1px;top:541.1px;width:1.2px;height:9.1px;background:#374c26"></div><div class="t" style="left:204.1px;top:544.08px;font-size:4.7px;line-height:5.64px;color:#9a9a9a;font-weight:400;letter-spacing:0.05px">Add Velocity</div><div style="position:absolute;left:270.5px;top:543px;width:6.6px;height:6.6px;background:#0e0e0e;border-radius:0.6px"><svg viewBox="0 0 10 10" width="100%" height="100%"><path d="M2 5.2 L4.1 7.3 L8.3 2.6" fill="none" stroke="#1b7ae0" stroke-width="1.7"/></svg></div><div style="position:absolute;left:199.9px;top:551.1px;width:79.7px;height:10.3px;background:#2b2b2b;border-bottom:0.9px solid #1c1c1c;box-sizing:border-box"></div><div style="position:absolute;left:202.5px;top:553.95px;width:4.6px;height:3px;"><svg viewBox="0 0 10 6" width="100%" height="100%"><path d="M0.5 0.5 H9.5 L5 5.8Z" fill="#d0d0d0"/></svg></div><div class="t" style="left:209.5px;top:554.39px;font-size:4.6px;line-height:5.52px;color:#b2b2b2;font-weight:700;letter-spacing:0.05px">Particle Update</div><div style="position:absolute;left:269.4px;top:552.55px;width:7.8px;height:7.8px;"><svg viewBox="0 0 10 10" width="100%" height="100%"><circle cx="5" cy="5" r="4.0" fill="none" stroke="#6a9a42" stroke-width="0.85" opacity="0.9"/><path d="M5 3.6 V6.4 M3.6 5 H6.4" stroke="#6a9a42" stroke-width="1.1"/></svg></div><div style="position:absolute;left:199.9px;top:561.4px;width:79.7px;height:10px;background:#212121;border-bottom:0.9px solid #181818;box-sizing:border-box"></div><div style="position:absolute;left:200.1px;top:561.4px;width:1.2px;height:9.1px;background:#374c26"></div><div class="t" style="left:204.1px;top:564.38px;font-size:4.7px;line-height:5.64px;color:#9a9a9a;font-weight:400;letter-spacing:0.05px">Particle State</div><div style="position:absolute;left:270.5px;top:563.3px;width:6.6px;height:6.6px;background:#0e0e0e;border-radius:0.6px"><svg viewBox="0 0 10 10" width="100%" height="100%"><path d="M2 5.2 L4.1 7.3 L8.3 2.6" fill="none" stroke="#1b7ae0" stroke-width="1.7"/></svg></div><div style="position:absolute;left:199.9px;top:571.4px;width:79.7px;height:10px;background:#212121;border-bottom:0.9px solid #181818;box-sizing:border-box"></div><div style="position:absolute;left:200.1px;top:571.4px;width:1.2px;height:9.1px;background:#374c26"></div><div class="t" style="left:204.1px;top:574.38px;font-size:4.7px;line-height:5.64px;color:#9a9a9a;font-weight:400;letter-spacing:0.05px">Scale Color</div><div style="position:absolute;left:270.5px;top:573.3px;width:6.6px;height:6.6px;background:#0e0e0e;border-radius:0.6px"><svg viewBox="0 0 10 10" width="100%" height="100%"><path d="M2 5.2 L4.1 7.3 L8.3 2.6" fill="none" stroke="#1b7ae0" stroke-width="1.7"/></svg></div><div style="position:absolute;left:199.9px;top:581.4px;width:79.7px;height:10px;background:#212121;border-bottom:0.9px solid #181818;box-sizing:border-box"></div><div style="position:absolute;left:200.1px;top:581.4px;width:1.2px;height:9.1px;background:#374c26"></div><div class="t" style="left:204.1px;top:584.38px;font-size:4.7px;line-height:5.64px;color:#9a9a9a;font-weight:400;letter-spacing:0.05px">Drag</div><div style="position:absolute;left:270.5px;top:583.3px;width:6.6px;height:6.6px;background:#0e0e0e;border-radius:0.6px"><svg viewBox="0 0 10 10" width="100%" height="100%"><path d="M2 5.2 L4.1 7.3 L8.3 2.6" fill="none" stroke="#1b7ae0" stroke-width="1.7"/></svg></div><div style="position:absolute;left:199.9px;top:591.4px;width:79.7px;height:10px;background:#212121;border-bottom:0.9px solid #181818;box-sizing:border-box"></div><div style="position:absolute;left:200.1px;top:591.4px;width:1.2px;height:9.1px;background:#374c26"></div><div class="t" style="left:204.1px;top:594.38px;font-size:4.7px;line-height:5.64px;color:#9a9a9a;font-weight:400;letter-spacing:0.05px">Solve Forces and Velocity</div><div style="position:absolute;left:270.5px;top:593.3px;width:6.6px;height:6.6px;background:#0e0e0e;border-radius:0.6px"><svg viewBox="0 0 10 10" width="100%" height="100%"><path d="M2 5.2 L4.1 7.3 L8.3 2.6" fill="none" stroke="#1b7ae0" stroke-width="1.7"/></svg></div><div style="position:absolute;left:199.9px;top:601.4px;width:79.7px;height:10px;background:#212121;border-bottom:0.9px solid #181818;box-sizing:border-box"></div><div style="position:absolute;left:200.1px;top:601.4px;width:1.2px;height:9.1px;background:#374c26"></div><div class="t" style="left:204.1px;top:604.38px;font-size:4.7px;line-height:5.64px;color:#9a9a9a;font-weight:400;letter-spacing:0.05px">Scale Sprite Size</div><div style="position:absolute;left:270.5px;top:603.3px;width:6.6px;height:6.6px;background:#0e0e0e;border-radius:0.6px"><svg viewBox="0 0 10 10" width="100%" height="100%"><path d="M2 5.2 L4.1 7.3 L8.3 2.6" fill="none" stroke="#1b7ae0" stroke-width="1.7"/></svg></div><div style="position:absolute;left:199.9px;top:611.4px;width:79.7px;height:10px;background:#212121;border-bottom:0.9px solid #181818;box-sizing:border-box"></div><div style="position:absolute;left:200.1px;top:611.4px;width:1.2px;height:9.1px;background:#374c26"></div><div class="t" style="left:204.1px;top:614.38px;font-size:4.7px;line-height:5.64px;color:#9a9a9a;font-weight:400;letter-spacing:0.05px">Dynamic Material Parameters</div><div style="position:absolute;left:270.5px;top:613.3px;width:6.6px;height:6.6px;background:#0e0e0e;border-radius:0.6px"><svg viewBox="0 0 10 10" width="100%" height="100%"><path d="M2 5.2 L4.1 7.3 L8.3 2.6" fill="none" stroke="#1b7ae0" stroke-width="1.7"/></svg></div><div style="position:absolute;left:199.9px;top:621.4px;width:79.7px;height:10.3px;background:#2b2b2b;border-bottom:0.9px solid #1c1c1c;box-sizing:border-box"></div><div style="position:absolute;left:202.5px;top:624.25px;width:4.6px;height:3px;"><svg viewBox="0 0 10 6" width="100%" height="100%"><path d="M0.5 0.5 H9.5 L5 5.8Z" fill="#d0d0d0"/></svg></div><div class="t" style="left:209.5px;top:624.69px;font-size:4.6px;line-height:5.52px;color:#b2b2b2;font-weight:700;letter-spacing:0.05px">Render</div><div style="position:absolute;left:269.4px;top:622.85px;width:7.8px;height:7.8px;"><svg viewBox="0 0 10 10" width="100%" height="100%"><circle cx="5" cy="5" r="4.0" fill="none" stroke="#a85050" stroke-width="0.85" opacity="0.9"/><path d="M5 3.6 V6.4 M3.6 5 H6.4" stroke="#a85050" stroke-width="1.1"/></svg></div><div style="position:absolute;left:199.9px;top:631.7px;width:79.7px;height:10.7px;background:#212121;border-bottom:0.9px solid #181818;box-sizing:border-box"></div><div style="position:absolute;left:200.1px;top:631.7px;width:1.2px;height:9.8px;background:#563030"></div><div style="position:absolute;left:203.9px;top:634.85px;width:5.4px;height:6px;"><svg viewBox="0 0 10 10" width="100%" height="100%"><path d="M1 1 L5 3 L9 1 L7 5 L9 9 L5 7 L1 9 L3 5Z" fill="#e6e6e6"/></svg></div><div class="t" style="left:212.5px;top:635.03px;font-size:4.7px;line-height:5.64px;color:#9a9a9a;font-weight:400;letter-spacing:0.05px">Sprite Renderer</div><div style="position:absolute;left:270.5px;top:633.95px;width:6.6px;height:6.6px;background:#0e0e0e;border-radius:0.6px"><svg viewBox="0 0 10 10" width="100%" height="100%"><path d="M2 5.2 L4.1 7.3 L8.3 2.6" fill="none" stroke="#1b7ae0" stroke-width="1.7"/></svg></div><div style="position:absolute;left:318.5px;top:424.5px;width:78.8px;height:250.7px;background:#151515;border-radius:2.5px;box-shadow:0 1px 2px rgba(0,0,0,0.5)"></div><div style="position:absolute;left:319px;top:424.5px;width:77.8px;height:13.2px;border-radius:2.5px 2.5px 0 0;background:linear-gradient(100deg,#88481b 0%,#824519 38%,#5e3d27 60%,#3e3935 80%,#373737 100%)"></div><div style="position:absolute;left:319px;top:424.5px;width:77.8px;height:13.2px;border-radius:2.5px 2.5px 0 0;background:linear-gradient(180deg,rgba(255,190,130,0.16) 0%,rgba(0,0,0,0.18) 40%,rgba(0,0,0,0.12) 60%,rgba(0,0,0,0) 100%)"></div><div style="position:absolute;left:319px;top:424.5px;width:77.8px;height:1px;border-radius:2.5px 2.5px 0 0;background:linear-gradient(90deg,rgba(255,200,150,0.22),rgba(255,255,255,0.12))"></div><div style="position:absolute;left:324px;top:429px;width:4.8px;height:3.1px;"><svg viewBox="0 0 10 6" width="100%" height="100%"><path d="M0.5 0.5 H9.5 L5 5.8Z" fill="#e2e2e2"/></svg></div><div style="position:absolute;left:334.6px;top:427.4px;width:7.4px;height:7.4px;background:#141414;border-radius:0.8px"><svg viewBox="0 0 10 10" width="100%" height="100%"><path d="M2 5.2 L4.1 7.3 L8.3 2.6" fill="none" stroke="#1b7ae0" stroke-width="1.7"/></svg></div><div class="t" style="left:345.4px;top:427.88px;font-size:6.2px;line-height:7.44px;color:#cdc9c5;font-weight:700;letter-spacing:0.15px">Sparks001</div><div style="position:absolute;left:319px;top:437.7px;width:77.8px;height:20.9px;background:rgba(24,24,24,0.84)"></div><div style="position:absolute;left:323px;top:444.7px;width:4.6px;height:7.4px;"><svg viewBox="0 0 6 9" width="100%" height="100%"><ellipse cx="3" cy="1.4" rx="0.9" ry="1.0" fill="#bdbdbd"/><path d="M1.6 2.6 Q3 1.8 4.4 2.6 L4.3 5.6 Q3 6.4 1.7 5.6Z" fill="#d8d8d8"/><path d="M0.2 8.8 Q0.6 6.2 3 6.1 Q5.4 6.2 5.8 8.8Z" fill="#a0a0a0"/></svg></div><div style="position:absolute;left:329.6px;top:440.2px;width:14.6px;height:16.8px;background:#202020"></div><div style="position:absolute;left:330.8px;top:442.4px;width:10.6px;height:11.2px;background:#060606;border-bottom:1.6px solid #169c16;box-sizing:border-box"></div><div style="position:absolute;left:335.5px;top:447.3px;width:1.2px;height:0.7px;background:#bbbbbb"></div><div style="position:absolute;left:319px;top:458.6px;width:77.8px;height:10.82px;background:#2a2a2a;border-bottom:0.9px solid #1c1c1c;box-sizing:border-box"></div><div style="position:absolute;left:320px;top:460.2px;width:6px;height:6px;"><svg viewBox="0 0 10 10" width="100%" height="100%"><path d="M1.6 8.4 L8.4 1.6" stroke="#b04a2a" stroke-width="2.6"/><path d="M0.8 9.2 L2 8" stroke="#d07050" stroke-width="1.2"/></svg></div><div class="t" style="left:327.9px;top:462.06px;font-size:4.75px;line-height:5.7px;color:#aeaeae;font-weight:400;letter-spacing:0.1px">Properties</div><div class="t" style="left:353.2px;top:462.99px;font-size:3.7px;line-height:4.44px;color:#f6e45a;font-weight:700;letter-spacing:-0.15px">CPU</div><div style="position:absolute;left:352.9px;top:460.6px;width:7.6px;height:0.7px;background:#e0d050"></div><div style="position:absolute;left:352.9px;top:466.1px;width:7.6px;height:0.7px;background:#e0d050"></div><div style="position:absolute;left:354.4px;top:459.8px;width:0.6px;height:8px;background:#d8c850"></div><div style="position:absolute;left:358.4px;top:459.8px;width:0.6px;height:8px;background:#d8c850"></div><div style="position:absolute;left:373.2px;top:459.6px;width:22.4px;height:8.2px;background:#1f1f1f;border-radius:1px"></div><div style="position:absolute;left:374.2px;top:460.8px;width:5.6px;height:5.6px;"><svg viewBox="0 0 10 10" width="100%" height="100%"><path d="M5 0.8 V9.2 M0.8 5 H9.2" stroke="#f07018" stroke-width="2.2"/></svg></div><div class="t" style="left:380.7px;top:462.06px;font-size:4.75px;line-height:5.7px;color:#b4b4b4;font-weight:400;letter-spacing:0.1px">Stage</div><div style="position:absolute;left:319px;top:469.42px;width:77.8px;height:10.82px;background:#2d2d2d;border-bottom:0.9px solid #1c1c1c;box-sizing:border-box"></div><div style="position:absolute;left:319.8px;top:471.62px;width:6.6px;height:5.6px;"><svg viewBox="0 0 10 9" width="100%" height="100%"><path d="M0 0.8 H10" stroke="#a05030" stroke-width="0.8"/><path d="M0 4 H2.2 M3 4 H10 M0 7.3 H2.2 M3 7.3 H10" stroke="#b85a36" stroke-width="2"/></svg></div><div class="t" style="left:328.2px;top:472.97px;font-size:4.6px;line-height:5.52px;color:#b0b0b0;font-weight:700;letter-spacing:0.05px">Emitter Summary</div><div style="position:absolute;left:319px;top:480.24px;width:77.8px;height:10.32px;background:#2b2b2b;border-bottom:0.9px solid #1c1c1c;box-sizing:border-box"></div><div class="t" style="left:328.6px;top:483.54px;font-size:4.6px;line-height:5.52px;color:#b2b2b2;font-weight:700;letter-spacing:0.05px">Emitter Spawn</div><div style="position:absolute;left:386.6px;top:481.7px;width:7.8px;height:7.8px;"><svg viewBox="0 0 10 10" width="100%" height="100%"><circle cx="5" cy="5" r="4.0" fill="none" stroke="#a0603f" stroke-width="0.85" opacity="0.9"/><path d="M5 3.6 V6.4 M3.6 5 H6.4" stroke="#a0603f" stroke-width="1.1"/></svg></div><div style="position:absolute;left:319px;top:490.56px;width:77.8px;height:10.32px;background:#2b2b2b;border-bottom:0.9px solid #1c1c1c;box-sizing:border-box"></div><div style="position:absolute;left:321.6px;top:493.42px;width:4.6px;height:3px;"><svg viewBox="0 0 10 6" width="100%" height="100%"><path d="M0.5 0.5 H9.5 L5 5.8Z" fill="#d0d0d0"/></svg></div><div class="t" style="left:328.6px;top:493.86px;font-size:4.6px;line-height:5.52px;color:#b2b2b2;font-weight:700;letter-spacing:0.05px">Emitter Update</div><div style="position:absolute;left:386.6px;top:492.02px;width:7.8px;height:7.8px;"><svg viewBox="0 0 10 10" width="100%" height="100%"><circle cx="5" cy="5" r="4.0" fill="none" stroke="#a0603f" stroke-width="0.85" opacity="0.9"/><path d="M5 3.6 V6.4 M3.6 5 H6.4" stroke="#a0603f" stroke-width="1.1"/></svg></div><div style="position:absolute;left:319px;top:500.88px;width:77.8px;height:10.02px;background:#212121;border-bottom:0.9px solid #181818;box-sizing:border-box"></div><div style="position:absolute;left:319.2px;top:500.88px;width:1.2px;height:9.12px;background:#553724"></div><div class="t" style="left:323.2px;top:503.87px;font-size:4.7px;line-height:5.64px;color:#9a9a9a;font-weight:400;letter-spacing:0.05px">Emitter State</div><div style="position:absolute;left:353.4px;top:503.29px;width:9px;height:6.6px;background:#9c5c0e;border-radius:1.8px"></div><div class="t" style="left:354.6px;top:503.89px;font-size:4.5px;line-height:5.4px;color:#f0dcc0;font-weight:700;transform:scaleX(0.85);transform-origin:0 50%">Self</div><div style="position:absolute;left:364.2px;top:502.79px;width:11.2px;height:7px;background:#0a0a0a;border-radius:1.2px"></div><div class="t" style="left:365px;top:503.49px;font-size:4.5px;line-height:5.4px;color:#e8e8e8;font-weight:400;transform:scaleX(0.82);transform-origin:0 50%">Once</div><div style="position:absolute;left:387.7px;top:502.79px;width:6.6px;height:6.6px;background:#0e0e0e;border-radius:0.6px"><svg viewBox="0 0 10 10" width="100%" height="100%"><path d="M2 5.2 L4.1 7.3 L8.3 2.6" fill="none" stroke="#1b7ae0" stroke-width="1.7"/></svg></div><div style="position:absolute;left:319px;top:510.9px;width:77.8px;height:10.02px;background:#212121;border-bottom:0.9px solid #181818;box-sizing:border-box"></div><div style="position:absolute;left:319.2px;top:510.9px;width:1.2px;height:9.12px;background:#553724"></div><div class="t" style="left:323.2px;top:513.89px;font-size:4.7px;line-height:5.64px;color:#9a9a9a;font-weight:400;letter-spacing:0.05px">Spawn Burst Instantaneous</div><div style="position:absolute;left:387.7px;top:512.81px;width:6.6px;height:6.6px;background:#0e0e0e;border-radius:0.6px"><svg viewBox="0 0 10 10" width="100%" height="100%"><path d="M2 5.2 L4.1 7.3 L8.3 2.6" fill="none" stroke="#1b7ae0" stroke-width="1.7"/></svg></div><div style="position:absolute;left:319px;top:520.92px;width:77.8px;height:10.32px;background:#2b2b2b;border-bottom:0.9px solid #1c1c1c;box-sizing:border-box"></div><div style="position:absolute;left:321.6px;top:523.78px;width:4.6px;height:3px;"><svg viewBox="0 0 10 6" width="100%" height="100%"><path d="M0.5 0.5 H9.5 L5 5.8Z" fill="#d0d0d0"/></svg></div><div class="t" style="left:328.6px;top:524.22px;font-size:4.6px;line-height:5.52px;color:#b2b2b2;font-weight:700;letter-spacing:0.05px">Particle Spawn</div><div style="position:absolute;left:386.6px;top:522.38px;width:7.8px;height:7.8px;"><svg viewBox="0 0 10 10" width="100%" height="100%"><circle cx="5" cy="5" r="4.0" fill="none" stroke="#6a9a42" stroke-width="0.85" opacity="0.9"/><path d="M5 3.6 V6.4 M3.6 5 H6.4" stroke="#6a9a42" stroke-width="1.1"/></svg></div><div style="position:absolute;left:319px;top:531.24px;width:77.8px;height:10.02px;background:#212121;border-bottom:0.9px solid #181818;box-sizing:border-box"></div><div style="position:absolute;left:319.2px;top:531.24px;width:1.2px;height:9.12px;background:#374c26"></div><div class="t" style="left:323.2px;top:534.22px;font-size:4.7px;line-height:5.64px;color:#9a9a9a;font-weight:400;letter-spacing:0.05px">Initialize Particle</div><div style="position:absolute;left:387.7px;top:533.14px;width:6.6px;height:6.6px;background:#0e0e0e;border-radius:0.6px"><svg viewBox="0 0 10 10" width="100%" height="100%"><path d="M2 5.2 L4.1 7.3 L8.3 2.6" fill="none" stroke="#1b7ae0" stroke-width="1.7"/></svg></div><div style="position:absolute;left:319px;top:541.25px;width:77.8px;height:10.02px;background:#212121;border-bottom:0.9px solid #181818;box-sizing:border-box"></div><div style="position:absolute;left:319.2px;top:541.25px;width:1.2px;height:9.12px;background:#374c26"></div><div class="t" style="left:323.2px;top:544.24px;font-size:4.7px;line-height:5.64px;color:#9a9a9a;font-weight:400;letter-spacing:0.05px">Sphere Location</div><div style="position:absolute;left:376.4px;top:545.06px;width:6px;height:4px;"><svg viewBox="0 0 10 7" width="100%" height="100%"><path d="M0.6 3.5 L5 0.6 L9.4 3.5 L5 6.4Z" fill="none" stroke="#9a9a9a" stroke-width="0.9"/><circle cx="5" cy="3.5" r="1.2" fill="#9a9a9a"/></svg></div><div style="position:absolute;left:387.7px;top:543.16px;width:6.6px;height:6.6px;background:#0e0e0e;border-radius:0.6px"><svg viewBox="0 0 10 10" width="100%" height="100%"><path d="M2 5.2 L4.1 7.3 L8.3 2.6" fill="none" stroke="#1b7ae0" stroke-width="1.7"/></svg></div><div style="position:absolute;left:319px;top:551.27px;width:77.8px;height:10.02px;background:#212121;border-bottom:0.9px solid #181818;box-sizing:border-box"></div><div style="position:absolute;left:319.2px;top:551.27px;width:1.2px;height:9.12px;background:#374c26"></div><div class="t" style="left:323.2px;top:554.26px;font-size:4.7px;line-height:5.64px;color:#9a9a9a;font-weight:400;letter-spacing:0.05px">Add Velocity from Point</div><div style="position:absolute;left:387.7px;top:553.18px;width:6.6px;height:6.6px;background:#0e0e0e;border-radius:0.6px"><svg viewBox="0 0 10 10" width="100%" height="100%"><path d="M2 5.2 L4.1 7.3 L8.3 2.6" fill="none" stroke="#1b7ae0" stroke-width="1.7"/></svg></div><div style="position:absolute;left:319px;top:561.29px;width:77.8px;height:10.02px;background:#212121;border-bottom:0.9px solid #181818;box-sizing:border-box"></div><div style="position:absolute;left:319.2px;top:561.29px;width:1.2px;height:9.12px;background:#374c26"></div><div class="t" style="left:323.2px;top:564.28px;font-size:4.7px;line-height:5.64px;color:#9a9a9a;font-weight:400;letter-spacing:0.05px">Add Velocity</div><div style="position:absolute;left:387.7px;top:563.2px;width:6.6px;height:6.6px;background:#0e0e0e;border-radius:0.6px"><svg viewBox="0 0 10 10" width="100%" height="100%"><path d="M2 5.2 L4.1 7.3 L8.3 2.6" fill="none" stroke="#1b7ae0" stroke-width="1.7"/></svg></div><div style="position:absolute;left:319px;top:571.31px;width:77.8px;height:10.32px;background:#2b2b2b;border-bottom:0.9px solid #1c1c1c;box-sizing:border-box"></div><div style="position:absolute;left:321.6px;top:574.17px;width:4.6px;height:3px;"><svg viewBox="0 0 10 6" width="100%" height="100%"><path d="M0.5 0.5 H9.5 L5 5.8Z" fill="#d0d0d0"/></svg></div><div class="t" style="left:328.6px;top:574.61px;font-size:4.6px;line-height:5.52px;color:#b2b2b2;font-weight:700;letter-spacing:0.05px">Particle Update</div><div style="position:absolute;left:386.6px;top:572.77px;width:7.8px;height:7.8px;"><svg viewBox="0 0 10 10" width="100%" height="100%"><circle cx="5" cy="5" r="4.0" fill="none" stroke="#6a9a42" stroke-width="0.85" opacity="0.9"/><path d="M5 3.6 V6.4 M3.6 5 H6.4" stroke="#6a9a42" stroke-width="1.1"/></svg></div><div style="position:absolute;left:319px;top:581.63px;width:77.8px;height:10.02px;background:#212121;border-bottom:0.9px solid #181818;box-sizing:border-box"></div><div style="position:absolute;left:319.2px;top:581.63px;width:1.2px;height:9.12px;background:#374c26"></div><div class="t" style="left:323.2px;top:584.62px;font-size:4.7px;line-height:5.64px;color:#9a9a9a;font-weight:400;letter-spacing:0.05px">Particle State</div><div style="position:absolute;left:387.7px;top:583.54px;width:6.6px;height:6.6px;background:#0e0e0e;border-radius:0.6px"><svg viewBox="0 0 10 10" width="100%" height="100%"><path d="M2 5.2 L4.1 7.3 L8.3 2.6" fill="none" stroke="#1b7ae0" stroke-width="1.7"/></svg></div><div style="position:absolute;left:319px;top:591.65px;width:77.8px;height:10.02px;background:#212121;border-bottom:0.9px solid #181818;box-sizing:border-box"></div><div style="position:absolute;left:319.2px;top:591.65px;width:1.2px;height:9.12px;background:#374c26"></div><div class="t" style="left:323.2px;top:594.64px;font-size:4.7px;line-height:5.64px;color:#9a9a9a;font-weight:400;letter-spacing:0.05px">Scale Color</div><div style="position:absolute;left:387.7px;top:593.56px;width:6.6px;height:6.6px;background:#0e0e0e;border-radius:0.6px"><svg viewBox="0 0 10 10" width="100%" height="100%"><path d="M2 5.2 L4.1 7.3 L8.3 2.6" fill="none" stroke="#1b7ae0" stroke-width="1.7"/></svg></div><div style="position:absolute;left:319px;top:601.67px;width:77.8px;height:10.02px;background:#212121;border-bottom:0.9px solid #181818;box-sizing:border-box"></div><div style="position:absolute;left:319.2px;top:601.67px;width:1.2px;height:9.12px;background:#374c26"></div><div class="t" style="left:323.2px;top:604.66px;font-size:4.7px;line-height:5.64px;color:#9a9a9a;font-weight:400;letter-spacing:0.05px">Curl Noise Force</div><div style="position:absolute;left:387.7px;top:603.58px;width:6.6px;height:6.6px;background:#0e0e0e;border-radius:0.6px"><svg viewBox="0 0 10 10" width="100%" height="100%"><path d="M2 5.2 L4.1 7.3 L8.3 2.6" fill="none" stroke="#1b7ae0" stroke-width="1.7"/></svg></div><div style="position:absolute;left:319px;top:611.69px;width:77.8px;height:10.02px;background:#212121;border-bottom:0.9px solid #181818;box-sizing:border-box"></div><div style="position:absolute;left:319.2px;top:611.69px;width:1.2px;height:9.12px;background:#374c26"></div><div class="t" style="left:323.2px;top:614.68px;font-size:4.7px;line-height:5.64px;color:#9a9a9a;font-weight:400;letter-spacing:0.05px">Gravity Force</div><div style="position:absolute;left:387.7px;top:613.6px;width:6.6px;height:6.6px;background:#0e0e0e;border-radius:0.6px"><svg viewBox="0 0 10 10" width="100%" height="100%"><path d="M2 5.2 L4.1 7.3 L8.3 2.6" fill="none" stroke="#1b7ae0" stroke-width="1.7"/></svg></div><div style="position:absolute;left:319px;top:621.7px;width:77.8px;height:10.02px;background:#212121;border-bottom:0.9px solid #181818;box-sizing:border-box"></div><div style="position:absolute;left:319.2px;top:621.7px;width:1.2px;height:9.12px;background:#374c26"></div><div class="t" style="left:323.2px;top:624.69px;font-size:4.7px;line-height:5.64px;color:#9a9a9a;font-weight:400;letter-spacing:0.05px">Drag</div><div style="position:absolute;left:387.7px;top:623.61px;width:6.6px;height:6.6px;background:#0e0e0e;border-radius:0.6px"><svg viewBox="0 0 10 10" width="100%" height="100%"><path d="M2 5.2 L4.1 7.3 L8.3 2.6" fill="none" stroke="#1b7ae0" stroke-width="1.7"/></svg></div><div style="position:absolute;left:319px;top:631.72px;width:77.8px;height:10.02px;background:#212121;border-bottom:0.9px solid #181818;box-sizing:border-box"></div><div style="position:absolute;left:319.2px;top:631.72px;width:1.2px;height:9.12px;background:#374c26"></div><div class="t" style="left:323.2px;top:634.71px;font-size:4.7px;line-height:5.64px;color:#9a9a9a;font-weight:400;letter-spacing:0.05px">Solve Forces and Velocity</div><div style="position:absolute;left:387.7px;top:633.63px;width:6.6px;height:6.6px;background:#0e0e0e;border-radius:0.6px"><svg viewBox="0 0 10 10" width="100%" height="100%"><path d="M2 5.2 L4.1 7.3 L8.3 2.6" fill="none" stroke="#1b7ae0" stroke-width="1.7"/></svg></div><div style="position:absolute;left:319px;top:641.74px;width:77.8px;height:10.02px;background:#212121;border-bottom:0.9px solid #181818;box-sizing:border-box"></div><div style="position:absolute;left:319.2px;top:641.74px;width:1.2px;height:9.12px;background:#374c26"></div><div class="t" style="left:323.2px;top:644.73px;font-size:4.7px;line-height:5.64px;color:#9a9a9a;font-weight:400;letter-spacing:0.05px">Scale Sprite Size</div><div style="position:absolute;left:387.7px;top:643.65px;width:6.6px;height:6.6px;background:#0e0e0e;border-radius:0.6px"><svg viewBox="0 0 10 10" width="100%" height="100%"><path d="M2 5.2 L4.1 7.3 L8.3 2.6" fill="none" stroke="#1b7ae0" stroke-width="1.7"/></svg></div><div style="position:absolute;left:319px;top:651.76px;width:77.8px;height:10.32px;background:#2b2b2b;border-bottom:0.9px solid #1c1c1c;box-sizing:border-box"></div><div style="position:absolute;left:321.6px;top:654.62px;width:4.6px;height:3px;"><svg viewBox="0 0 10 6" width="100%" height="100%"><path d="M0.5 0.5 H9.5 L5 5.8Z" fill="#d0d0d0"/></svg></div><div class="t" style="left:328.6px;top:655.06px;font-size:4.6px;line-height:5.52px;color:#b2b2b2;font-weight:700;letter-spacing:0.05px">Render</div><div style="position:absolute;left:386.6px;top:653.22px;width:7.8px;height:7.8px;"><svg viewBox="0 0 10 10" width="100%" height="100%"><circle cx="5" cy="5" r="4.0" fill="none" stroke="#a85050" stroke-width="0.85" opacity="0.9"/><path d="M5 3.6 V6.4 M3.6 5 H6.4" stroke="#a85050" stroke-width="1.1"/></svg></div><div style="position:absolute;left:319px;top:662.08px;width:77.8px;height:10.72px;background:#212121;border-bottom:0.9px solid #181818;box-sizing:border-box"></div><div style="position:absolute;left:319.2px;top:662.08px;width:1.2px;height:9.82px;background:#563030"></div><div style="position:absolute;left:322.2px;top:665.04px;width:7px;height:5px;"><svg viewBox="0 0 14 10" width="100%" height="100%"><ellipse cx="7" cy="5" rx="5.2" ry="2.6" fill="#ececec"/><path d="M2 1.2 L4 3 M12 1.2 L10 3 M2 8.8 L4 7 M12 8.8 L10 7 M0.3 5 H2" stroke="#bdbdbd" stroke-width="0.8"/></svg></div><div class="t" style="left:331.6px;top:665.42px;font-size:4.7px;line-height:5.64px;color:#9a9a9a;font-weight:400;letter-spacing:0.05px">Sprite Renderer</div><div style="position:absolute;left:387.7px;top:664.34px;width:6.6px;height:6.6px;background:#0e0e0e;border-radius:0.6px"><svg viewBox="0 0 10 10" width="100%" height="100%"><path d="M2 5.2 L4.1 7.3 L8.3 2.6" fill="none" stroke="#1b7ae0" stroke-width="1.7"/></svg></div><div style="position:absolute;left:430px;top:424.5px;width:75.1px;height:250.7px;background:#151515;border-radius:2.5px;box-shadow:0 1px 2px rgba(0,0,0,0.5)"></div><div style="position:absolute;left:430.5px;top:424.5px;width:74.1px;height:13.2px;border-radius:2.5px 2.5px 0 0;background:linear-gradient(100deg,#88481b 0%,#824519 38%,#5e3d27 60%,#3e3935 80%,#373737 100%)"></div><div style="position:absolute;left:430.5px;top:424.5px;width:74.1px;height:13.2px;border-radius:2.5px 2.5px 0 0;background:linear-gradient(180deg,rgba(255,190,130,0.16) 0%,rgba(0,0,0,0.18) 40%,rgba(0,0,0,0.12) 60%,rgba(0,0,0,0) 100%)"></div><div style="position:absolute;left:430.5px;top:424.5px;width:74.1px;height:1px;border-radius:2.5px 2.5px 0 0;background:linear-gradient(90deg,rgba(255,200,150,0.22),rgba(255,255,255,0.12))"></div><div style="position:absolute;left:435.5px;top:429px;width:4.8px;height:3.1px;"><svg viewBox="0 0 10 6" width="100%" height="100%"><path d="M0.5 0.5 H9.5 L5 5.8Z" fill="#e2e2e2"/></svg></div><div style="position:absolute;left:446.1px;top:427.4px;width:7.4px;height:7.4px;background:#141414;border-radius:0.8px"><svg viewBox="0 0 10 10" width="100%" height="100%"><path d="M2 5.2 L4.1 7.3 L8.3 2.6" fill="none" stroke="#1b7ae0" stroke-width="1.7"/></svg></div><div class="t" style="left:456.9px;top:427.88px;font-size:6.2px;line-height:7.44px;color:#cdc9c5;font-weight:700;letter-spacing:0.15px">Sparks</div><div style="position:absolute;left:430.5px;top:437.7px;width:74.1px;height:20.9px;background:rgba(24,24,24,0.84)"></div><div style="position:absolute;left:434.5px;top:444.7px;width:4.6px;height:7.4px;"><svg viewBox="0 0 6 9" width="100%" height="100%"><ellipse cx="3" cy="1.4" rx="0.9" ry="1.0" fill="#bdbdbd"/><path d="M1.6 2.6 Q3 1.8 4.4 2.6 L4.3 5.6 Q3 6.4 1.7 5.6Z" fill="#d8d8d8"/><path d="M0.2 8.8 Q0.6 6.2 3 6.1 Q5.4 6.2 5.8 8.8Z" fill="#a0a0a0"/></svg></div><div style="position:absolute;left:441.1px;top:440.2px;width:14.6px;height:16.8px;background:#202020"></div><div style="position:absolute;left:442.3px;top:442.4px;width:10.6px;height:11.2px;background:#060606;border-bottom:1.6px solid #169c16;box-sizing:border-box"></div><div style="position:absolute;left:447px;top:447.3px;width:1.2px;height:0.7px;background:#bbbbbb"></div><div style="position:absolute;left:430.5px;top:458.6px;width:74.1px;height:10.82px;background:#2a2a2a;border-bottom:0.9px solid #1c1c1c;box-sizing:border-box"></div><div style="position:absolute;left:431.5px;top:460.2px;width:6px;height:6px;"><svg viewBox="0 0 10 10" width="100%" height="100%"><path d="M1.6 8.4 L8.4 1.6" stroke="#b04a2a" stroke-width="2.6"/><path d="M0.8 9.2 L2 8" stroke="#d07050" stroke-width="1.2"/></svg></div><div class="t" style="left:439.4px;top:462.06px;font-size:4.75px;line-height:5.7px;color:#aeaeae;font-weight:400;letter-spacing:0.1px">Properties</div><div class="t" style="left:464.7px;top:462.99px;font-size:3.7px;line-height:4.44px;color:#f6e45a;font-weight:700;letter-spacing:-0.15px">CPU</div><div style="position:absolute;left:464.4px;top:460.6px;width:7.6px;height:0.7px;background:#e0d050"></div><div style="position:absolute;left:464.4px;top:466.1px;width:7.6px;height:0.7px;background:#e0d050"></div><div style="position:absolute;left:465.9px;top:459.8px;width:0.6px;height:8px;background:#d8c850"></div><div style="position:absolute;left:469.9px;top:459.8px;width:0.6px;height:8px;background:#d8c850"></div><div style="position:absolute;left:481px;top:459.6px;width:22.4px;height:8.2px;background:#1f1f1f;border-radius:1px"></div><div style="position:absolute;left:482px;top:460.8px;width:5.6px;height:5.6px;"><svg viewBox="0 0 10 10" width="100%" height="100%"><path d="M5 0.8 V9.2 M0.8 5 H9.2" stroke="#f07018" stroke-width="2.2"/></svg></div><div class="t" style="left:488.5px;top:462.06px;font-size:4.75px;line-height:5.7px;color:#b4b4b4;font-weight:400;letter-spacing:0.1px">Stage</div><div style="position:absolute;left:430.5px;top:469.42px;width:74.1px;height:10.82px;background:#2d2d2d;border-bottom:0.9px solid #1c1c1c;box-sizing:border-box"></div><div style="position:absolute;left:431.3px;top:471.62px;width:6.6px;height:5.6px;"><svg viewBox="0 0 10 9" width="100%" height="100%"><path d="M0 0.8 H10" stroke="#a05030" stroke-width="0.8"/><path d="M0 4 H2.2 M3 4 H10 M0 7.3 H2.2 M3 7.3 H10" stroke="#b85a36" stroke-width="2"/></svg></div><div class="t" style="left:439.7px;top:472.97px;font-size:4.6px;line-height:5.52px;color:#b0b0b0;font-weight:700;letter-spacing:0.05px">Emitter Summary</div><div style="position:absolute;left:430.5px;top:480.24px;width:74.1px;height:10.32px;background:#2b2b2b;border-bottom:0.9px solid #1c1c1c;box-sizing:border-box"></div><div class="t" style="left:440.1px;top:483.54px;font-size:4.6px;line-height:5.52px;color:#b2b2b2;font-weight:700;letter-spacing:0.05px">Emitter Spawn</div><div style="position:absolute;left:494.4px;top:481.7px;width:7.8px;height:7.8px;"><svg viewBox="0 0 10 10" width="100%" height="100%"><circle cx="5" cy="5" r="4.0" fill="none" stroke="#a0603f" stroke-width="0.85" opacity="0.9"/><path d="M5 3.6 V6.4 M3.6 5 H6.4" stroke="#a0603f" stroke-width="1.1"/></svg></div><div style="position:absolute;left:430.5px;top:490.56px;width:74.1px;height:10.32px;background:#2b2b2b;border-bottom:0.9px solid #1c1c1c;box-sizing:border-box"></div><div style="position:absolute;left:433.1px;top:493.42px;width:4.6px;height:3px;"><svg viewBox="0 0 10 6" width="100%" height="100%"><path d="M0.5 0.5 H9.5 L5 5.8Z" fill="#d0d0d0"/></svg></div><div class="t" style="left:440.1px;top:493.86px;font-size:4.6px;line-height:5.52px;color:#b2b2b2;font-weight:700;letter-spacing:0.05px">Emitter Update</div><div style="position:absolute;left:494.4px;top:492.02px;width:7.8px;height:7.8px;"><svg viewBox="0 0 10 10" width="100%" height="100%"><circle cx="5" cy="5" r="4.0" fill="none" stroke="#a0603f" stroke-width="0.85" opacity="0.9"/><path d="M5 3.6 V6.4 M3.6 5 H6.4" stroke="#a0603f" stroke-width="1.1"/></svg></div><div style="position:absolute;left:430.5px;top:500.88px;width:74.1px;height:10.02px;background:#212121;border-bottom:0.9px solid #181818;box-sizing:border-box"></div><div style="position:absolute;left:430.7px;top:500.88px;width:1.2px;height:9.12px;background:#553724"></div><div class="t" style="left:434.7px;top:503.87px;font-size:4.7px;line-height:5.64px;color:#9a9a9a;font-weight:400;letter-spacing:0.05px">Emitter State</div><div style="position:absolute;left:464.9px;top:503.29px;width:9px;height:6.6px;background:#9c5c0e;border-radius:1.8px"></div><div class="t" style="left:466.1px;top:503.89px;font-size:4.5px;line-height:5.4px;color:#f0dcc0;font-weight:700;transform:scaleX(0.85);transform-origin:0 50%">Self</div><div style="position:absolute;left:475.7px;top:502.79px;width:11.2px;height:7px;background:#0a0a0a;border-radius:1.2px"></div><div class="t" style="left:476.5px;top:503.49px;font-size:4.5px;line-height:5.4px;color:#e8e8e8;font-weight:400;transform:scaleX(0.82);transform-origin:0 50%">Once</div><div style="position:absolute;left:495.5px;top:502.79px;width:6.6px;height:6.6px;background:#0e0e0e;border-radius:0.6px"><svg viewBox="0 0 10 10" width="100%" height="100%"><path d="M2 5.2 L4.1 7.3 L8.3 2.6" fill="none" stroke="#1b7ae0" stroke-width="1.7"/></svg></div><div style="position:absolute;left:430.5px;top:510.9px;width:74.1px;height:10.02px;background:#212121;border-bottom:0.9px solid #181818;box-sizing:border-box"></div><div style="position:absolute;left:430.7px;top:510.9px;width:1.2px;height:9.12px;background:#553724"></div><div class="t" style="left:434.7px;top:513.89px;font-size:4.7px;line-height:5.64px;color:#9a9a9a;font-weight:400;letter-spacing:0.05px">Spawn Burst Instantaneous</div><div style="position:absolute;left:495.5px;top:512.81px;width:6.6px;height:6.6px;background:#0e0e0e;border-radius:0.6px"><svg viewBox="0 0 10 10" width="100%" height="100%"><path d="M2 5.2 L4.1 7.3 L8.3 2.6" fill="none" stroke="#1b7ae0" stroke-width="1.7"/></svg></div><div style="position:absolute;left:430.5px;top:520.92px;width:74.1px;height:10.32px;background:#2b2b2b;border-bottom:0.9px solid #1c1c1c;box-sizing:border-box"></div><div style="position:absolute;left:433.1px;top:523.78px;width:4.6px;height:3px;"><svg viewBox="0 0 10 6" width="100%" height="100%"><path d="M0.5 0.5 H9.5 L5 5.8Z" fill="#d0d0d0"/></svg></div><div class="t" style="left:440.1px;top:524.22px;font-size:4.6px;line-height:5.52px;color:#b2b2b2;font-weight:700;letter-spacing:0.05px">Particle Spawn</div><div style="position:absolute;left:494.4px;top:522.38px;width:7.8px;height:7.8px;"><svg viewBox="0 0 10 10" width="100%" height="100%"><circle cx="5" cy="5" r="4.0" fill="none" stroke="#6a9a42" stroke-width="0.85" opacity="0.9"/><path d="M5 3.6 V6.4 M3.6 5 H6.4" stroke="#6a9a42" stroke-width="1.1"/></svg></div><div style="position:absolute;left:430.5px;top:531.24px;width:74.1px;height:10.02px;background:#212121;border-bottom:0.9px solid #181818;box-sizing:border-box"></div><div style="position:absolute;left:430.7px;top:531.24px;width:1.2px;height:9.12px;background:#374c26"></div><div class="t" style="left:434.7px;top:534.22px;font-size:4.7px;line-height:5.64px;color:#9a9a9a;font-weight:400;letter-spacing:0.05px">Initialize Particle</div><div style="position:absolute;left:495.5px;top:533.14px;width:6.6px;height:6.6px;background:#0e0e0e;border-radius:0.6px"><svg viewBox="0 0 10 10" width="100%" height="100%"><path d="M2 5.2 L4.1 7.3 L8.3 2.6" fill="none" stroke="#1b7ae0" stroke-width="1.7"/></svg></div><div style="position:absolute;left:430.5px;top:541.25px;width:74.1px;height:10.02px;background:#212121;border-bottom:0.9px solid #181818;box-sizing:border-box"></div><div style="position:absolute;left:430.7px;top:541.25px;width:1.2px;height:9.12px;background:#374c26"></div><div class="t" style="left:434.7px;top:544.24px;font-size:4.7px;line-height:5.64px;color:#9a9a9a;font-weight:400;letter-spacing:0.05px">Sphere Location</div><div style="position:absolute;left:484.2px;top:545.06px;width:6px;height:4px;"><svg viewBox="0 0 10 7" width="100%" height="100%"><path d="M0.6 3.5 L5 0.6 L9.4 3.5 L5 6.4Z" fill="none" stroke="#9a9a9a" stroke-width="0.9"/><circle cx="5" cy="3.5" r="1.2" fill="#9a9a9a"/></svg></div><div style="position:absolute;left:495.5px;top:543.16px;width:6.6px;height:6.6px;background:#0e0e0e;border-radius:0.6px"><svg viewBox="0 0 10 10" width="100%" height="100%"><path d="M2 5.2 L4.1 7.3 L8.3 2.6" fill="none" stroke="#1b7ae0" stroke-width="1.7"/></svg></div><div style="position:absolute;left:430.5px;top:551.27px;width:74.1px;height:10.02px;background:#212121;border-bottom:0.9px solid #181818;box-sizing:border-box"></div><div style="position:absolute;left:430.7px;top:551.27px;width:1.2px;height:9.12px;background:#374c26"></div><div class="t" style="left:434.7px;top:554.26px;font-size:4.7px;line-height:5.64px;color:#9a9a9a;font-weight:400;letter-spacing:0.05px">Add Velocity from Point</div><div style="position:absolute;left:495.5px;top:553.18px;width:6.6px;height:6.6px;background:#0e0e0e;border-radius:0.6px"><svg viewBox="0 0 10 10" width="100%" height="100%"><path d="M2 5.2 L4.1 7.3 L8.3 2.6" fill="none" stroke="#1b7ae0" stroke-width="1.7"/></svg></div><div style="position:absolute;left:430.5px;top:561.29px;width:74.1px;height:10.02px;background:#212121;border-bottom:0.9px solid #181818;box-sizing:border-box"></div><div style="position:absolute;left:430.7px;top:561.29px;width:1.2px;height:9.12px;background:#374c26"></div><div class="t" style="left:434.7px;top:564.28px;font-size:4.7px;line-height:5.64px;color:#9a9a9a;font-weight:400;letter-spacing:0.05px">Add Velocity</div><div style="position:absolute;left:495.5px;top:563.2px;width:6.6px;height:6.6px;background:#0e0e0e;border-radius:0.6px"><svg viewBox="0 0 10 10" width="100%" height="100%"><path d="M2 5.2 L4.1 7.3 L8.3 2.6" fill="none" stroke="#1b7ae0" stroke-width="1.7"/></svg></div><div style="position:absolute;left:430.5px;top:571.31px;width:74.1px;height:10.32px;background:#2b2b2b;border-bottom:0.9px solid #1c1c1c;box-sizing:border-box"></div><div style="position:absolute;left:433.1px;top:574.17px;width:4.6px;height:3px;"><svg viewBox="0 0 10 6" width="100%" height="100%"><path d="M0.5 0.5 H9.5 L5 5.8Z" fill="#d0d0d0"/></svg></div><div class="t" style="left:440.1px;top:574.61px;font-size:4.6px;line-height:5.52px;color:#b2b2b2;font-weight:700;letter-spacing:0.05px">Particle Update</div><div style="position:absolute;left:494.4px;top:572.77px;width:7.8px;height:7.8px;"><svg viewBox="0 0 10 10" width="100%" height="100%"><circle cx="5" cy="5" r="4.0" fill="none" stroke="#6a9a42" stroke-width="0.85" opacity="0.9"/><path d="M5 3.6 V6.4 M3.6 5 H6.4" stroke="#6a9a42" stroke-width="1.1"/></svg></div><div style="position:absolute;left:430.5px;top:581.63px;width:74.1px;height:10.02px;background:#212121;border-bottom:0.9px solid #181818;box-sizing:border-box"></div><div style="position:absolute;left:430.7px;top:581.63px;width:1.2px;height:9.12px;background:#374c26"></div><div class="t" style="left:434.7px;top:584.62px;font-size:4.7px;line-height:5.64px;color:#9a9a9a;font-weight:400;letter-spacing:0.05px">Particle State</div><div style="position:absolute;left:495.5px;top:583.54px;width:6.6px;height:6.6px;background:#0e0e0e;border-radius:0.6px"><svg viewBox="0 0 10 10" width="100%" height="100%"><path d="M2 5.2 L4.1 7.3 L8.3 2.6" fill="none" stroke="#1b7ae0" stroke-width="1.7"/></svg></div><div style="position:absolute;left:430.5px;top:591.65px;width:74.1px;height:10.02px;background:#212121;border-bottom:0.9px solid #181818;box-sizing:border-box"></div><div style="position:absolute;left:430.7px;top:591.65px;width:1.2px;height:9.12px;background:#374c26"></div><div class="t" style="left:434.7px;top:594.64px;font-size:4.7px;line-height:5.64px;color:#9a9a9a;font-weight:400;letter-spacing:0.05px">Scale Color</div><div style="position:absolute;left:495.5px;top:593.56px;width:6.6px;height:6.6px;background:#0e0e0e;border-radius:0.6px"><svg viewBox="0 0 10 10" width="100%" height="100%"><path d="M2 5.2 L4.1 7.3 L8.3 2.6" fill="none" stroke="#1b7ae0" stroke-width="1.7"/></svg></div><div style="position:absolute;left:430.5px;top:601.67px;width:74.1px;height:10.02px;background:#212121;border-bottom:0.9px solid #181818;box-sizing:border-box"></div><div style="position:absolute;left:430.7px;top:601.67px;width:1.2px;height:9.12px;background:#374c26"></div><div class="t" style="left:434.7px;top:604.66px;font-size:4.7px;line-height:5.64px;color:#9a9a9a;font-weight:400;letter-spacing:0.05px">Curl Noise Force</div><div style="position:absolute;left:495.5px;top:603.58px;width:6.6px;height:6.6px;background:#0e0e0e;border-radius:0.6px"><svg viewBox="0 0 10 10" width="100%" height="100%"><path d="M2 5.2 L4.1 7.3 L8.3 2.6" fill="none" stroke="#1b7ae0" stroke-width="1.7"/></svg></div><div style="position:absolute;left:430.5px;top:611.69px;width:74.1px;height:10.02px;background:#212121;border-bottom:0.9px solid #181818;box-sizing:border-box"></div><div style="position:absolute;left:430.7px;top:611.69px;width:1.2px;height:9.12px;background:#374c26"></div><div class="t" style="left:434.7px;top:614.68px;font-size:4.7px;line-height:5.64px;color:#9a9a9a;font-weight:400;letter-spacing:0.05px">Gravity Force</div><div style="position:absolute;left:495.5px;top:613.6px;width:6.6px;height:6.6px;background:#0e0e0e;border-radius:0.6px"><svg viewBox="0 0 10 10" width="100%" height="100%"><path d="M2 5.2 L4.1 7.3 L8.3 2.6" fill="none" stroke="#1b7ae0" stroke-width="1.7"/></svg></div><div style="position:absolute;left:430.5px;top:621.7px;width:74.1px;height:10.02px;background:#212121;border-bottom:0.9px solid #181818;box-sizing:border-box"></div><div style="position:absolute;left:430.7px;top:621.7px;width:1.2px;height:9.12px;background:#374c26"></div><div class="t" style="left:434.7px;top:624.69px;font-size:4.7px;line-height:5.64px;color:#9a9a9a;font-weight:400;letter-spacing:0.05px">Drag</div><div style="position:absolute;left:495.5px;top:623.61px;width:6.6px;height:6.6px;background:#0e0e0e;border-radius:0.6px"><svg viewBox="0 0 10 10" width="100%" height="100%"><path d="M2 5.2 L4.1 7.3 L8.3 2.6" fill="none" stroke="#1b7ae0" stroke-width="1.7"/></svg></div><div style="position:absolute;left:430.5px;top:631.72px;width:74.1px;height:10.02px;background:#212121;border-bottom:0.9px solid #181818;box-sizing:border-box"></div><div style="position:absolute;left:430.7px;top:631.72px;width:1.2px;height:9.12px;background:#374c26"></div><div class="t" style="left:434.7px;top:634.71px;font-size:4.7px;line-height:5.64px;color:#9a9a9a;font-weight:400;letter-spacing:0.05px">Solve Forces and Velocity</div><div style="position:absolute;left:495.5px;top:633.63px;width:6.6px;height:6.6px;background:#0e0e0e;border-radius:0.6px"><svg viewBox="0 0 10 10" width="100%" height="100%"><path d="M2 5.2 L4.1 7.3 L8.3 2.6" fill="none" stroke="#1b7ae0" stroke-width="1.7"/></svg></div><div style="position:absolute;left:430.5px;top:641.74px;width:74.1px;height:10.02px;background:#212121;border-bottom:0.9px solid #181818;box-sizing:border-box"></div><div style="position:absolute;left:430.7px;top:641.74px;width:1.2px;height:9.12px;background:#374c26"></div><div class="t" style="left:434.7px;top:644.73px;font-size:4.7px;line-height:5.64px;color:#9a9a9a;font-weight:400;letter-spacing:0.05px">Scale Sprite Size</div><div style="position:absolute;left:495.5px;top:643.65px;width:6.6px;height:6.6px;background:#0e0e0e;border-radius:0.6px"><svg viewBox="0 0 10 10" width="100%" height="100%"><path d="M2 5.2 L4.1 7.3 L8.3 2.6" fill="none" stroke="#1b7ae0" stroke-width="1.7"/></svg></div><div style="position:absolute;left:430.5px;top:651.76px;width:74.1px;height:10.32px;background:#2b2b2b;border-bottom:0.9px solid #1c1c1c;box-sizing:border-box"></div><div style="position:absolute;left:433.1px;top:654.62px;width:4.6px;height:3px;"><svg viewBox="0 0 10 6" width="100%" height="100%"><path d="M0.5 0.5 H9.5 L5 5.8Z" fill="#d0d0d0"/></svg></div><div class="t" style="left:440.1px;top:655.06px;font-size:4.6px;line-height:5.52px;color:#b2b2b2;font-weight:700;letter-spacing:0.05px">Render</div><div style="position:absolute;left:494.4px;top:653.22px;width:7.8px;height:7.8px;"><svg viewBox="0 0 10 10" width="100%" height="100%"><circle cx="5" cy="5" r="4.0" fill="none" stroke="#a85050" stroke-width="0.85" opacity="0.9"/><path d="M5 3.6 V6.4 M3.6 5 H6.4" stroke="#a85050" stroke-width="1.1"/></svg></div><div style="position:absolute;left:430.5px;top:662.08px;width:74.1px;height:10.72px;background:#212121;border-bottom:0.9px solid #181818;box-sizing:border-box"></div><div style="position:absolute;left:430.7px;top:662.08px;width:1.2px;height:9.82px;background:#563030"></div><div style="position:absolute;left:433.7px;top:665.04px;width:7px;height:5px;"><svg viewBox="0 0 14 10" width="100%" height="100%"><ellipse cx="7" cy="5" rx="5.2" ry="2.6" fill="#ececec"/><path d="M2 1.2 L4 3 M12 1.2 L10 3 M2 8.8 L4 7 M12 8.8 L10 7 M0.3 5 H2" stroke="#bdbdbd" stroke-width="0.8"/></svg></div><div class="t" style="left:443.1px;top:665.42px;font-size:4.7px;line-height:5.64px;color:#9a9a9a;font-weight:400;letter-spacing:0.05px">Sprite Renderer</div><div style="position:absolute;left:495.5px;top:664.34px;width:6.6px;height:6.6px;background:#0e0e0e;border-radius:0.6px"><svg viewBox="0 0 10 10" width="100%" height="100%"><path d="M2 5.2 L4.1 7.3 L8.3 2.6" fill="none" stroke="#1b7ae0" stroke-width="1.7"/></svg></div><div style="position:absolute;left:557.3px;top:462.2px;width:112.5px;height:268.4px;background:#151515;border-radius:2.5px;box-shadow:0 1px 2px rgba(0,0,0,0.5)"></div><div style="position:absolute;left:557.8px;top:462.2px;width:111.5px;height:13.2px;border-radius:2.5px 2.5px 0 0;background:linear-gradient(100deg,#88481b 0%,#824519 38%,#5e3d27 60%,#3e3935 80%,#373737 100%)"></div><div style="position:absolute;left:557.8px;top:462.2px;width:111.5px;height:13.2px;border-radius:2.5px 2.5px 0 0;background:linear-gradient(180deg,rgba(255,190,130,0.16) 0%,rgba(0,0,0,0.18) 40%,rgba(0,0,0,0.12) 60%,rgba(0,0,0,0) 100%)"></div><div style="position:absolute;left:557.8px;top:462.2px;width:111.5px;height:1px;border-radius:2.5px 2.5px 0 0;background:linear-gradient(90deg,rgba(255,200,150,0.22),rgba(255,255,255,0.12))"></div><div style="position:absolute;left:562.8px;top:466.7px;width:4.8px;height:3.1px;"><svg viewBox="0 0 10 6" width="100%" height="100%"><path d="M0.5 0.5 H9.5 L5 5.8Z" fill="#e2e2e2"/></svg></div><div style="position:absolute;left:573.4px;top:465.1px;width:7.4px;height:7.4px;background:#141414;border-radius:0.8px"><svg viewBox="0 0 10 10" width="100%" height="100%"><path d="M2 5.2 L4.1 7.3 L8.3 2.6" fill="none" stroke="#1b7ae0" stroke-width="1.7"/></svg></div><div class="t" style="left:584.2px;top:465.58px;font-size:6.2px;line-height:7.44px;color:#cdc9c5;font-weight:700;letter-spacing:0.15px">Normal_Smoke_Mi</div><div style="position:absolute;left:658.7px;top:464.8px;width:7.6px;height:7.6px;"><svg viewBox="0 0 10 10" width="100%" height="100%"><circle cx="5" cy="5" r="4.2" fill="none" stroke="#d8d8d8" stroke-width="1"/><path d="M5 4.2 V7.6" stroke="#d8d8d8" stroke-width="1.1"/><circle cx="5" cy="2.7" r="0.65" fill="#d8d8d8"/></svg></div><div style="position:absolute;left:557.8px;top:475.4px;width:111.5px;height:20.9px;background:rgba(24,24,24,0.84)"></div><div style="position:absolute;left:561.8px;top:482.4px;width:4.6px;height:7.4px;"><svg viewBox="0 0 6 9" width="100%" height="100%"><ellipse cx="3" cy="1.4" rx="0.9" ry="1.0" fill="#bdbdbd"/><path d="M1.6 2.6 Q3 1.8 4.4 2.6 L4.3 5.6 Q3 6.4 1.7 5.6Z" fill="#d8d8d8"/><path d="M0.2 8.8 Q0.6 6.2 3 6.1 Q5.4 6.2 5.8 8.8Z" fill="#a0a0a0"/></svg></div><div style="position:absolute;left:568.4px;top:477.9px;width:14.6px;height:16.8px;background:#202020"></div><div style="position:absolute;left:569.6px;top:480.1px;width:10.6px;height:11.2px;background:#060606;border-bottom:1.6px solid #169c16;box-sizing:border-box"></div><div style="position:absolute;left:574px;top:484.9px;width:1.4px;height:0.7px;background:#3a3a3a"></div><div style="position:absolute;left:557.8px;top:496.3px;width:111.5px;height:10.71px;background:#2a2a2a;border-bottom:0.9px solid #1c1c1c;box-sizing:border-box"></div><div style="position:absolute;left:558.8px;top:497.9px;width:6px;height:6px;"><svg viewBox="0 0 10 10" width="100%" height="100%"><path d="M1.6 8.4 L8.4 1.6" stroke="#b04a2a" stroke-width="2.6"/><path d="M0.8 9.2 L2 8" stroke="#d07050" stroke-width="1.2"/></svg></div><div class="t" style="left:566.7px;top:499.71px;font-size:4.75px;line-height:5.7px;color:#aeaeae;font-weight:400;letter-spacing:0.1px">Properties</div><div class="t" style="left:591.9px;top:500.74px;font-size:3.7px;line-height:4.44px;color:#e6e6e6;font-weight:700;letter-spacing:-0.15px">GPU</div><div style="position:absolute;left:592px;top:498.4px;width:4px;height:0.6px;background:#9a9a9a"></div><div style="position:absolute;left:591.9px;top:503.9px;width:7.2px;height:0.8px;background:#d0d0d0"></div><div style="position:absolute;left:645.7px;top:497.3px;width:22.4px;height:8.2px;background:#1f1f1f;border-radius:1px"></div><div style="position:absolute;left:646.7px;top:498.5px;width:5.6px;height:5.6px;"><svg viewBox="0 0 10 10" width="100%" height="100%"><path d="M5 0.8 V9.2 M0.8 5 H9.2" stroke="#f07018" stroke-width="2.2"/></svg></div><div class="t" style="left:653.2px;top:499.71px;font-size:4.75px;line-height:5.7px;color:#b4b4b4;font-weight:400;letter-spacing:0.1px">Stage</div><div style="position:absolute;left:557.8px;top:507.01px;width:111.5px;height:10.71px;background:#2d2d2d;border-bottom:0.9px solid #1c1c1c;box-sizing:border-box"></div><div style="position:absolute;left:558.6px;top:509.21px;width:6.6px;height:5.6px;"><svg viewBox="0 0 10 9" width="100%" height="100%"><path d="M0 0.8 H10" stroke="#a05030" stroke-width="0.8"/><path d="M0 4 H2.2 M3 4 H10 M0 7.3 H2.2 M3 7.3 H10" stroke="#b85a36" stroke-width="2"/></svg></div><div class="t" style="left:567px;top:510.51px;font-size:4.6px;line-height:5.52px;color:#b0b0b0;font-weight:700;letter-spacing:0.05px">Emitter Summary</div><div style="position:absolute;left:557.8px;top:517.72px;width:111.5px;height:10.22px;background:#2b2b2b;border-bottom:0.9px solid #1c1c1c;box-sizing:border-box"></div><div class="t" style="left:567.4px;top:520.97px;font-size:4.6px;line-height:5.52px;color:#b2b2b2;font-weight:700;letter-spacing:0.05px">Emitter Spawn</div><div style="position:absolute;left:659.1px;top:519.13px;width:7.8px;height:7.8px;"><svg viewBox="0 0 10 10" width="100%" height="100%"><circle cx="5" cy="5" r="4.0" fill="none" stroke="#a0603f" stroke-width="0.85" opacity="0.9"/><path d="M5 3.6 V6.4 M3.6 5 H6.4" stroke="#a0603f" stroke-width="1.1"/></svg></div><div style="position:absolute;left:557.8px;top:527.94px;width:111.5px;height:10.22px;background:#2b2b2b;border-bottom:0.9px solid #1c1c1c;box-sizing:border-box"></div><div style="position:absolute;left:560.4px;top:530.75px;width:4.6px;height:3px;"><svg viewBox="0 0 10 6" width="100%" height="100%"><path d="M0.5 0.5 H9.5 L5 5.8Z" fill="#d0d0d0"/></svg></div><div class="t" style="left:567.4px;top:531.19px;font-size:4.6px;line-height:5.52px;color:#b2b2b2;font-weight:700;letter-spacing:0.05px">Emitter Update</div><div style="position:absolute;left:659.1px;top:529.35px;width:7.8px;height:7.8px;"><svg viewBox="0 0 10 10" width="100%" height="100%"><circle cx="5" cy="5" r="4.0" fill="none" stroke="#a0603f" stroke-width="0.85" opacity="0.9"/><path d="M5 3.6 V6.4 M3.6 5 H6.4" stroke="#a0603f" stroke-width="1.1"/></svg></div><div style="position:absolute;left:557.8px;top:538.16px;width:111.5px;height:9.92px;background:#212121;border-bottom:0.9px solid #181818;box-sizing:border-box"></div><div style="position:absolute;left:558px;top:538.16px;width:1.2px;height:9.02px;background:#553724"></div><div class="t" style="left:562px;top:541.1px;font-size:4.7px;line-height:5.64px;color:#9a9a9a;font-weight:400;letter-spacing:0.05px">Emitter State</div><div style="position:absolute;left:592.2px;top:540.52px;width:9px;height:6.6px;background:#9c5c0e;border-radius:1.8px"></div><div class="t" style="left:593.4px;top:541.12px;font-size:4.5px;line-height:5.4px;color:#f0dcc0;font-weight:700;transform:scaleX(0.85);transform-origin:0 50%">Self</div><div style="position:absolute;left:603px;top:540.02px;width:11.2px;height:7px;background:#0a0a0a;border-radius:1.2px"></div><div class="t" style="left:603.8px;top:540.72px;font-size:4.5px;line-height:5.4px;color:#e8e8e8;font-weight:400;transform:scaleX(0.82);transform-origin:0 50%">Once</div><div style="position:absolute;left:660.2px;top:540.02px;width:6.6px;height:6.6px;background:#0e0e0e;border-radius:0.6px"><svg viewBox="0 0 10 10" width="100%" height="100%"><path d="M2 5.2 L4.1 7.3 L8.3 2.6" fill="none" stroke="#1b7ae0" stroke-width="1.7"/></svg></div><div style="position:absolute;left:557.8px;top:548.08px;width:111.5px;height:9.92px;background:#212121;border-bottom:0.9px solid #181818;box-sizing:border-box"></div><div style="position:absolute;left:558px;top:548.08px;width:1.2px;height:9.02px;background:#553724"></div><div class="t" style="left:562px;top:551.02px;font-size:4.7px;line-height:5.64px;color:#9a9a9a;font-weight:400;letter-spacing:0.05px">Spawn Rate</div><div style="position:absolute;left:660.2px;top:549.94px;width:6.6px;height:6.6px;background:#0e0e0e;border-radius:0.6px"><svg viewBox="0 0 10 10" width="100%" height="100%"><path d="M2 5.2 L4.1 7.3 L8.3 2.6" fill="none" stroke="#1b7ae0" stroke-width="1.7"/></svg></div><div style="position:absolute;left:557.8px;top:557.99px;width:111.5px;height:10.22px;background:#2b2b2b;border-bottom:0.9px solid #1c1c1c;box-sizing:border-box"></div><div style="position:absolute;left:560.4px;top:560.8px;width:4.6px;height:3px;"><svg viewBox="0 0 10 6" width="100%" height="100%"><path d="M0.5 0.5 H9.5 L5 5.8Z" fill="#d0d0d0"/></svg></div><div class="t" style="left:567.4px;top:561.24px;font-size:4.6px;line-height:5.52px;color:#b2b2b2;font-weight:700;letter-spacing:0.05px">Particle Spawn</div><div style="position:absolute;left:659.1px;top:559.4px;width:7.8px;height:7.8px;"><svg viewBox="0 0 10 10" width="100%" height="100%"><circle cx="5" cy="5" r="4.0" fill="none" stroke="#6a9a42" stroke-width="0.85" opacity="0.9"/><path d="M5 3.6 V6.4 M3.6 5 H6.4" stroke="#6a9a42" stroke-width="1.1"/></svg></div><div style="position:absolute;left:557.8px;top:568.21px;width:111.5px;height:9.92px;background:#212121;border-bottom:0.9px solid #181818;box-sizing:border-box"></div><div style="position:absolute;left:558px;top:568.21px;width:1.2px;height:9.02px;background:#374c26"></div><div class="t" style="left:562px;top:571.15px;font-size:4.7px;line-height:5.64px;color:#9a9a9a;font-weight:400;letter-spacing:0.05px">Initialize Particle</div><div style="position:absolute;left:660.2px;top:570.07px;width:6.6px;height:6.6px;background:#0e0e0e;border-radius:0.6px"><svg viewBox="0 0 10 10" width="100%" height="100%"><path d="M2 5.2 L4.1 7.3 L8.3 2.6" fill="none" stroke="#1b7ae0" stroke-width="1.7"/></svg></div><div style="position:absolute;left:557.8px;top:578.13px;width:111.5px;height:9.92px;background:#212121;border-bottom:0.9px solid #181818;box-sizing:border-box"></div><div style="position:absolute;left:558px;top:578.13px;width:1.2px;height:9.02px;background:#374c26"></div><div class="t" style="left:562px;top:581.07px;font-size:4.7px;line-height:5.64px;color:#9a9a9a;font-weight:400;letter-spacing:0.05px">Add Velocity</div><div style="position:absolute;left:660.2px;top:579.99px;width:6.6px;height:6.6px;background:#0e0e0e;border-radius:0.6px"><svg viewBox="0 0 10 10" width="100%" height="100%"><path d="M2 5.2 L4.1 7.3 L8.3 2.6" fill="none" stroke="#1b7ae0" stroke-width="1.7"/></svg></div><div style="position:absolute;left:557.8px;top:588.05px;width:111.5px;height:9.92px;background:#212121;border-bottom:0.9px solid #181818;box-sizing:border-box"></div><div style="position:absolute;left:558px;top:588.05px;width:1.2px;height:9.02px;background:#374c26"></div><div class="t" style="left:562px;top:590.99px;font-size:4.7px;line-height:5.64px;color:#9a9a9a;font-weight:400;letter-spacing:0.05px">Apply Initial Forces</div><div style="position:absolute;left:660.2px;top:589.91px;width:6.6px;height:6.6px;background:#0e0e0e;border-radius:0.6px"><svg viewBox="0 0 10 10" width="100%" height="100%"><path d="M2 5.2 L4.1 7.3 L8.3 2.6" fill="none" stroke="#1b7ae0" stroke-width="1.7"/></svg></div><div style="position:absolute;left:557.8px;top:597.97px;width:111.5px;height:9.92px;background:#212121;border-bottom:0.9px solid #181818;box-sizing:border-box"></div><div style="position:absolute;left:558px;top:597.97px;width:1.2px;height:9.02px;background:#374c26"></div><div class="t" style="left:562px;top:600.91px;font-size:4.7px;line-height:5.64px;color:#9a9a9a;font-weight:400;letter-spacing:0.05px">Cylinder Location</div><div style="position:absolute;left:601.2px;top:599.73px;width:5.8px;height:5.8px;background:#0e0e0e;border-radius:1.2px;box-shadow:0 0 0 0.5px #2a2a2a"></div><div style="position:absolute;left:603.1px;top:601.63px;width:2.1px;height:2.1px;background:#22a0f4;border-radius:0.6px"></div><div style="position:absolute;left:667.4px;top:600.13px;width:1.9px;height:5.8px;background:#2a96ea"></div><div style="position:absolute;left:660.2px;top:599.83px;width:6.6px;height:6.6px;background:#0e0e0e;border-radius:0.6px"><svg viewBox="0 0 10 10" width="100%" height="100%"><path d="M2 5.2 L4.1 7.3 L8.3 2.6" fill="none" stroke="#1b7ae0" stroke-width="1.7"/></svg></div><div style="position:absolute;left:557.8px;top:607.89px;width:111.5px;height:10.22px;background:#2b2b2b;border-bottom:0.9px solid #1c1c1c;box-sizing:border-box"></div><div style="position:absolute;left:560.4px;top:610.69px;width:4.6px;height:3px;"><svg viewBox="0 0 10 6" width="100%" height="100%"><path d="M0.5 0.5 H9.5 L5 5.8Z" fill="#d0d0d0"/></svg></div><div class="t" style="left:567.4px;top:611.13px;font-size:4.6px;line-height:5.52px;color:#b2b2b2;font-weight:700;letter-spacing:0.05px">Particle Update</div><div style="position:absolute;left:659.1px;top:609.29px;width:7.8px;height:7.8px;"><svg viewBox="0 0 10 10" width="100%" height="100%"><circle cx="5" cy="5" r="4.0" fill="none" stroke="#6a9a42" stroke-width="0.85" opacity="0.9"/><path d="M5 3.6 V6.4 M3.6 5 H6.4" stroke="#6a9a42" stroke-width="1.1"/></svg></div><div style="position:absolute;left:557.8px;top:618.1px;width:111.5px;height:9.92px;background:#212121;border-bottom:0.9px solid #181818;box-sizing:border-box"></div><div style="position:absolute;left:558px;top:618.1px;width:1.2px;height:9.02px;background:#374c26"></div><div class="t" style="left:562px;top:621.04px;font-size:4.7px;line-height:5.64px;color:#9a9a9a;font-weight:400;letter-spacing:0.05px">Particle State</div><div style="position:absolute;left:660.2px;top:619.96px;width:6.6px;height:6.6px;background:#0e0e0e;border-radius:0.6px"><svg viewBox="0 0 10 10" width="100%" height="100%"><path d="M2 5.2 L4.1 7.3 L8.3 2.6" fill="none" stroke="#1b7ae0" stroke-width="1.7"/></svg></div><div style="position:absolute;left:557.8px;top:628.02px;width:111.5px;height:9.92px;background:#212121;border-bottom:0.9px solid #181818;box-sizing:border-box"></div><div style="position:absolute;left:558px;top:628.02px;width:1.2px;height:9.02px;background:#374c26"></div><div class="t" style="left:562px;top:630.96px;font-size:4.7px;line-height:5.64px;color:#9a9a9a;font-weight:400;letter-spacing:0.05px">Scale Color</div><div style="position:absolute;left:660.2px;top:629.88px;width:6.6px;height:6.6px;background:#0e0e0e;border-radius:0.6px"><svg viewBox="0 0 10 10" width="100%" height="100%"><path d="M2 5.2 L4.1 7.3 L8.3 2.6" fill="none" stroke="#1b7ae0" stroke-width="1.7"/></svg></div><div style="position:absolute;left:557.8px;top:637.94px;width:111.5px;height:9.92px;background:#212121;border-bottom:0.9px solid #181818;box-sizing:border-box"></div><div style="position:absolute;left:558px;top:637.94px;width:1.2px;height:9.02px;background:#374c26"></div><div class="t" style="left:562px;top:640.88px;font-size:4.7px;line-height:5.64px;color:#9a9a9a;font-weight:400;letter-spacing:0.05px">Gravity Force</div><div style="position:absolute;left:660.2px;top:639.8px;width:6.6px;height:6.6px;background:#0e0e0e;border-radius:0.6px"><svg viewBox="0 0 10 10" width="100%" height="100%"><path d="M2 5.2 L4.1 7.3 L8.3 2.6" fill="none" stroke="#1b7ae0" stroke-width="1.7"/></svg></div><div style="position:absolute;left:557.8px;top:647.86px;width:111.5px;height:9.92px;background:#212121;border-bottom:0.9px solid #181818;box-sizing:border-box"></div><div style="position:absolute;left:558px;top:647.86px;width:1.2px;height:9.02px;background:#374c26"></div><div class="t" style="left:562px;top:650.8px;font-size:4.7px;line-height:5.64px;color:#9a9a9a;font-weight:400;letter-spacing:0.05px">Drag</div><div style="position:absolute;left:660.2px;top:649.72px;width:6.6px;height:6.6px;background:#0e0e0e;border-radius:0.6px"><svg viewBox="0 0 10 10" width="100%" height="100%"><path d="M2 5.2 L4.1 7.3 L8.3 2.6" fill="none" stroke="#1b7ae0" stroke-width="1.7"/></svg></div><div style="position:absolute;left:557.8px;top:657.78px;width:111.5px;height:9.92px;background:#212121;border-bottom:0.9px solid #181818;box-sizing:border-box"></div><div style="position:absolute;left:558px;top:657.78px;width:1.2px;height:9.02px;background:#374c26"></div><div class="t" style="left:562px;top:660.72px;font-size:4.7px;line-height:5.64px;color:#9a9a9a;font-weight:400;letter-spacing:0.05px">Solve Forces and Velocity</div><div style="position:absolute;left:660.2px;top:659.64px;width:6.6px;height:6.6px;background:#0e0e0e;border-radius:0.6px"><svg viewBox="0 0 10 10" width="100%" height="100%"><path d="M2 5.2 L4.1 7.3 L8.3 2.6" fill="none" stroke="#1b7ae0" stroke-width="1.7"/></svg></div><div style="position:absolute;left:557.8px;top:667.7px;width:111.5px;height:9.92px;background:#212121;border-bottom:0.9px solid #181818;box-sizing:border-box"></div><div style="position:absolute;left:558px;top:667.7px;width:1.2px;height:9.02px;background:#374c26"></div><div class="t" style="left:562px;top:670.64px;font-size:4.7px;line-height:5.64px;color:#9a9a9a;font-weight:400;letter-spacing:0.05px">Scale Sprite Size</div><div style="position:absolute;left:660.2px;top:669.56px;width:6.6px;height:6.6px;background:#0e0e0e;border-radius:0.6px"><svg viewBox="0 0 10 10" width="100%" height="100%"><path d="M2 5.2 L4.1 7.3 L8.3 2.6" fill="none" stroke="#1b7ae0" stroke-width="1.7"/></svg></div><div style="position:absolute;left:557.8px;top:677.61px;width:111.5px;height:9.92px;background:#212121;border-bottom:0.9px solid #181818;box-sizing:border-box"></div><div style="position:absolute;left:558px;top:677.61px;width:1.2px;height:9.02px;background:#374c26"></div><div class="t" style="left:562px;top:680.55px;font-size:4.7px;line-height:5.64px;color:#9a9a9a;font-weight:400;letter-spacing:0.05px">Sprite Rotation Rate</div><div style="position:absolute;left:660.2px;top:679.47px;width:6.6px;height:6.6px;background:#0e0e0e;border-radius:0.6px"><svg viewBox="0 0 10 10" width="100%" height="100%"><path d="M2 5.2 L4.1 7.3 L8.3 2.6" fill="none" stroke="#1b7ae0" stroke-width="1.7"/></svg></div><div style="position:absolute;left:557.8px;top:687.53px;width:111.5px;height:9.92px;background:#212121;border-bottom:0.9px solid #181818;box-sizing:border-box"></div><div style="position:absolute;left:558px;top:687.53px;width:1.2px;height:9.02px;background:#374c26"></div><div class="t" style="left:562px;top:690.47px;font-size:4.7px;line-height:5.64px;color:#9a9a9a;font-weight:400;letter-spacing:0.05px">Color</div><div style="position:absolute;left:660.2px;top:689.39px;width:6.6px;height:6.6px;background:#0e0e0e;border-radius:0.6px"><svg viewBox="0 0 10 10" width="100%" height="100%"><path d="M2 5.2 L4.1 7.3 L8.3 2.6" fill="none" stroke="#1b7ae0" stroke-width="1.7"/></svg></div><div style="position:absolute;left:557.8px;top:697.45px;width:111.5px;height:9.92px;background:#212121;border-bottom:0.9px solid #181818;box-sizing:border-box"></div><div style="position:absolute;left:558px;top:697.45px;width:1.2px;height:9.02px;background:#374c26"></div><div class="t" style="left:562px;top:700.39px;font-size:4.7px;line-height:5.64px;color:#9a9a9a;font-weight:400;letter-spacing:0.05px">Dynamic Material Parameters</div><div style="position:absolute;left:660.2px;top:699.31px;width:6.6px;height:6.6px;background:#0e0e0e;border-radius:0.6px"><svg viewBox="0 0 10 10" width="100%" height="100%"><path d="M2 5.2 L4.1 7.3 L8.3 2.6" fill="none" stroke="#1b7ae0" stroke-width="1.7"/></svg></div><div style="position:absolute;left:557.8px;top:707.37px;width:111.5px;height:10.22px;background:#2b2b2b;border-bottom:0.9px solid #1c1c1c;box-sizing:border-box"></div><div style="position:absolute;left:560.4px;top:710.18px;width:4.6px;height:3px;"><svg viewBox="0 0 10 6" width="100%" height="100%"><path d="M0.5 0.5 H9.5 L5 5.8Z" fill="#d0d0d0"/></svg></div><div class="t" style="left:567.4px;top:710.62px;font-size:4.6px;line-height:5.52px;color:#b2b2b2;font-weight:700;letter-spacing:0.05px">Render</div><div style="position:absolute;left:659.1px;top:708.78px;width:7.8px;height:7.8px;"><svg viewBox="0 0 10 10" width="100%" height="100%"><circle cx="5" cy="5" r="4.0" fill="none" stroke="#a85050" stroke-width="0.85" opacity="0.9"/><path d="M5 3.6 V6.4 M3.6 5 H6.4" stroke="#a85050" stroke-width="1.1"/></svg></div><div style="position:absolute;left:557.8px;top:717.59px;width:111.5px;height:10.61px;background:#212121;border-bottom:0.9px solid #181818;box-sizing:border-box"></div><div style="position:absolute;left:558px;top:717.59px;width:1.2px;height:9.71px;background:#563030"></div><div style="position:absolute;left:561.8px;top:720.69px;width:5.4px;height:6px;"><svg viewBox="0 0 10 10" width="100%" height="100%"><path d="M1 1 L5 3 L9 1 L7 5 L9 9 L5 7 L1 9 L3 5Z" fill="#e6e6e6"/></svg></div><div class="t" style="left:570.4px;top:720.87px;font-size:4.7px;line-height:5.64px;color:#9a9a9a;font-weight:400;letter-spacing:0.05px">Sprite Renderer</div><div style="position:absolute;left:660.2px;top:719.79px;width:6.6px;height:6.6px;background:#0e0e0e;border-radius:0.6px"><svg viewBox="0 0 10 10" width="100%" height="100%"><path d="M2 5.2 L4.1 7.3 L8.3 2.6" fill="none" stroke="#1b7ae0" stroke-width="1.7"/></svg></div><div style="position:absolute;left:676.2px;top:462.2px;width:112.4px;height:268.4px;background:#151515;border-radius:2.5px;box-shadow:0 1px 2px rgba(0,0,0,0.5)"></div><div style="position:absolute;left:676.7px;top:462.2px;width:111.4px;height:13.2px;border-radius:2.5px 2.5px 0 0;background:linear-gradient(100deg,#88481b 0%,#824519 38%,#5e3d27 60%,#3e3935 80%,#373737 100%)"></div><div style="position:absolute;left:676.7px;top:462.2px;width:111.4px;height:13.2px;border-radius:2.5px 2.5px 0 0;background:linear-gradient(180deg,rgba(255,190,130,0.16) 0%,rgba(0,0,0,0.18) 40%,rgba(0,0,0,0.12) 60%,rgba(0,0,0,0) 100%)"></div><div style="position:absolute;left:676.7px;top:462.2px;width:111.4px;height:1px;border-radius:2.5px 2.5px 0 0;background:linear-gradient(90deg,rgba(255,200,150,0.22),rgba(255,255,255,0.12))"></div><div style="position:absolute;left:681.7px;top:466.7px;width:4.8px;height:3.1px;"><svg viewBox="0 0 10 6" width="100%" height="100%"><path d="M0.5 0.5 H9.5 L5 5.8Z" fill="#e2e2e2"/></svg></div><div style="position:absolute;left:692.3px;top:465.1px;width:7.4px;height:7.4px;background:#141414;border-radius:0.8px"><svg viewBox="0 0 10 10" width="100%" height="100%"><path d="M2 5.2 L4.1 7.3 L8.3 2.6" fill="none" stroke="#1b7ae0" stroke-width="1.7"/></svg></div><div class="t" style="left:703.1px;top:465.58px;font-size:6.2px;line-height:7.44px;color:#cdc9c5;font-weight:700;letter-spacing:0.15px">Normal_Smoke_Mi</div><div style="position:absolute;left:777.5px;top:464.8px;width:7.6px;height:7.6px;"><svg viewBox="0 0 10 10" width="100%" height="100%"><circle cx="5" cy="5" r="4.2" fill="none" stroke="#d8d8d8" stroke-width="1"/><path d="M5 4.2 V7.6" stroke="#d8d8d8" stroke-width="1.1"/><circle cx="5" cy="2.7" r="0.65" fill="#d8d8d8"/></svg></div><div style="position:absolute;left:676.7px;top:475.4px;width:111.4px;height:20.9px;background:rgba(24,24,24,0.84)"></div><div style="position:absolute;left:680.7px;top:482.4px;width:4.6px;height:7.4px;"><svg viewBox="0 0 6 9" width="100%" height="100%"><ellipse cx="3" cy="1.4" rx="0.9" ry="1.0" fill="#bdbdbd"/><path d="M1.6 2.6 Q3 1.8 4.4 2.6 L4.3 5.6 Q3 6.4 1.7 5.6Z" fill="#d8d8d8"/><path d="M0.2 8.8 Q0.6 6.2 3 6.1 Q5.4 6.2 5.8 8.8Z" fill="#a0a0a0"/></svg></div><div style="position:absolute;left:687.3px;top:477.9px;width:14.6px;height:16.8px;background:#202020"></div><div style="position:absolute;left:688.5px;top:480.1px;width:10.6px;height:11.2px;background:#060606;border-bottom:1.6px solid #169c16;box-sizing:border-box"></div><div style="position:absolute;left:692.9px;top:484.9px;width:1.4px;height:0.7px;background:#3a3a3a"></div><div style="position:absolute;left:676.7px;top:496.3px;width:111.4px;height:10.71px;background:#2a2a2a;border-bottom:0.9px solid #1c1c1c;box-sizing:border-box"></div><div style="position:absolute;left:677.7px;top:497.9px;width:6px;height:6px;"><svg viewBox="0 0 10 10" width="100%" height="100%"><path d="M1.6 8.4 L8.4 1.6" stroke="#b04a2a" stroke-width="2.6"/><path d="M0.8 9.2 L2 8" stroke="#d07050" stroke-width="1.2"/></svg></div><div class="t" style="left:685.6px;top:499.71px;font-size:4.75px;line-height:5.7px;color:#aeaeae;font-weight:400;letter-spacing:0.1px">Properties</div><div class="t" style="left:710.8px;top:500.74px;font-size:3.7px;line-height:4.44px;color:#e6e6e6;font-weight:700;letter-spacing:-0.15px">GPU</div><div style="position:absolute;left:710.9px;top:498.4px;width:4px;height:0.6px;background:#9a9a9a"></div><div style="position:absolute;left:710.8px;top:503.9px;width:7.2px;height:0.8px;background:#d0d0d0"></div><div style="position:absolute;left:764.5px;top:497.3px;width:22.4px;height:8.2px;background:#1f1f1f;border-radius:1px"></div><div style="position:absolute;left:765.5px;top:498.5px;width:5.6px;height:5.6px;"><svg viewBox="0 0 10 10" width="100%" height="100%"><path d="M5 0.8 V9.2 M0.8 5 H9.2" stroke="#f07018" stroke-width="2.2"/></svg></div><div class="t" style="left:772px;top:499.71px;font-size:4.75px;line-height:5.7px;color:#b4b4b4;font-weight:400;letter-spacing:0.1px">Stage</div><div style="position:absolute;left:676.7px;top:507.01px;width:111.4px;height:10.71px;background:#2d2d2d;border-bottom:0.9px solid #1c1c1c;box-sizing:border-box"></div><div style="position:absolute;left:677.5px;top:509.21px;width:6.6px;height:5.6px;"><svg viewBox="0 0 10 9" width="100%" height="100%"><path d="M0 0.8 H10" stroke="#a05030" stroke-width="0.8"/><path d="M0 4 H2.2 M3 4 H10 M0 7.3 H2.2 M3 7.3 H10" stroke="#b85a36" stroke-width="2"/></svg></div><div class="t" style="left:685.9px;top:510.51px;font-size:4.6px;line-height:5.52px;color:#b0b0b0;font-weight:700;letter-spacing:0.05px">Emitter Summary</div><div style="position:absolute;left:676.7px;top:517.72px;width:111.4px;height:10.22px;background:#2b2b2b;border-bottom:0.9px solid #1c1c1c;box-sizing:border-box"></div><div class="t" style="left:686.3px;top:520.97px;font-size:4.6px;line-height:5.52px;color:#b2b2b2;font-weight:700;letter-spacing:0.05px">Emitter Spawn</div><div style="position:absolute;left:777.9px;top:519.13px;width:7.8px;height:7.8px;"><svg viewBox="0 0 10 10" width="100%" height="100%"><circle cx="5" cy="5" r="4.0" fill="none" stroke="#a0603f" stroke-width="0.85" opacity="0.9"/><path d="M5 3.6 V6.4 M3.6 5 H6.4" stroke="#a0603f" stroke-width="1.1"/></svg></div><div style="position:absolute;left:676.7px;top:527.94px;width:111.4px;height:10.22px;background:#2b2b2b;border-bottom:0.9px solid #1c1c1c;box-sizing:border-box"></div><div style="position:absolute;left:679.3px;top:530.75px;width:4.6px;height:3px;"><svg viewBox="0 0 10 6" width="100%" height="100%"><path d="M0.5 0.5 H9.5 L5 5.8Z" fill="#d0d0d0"/></svg></div><div class="t" style="left:686.3px;top:531.19px;font-size:4.6px;line-height:5.52px;color:#b2b2b2;font-weight:700;letter-spacing:0.05px">Emitter Update</div><div style="position:absolute;left:777.9px;top:529.35px;width:7.8px;height:7.8px;"><svg viewBox="0 0 10 10" width="100%" height="100%"><circle cx="5" cy="5" r="4.0" fill="none" stroke="#a0603f" stroke-width="0.85" opacity="0.9"/><path d="M5 3.6 V6.4 M3.6 5 H6.4" stroke="#a0603f" stroke-width="1.1"/></svg></div><div style="position:absolute;left:676.7px;top:538.16px;width:111.4px;height:9.92px;background:#212121;border-bottom:0.9px solid #181818;box-sizing:border-box"></div><div style="position:absolute;left:676.9px;top:538.16px;width:1.2px;height:9.02px;background:#553724"></div><div class="t" style="left:680.9px;top:541.1px;font-size:4.7px;line-height:5.64px;color:#9a9a9a;font-weight:400;letter-spacing:0.05px">Emitter State</div><div style="position:absolute;left:711.1px;top:540.52px;width:9px;height:6.6px;background:#9c5c0e;border-radius:1.8px"></div><div class="t" style="left:712.3px;top:541.12px;font-size:4.5px;line-height:5.4px;color:#f0dcc0;font-weight:700;transform:scaleX(0.85);transform-origin:0 50%">Self</div><div style="position:absolute;left:721.9px;top:540.02px;width:11.2px;height:7px;background:#0a0a0a;border-radius:1.2px"></div><div class="t" style="left:722.7px;top:540.72px;font-size:4.5px;line-height:5.4px;color:#e8e8e8;font-weight:400;transform:scaleX(0.82);transform-origin:0 50%">Once</div><div style="position:absolute;left:779px;top:540.02px;width:6.6px;height:6.6px;background:#0e0e0e;border-radius:0.6px"><svg viewBox="0 0 10 10" width="100%" height="100%"><path d="M2 5.2 L4.1 7.3 L8.3 2.6" fill="none" stroke="#1b7ae0" stroke-width="1.7"/></svg></div><div style="position:absolute;left:676.7px;top:548.08px;width:111.4px;height:9.92px;background:#212121;border-bottom:0.9px solid #181818;box-sizing:border-box"></div><div style="position:absolute;left:676.9px;top:548.08px;width:1.2px;height:9.02px;background:#553724"></div><div class="t" style="left:680.9px;top:551.02px;font-size:4.7px;line-height:5.64px;color:#9a9a9a;font-weight:400;letter-spacing:0.05px">Spawn Rate</div><div style="position:absolute;left:779px;top:549.94px;width:6.6px;height:6.6px;background:#0e0e0e;border-radius:0.6px"><svg viewBox="0 0 10 10" width="100%" height="100%"><path d="M2 5.2 L4.1 7.3 L8.3 2.6" fill="none" stroke="#1b7ae0" stroke-width="1.7"/></svg></div><div style="position:absolute;left:676.7px;top:557.99px;width:111.4px;height:10.22px;background:#2b2b2b;border-bottom:0.9px solid #1c1c1c;box-sizing:border-box"></div><div style="position:absolute;left:679.3px;top:560.8px;width:4.6px;height:3px;"><svg viewBox="0 0 10 6" width="100%" height="100%"><path d="M0.5 0.5 H9.5 L5 5.8Z" fill="#d0d0d0"/></svg></div><div class="t" style="left:686.3px;top:561.24px;font-size:4.6px;line-height:5.52px;color:#b2b2b2;font-weight:700;letter-spacing:0.05px">Particle Spawn</div><div style="position:absolute;left:777.9px;top:559.4px;width:7.8px;height:7.8px;"><svg viewBox="0 0 10 10" width="100%" height="100%"><circle cx="5" cy="5" r="4.0" fill="none" stroke="#6a9a42" stroke-width="0.85" opacity="0.9"/><path d="M5 3.6 V6.4 M3.6 5 H6.4" stroke="#6a9a42" stroke-width="1.1"/></svg></div><div style="position:absolute;left:676.7px;top:568.21px;width:111.4px;height:9.92px;background:#212121;border-bottom:0.9px solid #181818;box-sizing:border-box"></div><div style="position:absolute;left:676.9px;top:568.21px;width:1.2px;height:9.02px;background:#374c26"></div><div class="t" style="left:680.9px;top:571.15px;font-size:4.7px;line-height:5.64px;color:#9a9a9a;font-weight:400;letter-spacing:0.05px">Initialize Particle</div><div style="position:absolute;left:779px;top:570.07px;width:6.6px;height:6.6px;background:#0e0e0e;border-radius:0.6px"><svg viewBox="0 0 10 10" width="100%" height="100%"><path d="M2 5.2 L4.1 7.3 L8.3 2.6" fill="none" stroke="#1b7ae0" stroke-width="1.7"/></svg></div><div style="position:absolute;left:676.7px;top:578.13px;width:111.4px;height:9.92px;background:#212121;border-bottom:0.9px solid #181818;box-sizing:border-box"></div><div style="position:absolute;left:676.9px;top:578.13px;width:1.2px;height:9.02px;background:#374c26"></div><div class="t" style="left:680.9px;top:581.07px;font-size:4.7px;line-height:5.64px;color:#9a9a9a;font-weight:400;letter-spacing:0.05px">Add Velocity</div><div style="position:absolute;left:779px;top:579.99px;width:6.6px;height:6.6px;background:#0e0e0e;border-radius:0.6px"><svg viewBox="0 0 10 10" width="100%" height="100%"><path d="M2 5.2 L4.1 7.3 L8.3 2.6" fill="none" stroke="#1b7ae0" stroke-width="1.7"/></svg></div><div style="position:absolute;left:676.7px;top:588.05px;width:111.4px;height:9.92px;background:#212121;border-bottom:0.9px solid #181818;box-sizing:border-box"></div><div style="position:absolute;left:676.9px;top:588.05px;width:1.2px;height:9.02px;background:#374c26"></div><div class="t" style="left:680.9px;top:590.99px;font-size:4.7px;line-height:5.64px;color:#9a9a9a;font-weight:400;letter-spacing:0.05px">Apply Initial Forces</div><div style="position:absolute;left:779px;top:589.91px;width:6.6px;height:6.6px;background:#0e0e0e;border-radius:0.6px"><svg viewBox="0 0 10 10" width="100%" height="100%"><path d="M2 5.2 L4.1 7.3 L8.3 2.6" fill="none" stroke="#1b7ae0" stroke-width="1.7"/></svg></div><div style="position:absolute;left:676.7px;top:597.97px;width:111.4px;height:9.92px;background:#212121;border-bottom:0.9px solid #181818;box-sizing:border-box"></div><div style="position:absolute;left:676.9px;top:597.97px;width:1.2px;height:9.02px;background:#374c26"></div><div class="t" style="left:680.9px;top:600.91px;font-size:4.7px;line-height:5.64px;color:#9a9a9a;font-weight:400;letter-spacing:0.05px">Cylinder Location</div><div style="position:absolute;left:720.1px;top:599.73px;width:5.8px;height:5.8px;background:#0e0e0e;border-radius:1.2px;box-shadow:0 0 0 0.5px #2a2a2a"></div><div style="position:absolute;left:722px;top:601.63px;width:2.1px;height:2.1px;background:#22a0f4;border-radius:0.6px"></div><div style="position:absolute;left:786.2px;top:600.13px;width:1.9px;height:5.8px;background:#2a96ea"></div><div style="position:absolute;left:779px;top:599.83px;width:6.6px;height:6.6px;background:#0e0e0e;border-radius:0.6px"><svg viewBox="0 0 10 10" width="100%" height="100%"><path d="M2 5.2 L4.1 7.3 L8.3 2.6" fill="none" stroke="#1b7ae0" stroke-width="1.7"/></svg></div><div style="position:absolute;left:676.7px;top:607.89px;width:111.4px;height:10.22px;background:#2b2b2b;border-bottom:0.9px solid #1c1c1c;box-sizing:border-box"></div><div style="position:absolute;left:679.3px;top:610.69px;width:4.6px;height:3px;"><svg viewBox="0 0 10 6" width="100%" height="100%"><path d="M0.5 0.5 H9.5 L5 5.8Z" fill="#d0d0d0"/></svg></div><div class="t" style="left:686.3px;top:611.13px;font-size:4.6px;line-height:5.52px;color:#b2b2b2;font-weight:700;letter-spacing:0.05px">Particle Update</div><div style="position:absolute;left:777.9px;top:609.29px;width:7.8px;height:7.8px;"><svg viewBox="0 0 10 10" width="100%" height="100%"><circle cx="5" cy="5" r="4.0" fill="none" stroke="#6a9a42" stroke-width="0.85" opacity="0.9"/><path d="M5 3.6 V6.4 M3.6 5 H6.4" stroke="#6a9a42" stroke-width="1.1"/></svg></div><div style="position:absolute;left:676.7px;top:618.1px;width:111.4px;height:9.92px;background:#212121;border-bottom:0.9px solid #181818;box-sizing:border-box"></div><div style="position:absolute;left:676.9px;top:618.1px;width:1.2px;height:9.02px;background:#374c26"></div><div class="t" style="left:680.9px;top:621.04px;font-size:4.7px;line-height:5.64px;color:#9a9a9a;font-weight:400;letter-spacing:0.05px">Particle State</div><div style="position:absolute;left:779px;top:619.96px;width:6.6px;height:6.6px;background:#0e0e0e;border-radius:0.6px"><svg viewBox="0 0 10 10" width="100%" height="100%"><path d="M2 5.2 L4.1 7.3 L8.3 2.6" fill="none" stroke="#1b7ae0" stroke-width="1.7"/></svg></div><div style="position:absolute;left:676.7px;top:628.02px;width:111.4px;height:9.92px;background:#212121;border-bottom:0.9px solid #181818;box-sizing:border-box"></div><div style="position:absolute;left:676.9px;top:628.02px;width:1.2px;height:9.02px;background:#374c26"></div><div class="t" style="left:680.9px;top:630.96px;font-size:4.7px;line-height:5.64px;color:#9a9a9a;font-weight:400;letter-spacing:0.05px">Scale Color</div><div style="position:absolute;left:779px;top:629.88px;width:6.6px;height:6.6px;background:#0e0e0e;border-radius:0.6px"><svg viewBox="0 0 10 10" width="100%" height="100%"><path d="M2 5.2 L4.1 7.3 L8.3 2.6" fill="none" stroke="#1b7ae0" stroke-width="1.7"/></svg></div><div style="position:absolute;left:676.7px;top:637.94px;width:111.4px;height:9.92px;background:#212121;border-bottom:0.9px solid #181818;box-sizing:border-box"></div><div style="position:absolute;left:676.9px;top:637.94px;width:1.2px;height:9.02px;background:#374c26"></div><div class="t" style="left:680.9px;top:640.88px;font-size:4.7px;line-height:5.64px;color:#9a9a9a;font-weight:400;letter-spacing:0.05px">Gravity Force</div><div style="position:absolute;left:779px;top:639.8px;width:6.6px;height:6.6px;background:#0e0e0e;border-radius:0.6px"><svg viewBox="0 0 10 10" width="100%" height="100%"><path d="M2 5.2 L4.1 7.3 L8.3 2.6" fill="none" stroke="#1b7ae0" stroke-width="1.7"/></svg></div><div style="position:absolute;left:676.7px;top:647.86px;width:111.4px;height:9.92px;background:#212121;border-bottom:0.9px solid #181818;box-sizing:border-box"></div><div style="position:absolute;left:676.9px;top:647.86px;width:1.2px;height:9.02px;background:#374c26"></div><div class="t" style="left:680.9px;top:650.8px;font-size:4.7px;line-height:5.64px;color:#9a9a9a;font-weight:400;letter-spacing:0.05px">Drag</div><div style="position:absolute;left:779px;top:649.72px;width:6.6px;height:6.6px;background:#0e0e0e;border-radius:0.6px"><svg viewBox="0 0 10 10" width="100%" height="100%"><path d="M2 5.2 L4.1 7.3 L8.3 2.6" fill="none" stroke="#1b7ae0" stroke-width="1.7"/></svg></div><div style="position:absolute;left:676.7px;top:657.78px;width:111.4px;height:9.92px;background:#212121;border-bottom:0.9px solid #181818;box-sizing:border-box"></div><div style="position:absolute;left:676.9px;top:657.78px;width:1.2px;height:9.02px;background:#374c26"></div><div class="t" style="left:680.9px;top:660.72px;font-size:4.7px;line-height:5.64px;color:#9a9a9a;font-weight:400;letter-spacing:0.05px">Solve Forces and Velocity</div><div style="position:absolute;left:779px;top:659.64px;width:6.6px;height:6.6px;background:#0e0e0e;border-radius:0.6px"><svg viewBox="0 0 10 10" width="100%" height="100%"><path d="M2 5.2 L4.1 7.3 L8.3 2.6" fill="none" stroke="#1b7ae0" stroke-width="1.7"/></svg></div><div style="position:absolute;left:676.7px;top:667.7px;width:111.4px;height:9.92px;background:#212121;border-bottom:0.9px solid #181818;box-sizing:border-box"></div><div style="position:absolute;left:676.9px;top:667.7px;width:1.2px;height:9.02px;background:#374c26"></div><div class="t" style="left:680.9px;top:670.64px;font-size:4.7px;line-height:5.64px;color:#9a9a9a;font-weight:400;letter-spacing:0.05px">Scale Sprite Size</div><div style="position:absolute;left:779px;top:669.56px;width:6.6px;height:6.6px;background:#0e0e0e;border-radius:0.6px"><svg viewBox="0 0 10 10" width="100%" height="100%"><path d="M2 5.2 L4.1 7.3 L8.3 2.6" fill="none" stroke="#1b7ae0" stroke-width="1.7"/></svg></div><div style="position:absolute;left:676.7px;top:677.61px;width:111.4px;height:9.92px;background:#212121;border-bottom:0.9px solid #181818;box-sizing:border-box"></div><div style="position:absolute;left:676.9px;top:677.61px;width:1.2px;height:9.02px;background:#374c26"></div><div class="t" style="left:680.9px;top:680.55px;font-size:4.7px;line-height:5.64px;color:#9a9a9a;font-weight:400;letter-spacing:0.05px">Sprite Rotation Rate</div><div style="position:absolute;left:779px;top:679.47px;width:6.6px;height:6.6px;background:#0e0e0e;border-radius:0.6px"><svg viewBox="0 0 10 10" width="100%" height="100%"><path d="M2 5.2 L4.1 7.3 L8.3 2.6" fill="none" stroke="#1b7ae0" stroke-width="1.7"/></svg></div><div style="position:absolute;left:676.7px;top:687.53px;width:111.4px;height:9.92px;background:#212121;border-bottom:0.9px solid #181818;box-sizing:border-box"></div><div style="position:absolute;left:676.9px;top:687.53px;width:1.2px;height:9.02px;background:#374c26"></div><div class="t" style="left:680.9px;top:690.47px;font-size:4.7px;line-height:5.64px;color:#9a9a9a;font-weight:400;letter-spacing:0.05px">Color</div><div style="position:absolute;left:779px;top:689.39px;width:6.6px;height:6.6px;background:#0e0e0e;border-radius:0.6px"><svg viewBox="0 0 10 10" width="100%" height="100%"><path d="M2 5.2 L4.1 7.3 L8.3 2.6" fill="none" stroke="#1b7ae0" stroke-width="1.7"/></svg></div><div style="position:absolute;left:676.7px;top:697.45px;width:111.4px;height:9.92px;background:#212121;border-bottom:0.9px solid #181818;box-sizing:border-box"></div><div style="position:absolute;left:676.9px;top:697.45px;width:1.2px;height:9.02px;background:#374c26"></div><div class="t" style="left:680.9px;top:700.39px;font-size:4.7px;line-height:5.64px;color:#9a9a9a;font-weight:400;letter-spacing:0.05px">Dynamic Material Parameters</div><div style="position:absolute;left:779px;top:699.31px;width:6.6px;height:6.6px;background:#0e0e0e;border-radius:0.6px"><svg viewBox="0 0 10 10" width="100%" height="100%"><path d="M2 5.2 L4.1 7.3 L8.3 2.6" fill="none" stroke="#1b7ae0" stroke-width="1.7"/></svg></div><div style="position:absolute;left:676.7px;top:707.37px;width:111.4px;height:10.22px;background:#2b2b2b;border-bottom:0.9px solid #1c1c1c;box-sizing:border-box"></div><div style="position:absolute;left:679.3px;top:710.18px;width:4.6px;height:3px;"><svg viewBox="0 0 10 6" width="100%" height="100%"><path d="M0.5 0.5 H9.5 L5 5.8Z" fill="#d0d0d0"/></svg></div><div class="t" style="left:686.3px;top:710.62px;font-size:4.6px;line-height:5.52px;color:#b2b2b2;font-weight:700;letter-spacing:0.05px">Render</div><div style="position:absolute;left:777.9px;top:708.78px;width:7.8px;height:7.8px;"><svg viewBox="0 0 10 10" width="100%" height="100%"><circle cx="5" cy="5" r="4.0" fill="none" stroke="#a85050" stroke-width="0.85" opacity="0.9"/><path d="M5 3.6 V6.4 M3.6 5 H6.4" stroke="#a85050" stroke-width="1.1"/></svg></div><div style="position:absolute;left:676.7px;top:717.59px;width:111.4px;height:10.61px;background:#212121;border-bottom:0.9px solid #181818;box-sizing:border-box"></div><div style="position:absolute;left:676.9px;top:717.59px;width:1.2px;height:9.71px;background:#563030"></div><div style="position:absolute;left:680.7px;top:720.69px;width:5.4px;height:6px;"><svg viewBox="0 0 10 10" width="100%" height="100%"><path d="M1 1 L5 3 L9 1 L7 5 L9 9 L5 7 L1 9 L3 5Z" fill="#e6e6e6"/></svg></div><div class="t" style="left:689.3px;top:720.87px;font-size:4.7px;line-height:5.64px;color:#9a9a9a;font-weight:400;letter-spacing:0.05px">Sprite Renderer</div><div style="position:absolute;left:779px;top:719.79px;width:6.6px;height:6.6px;background:#0e0e0e;border-radius:0.6px"><svg viewBox="0 0 10 10" width="100%" height="100%"><path d="M2 5.2 L4.1 7.3 L8.3 2.6" fill="none" stroke="#1b7ae0" stroke-width="1.7"/></svg></div><div style="position:absolute;left:839.7px;top:469px;width:94.1px;height:271.6px;background:#151515;border-radius:2.5px;box-shadow:0 1px 2px rgba(0,0,0,0.5)"></div><div style="position:absolute;left:840.2px;top:469px;width:93.1px;height:13.2px;border-radius:2.5px 2.5px 0 0;background:linear-gradient(100deg,#88481b 0%,#824519 38%,#5e3d27 60%,#3e3935 80%,#373737 100%)"></div><div style="position:absolute;left:840.2px;top:469px;width:93.1px;height:13.2px;border-radius:2.5px 2.5px 0 0;background:linear-gradient(180deg,rgba(255,190,130,0.16) 0%,rgba(0,0,0,0.18) 40%,rgba(0,0,0,0.12) 60%,rgba(0,0,0,0) 100%)"></div><div style="position:absolute;left:840.2px;top:469px;width:93.1px;height:1px;border-radius:2.5px 2.5px 0 0;background:linear-gradient(90deg,rgba(255,200,150,0.22),rgba(255,255,255,0.12))"></div><div style="position:absolute;left:845.2px;top:473.5px;width:4.8px;height:3.1px;"><svg viewBox="0 0 10 6" width="100%" height="100%"><path d="M0.5 0.5 H9.5 L5 5.8Z" fill="#e2e2e2"/></svg></div><div style="position:absolute;left:855.8px;top:471.9px;width:7.4px;height:7.4px;background:#141414;border-radius:0.8px"><svg viewBox="0 0 10 10" width="100%" height="100%"><path d="M2 5.2 L4.1 7.3 L8.3 2.6" fill="none" stroke="#1b7ae0" stroke-width="1.7"/></svg></div><div class="t" style="left:866.6px;top:472.38px;font-size:6.2px;line-height:7.44px;color:#cdc9c5;font-weight:700;letter-spacing:0.15px">Rock001</div><div style="position:absolute;left:840.2px;top:482.2px;width:93.1px;height:20.9px;background:rgba(24,24,24,0.84)"></div><div style="position:absolute;left:844.2px;top:489.2px;width:4.6px;height:7.4px;"><svg viewBox="0 0 6 9" width="100%" height="100%"><ellipse cx="3" cy="1.4" rx="0.9" ry="1.0" fill="#bdbdbd"/><path d="M1.6 2.6 Q3 1.8 4.4 2.6 L4.3 5.6 Q3 6.4 1.7 5.6Z" fill="#d8d8d8"/><path d="M0.2 8.8 Q0.6 6.2 3 6.1 Q5.4 6.2 5.8 8.8Z" fill="#a0a0a0"/></svg></div><div style="position:absolute;left:850.8px;top:484.7px;width:14.6px;height:16.8px;background:#202020"></div><div style="position:absolute;left:852px;top:486.9px;width:10.6px;height:11.2px;background:#060606;border-bottom:1.6px solid #13a3a0;box-sizing:border-box"></div><div style="position:absolute;left:856.8px;top:491.5px;width:0.7px;height:1.2px;background:#a04a4a"></div><div style="position:absolute;left:840.2px;top:503.1px;width:93.1px;height:10.86px;background:#2a2a2a;border-bottom:0.9px solid #1c1c1c;box-sizing:border-box"></div><div style="position:absolute;left:841.2px;top:504.7px;width:6px;height:6px;"><svg viewBox="0 0 10 10" width="100%" height="100%"><path d="M1.6 8.4 L8.4 1.6" stroke="#b04a2a" stroke-width="2.6"/><path d="M0.8 9.2 L2 8" stroke="#d07050" stroke-width="1.2"/></svg></div><div class="t" style="left:849.1px;top:506.58px;font-size:4.75px;line-height:5.7px;color:#aeaeae;font-weight:400;letter-spacing:0.1px">Properties</div><div class="t" style="left:874.3px;top:507.61px;font-size:3.7px;line-height:4.44px;color:#e6e6e6;font-weight:700;letter-spacing:-0.15px">GPU</div><div style="position:absolute;left:874.4px;top:505.2px;width:4px;height:0.6px;background:#9a9a9a"></div><div style="position:absolute;left:874.3px;top:510.7px;width:7.2px;height:0.8px;background:#d0d0d0"></div><div style="position:absolute;left:909.7px;top:504.1px;width:22.4px;height:8.2px;background:#1f1f1f;border-radius:1px"></div><div style="position:absolute;left:910.7px;top:505.3px;width:5.6px;height:5.6px;"><svg viewBox="0 0 10 10" width="100%" height="100%"><path d="M5 0.8 V9.2 M0.8 5 H9.2" stroke="#f07018" stroke-width="2.2"/></svg></div><div class="t" style="left:917.2px;top:506.58px;font-size:4.75px;line-height:5.7px;color:#b4b4b4;font-weight:400;letter-spacing:0.1px">Stage</div><div style="position:absolute;left:840.2px;top:513.96px;width:93.1px;height:10.86px;background:#2d2d2d;border-bottom:0.9px solid #1c1c1c;box-sizing:border-box"></div><div style="position:absolute;left:841px;top:516.16px;width:6.6px;height:5.6px;"><svg viewBox="0 0 10 9" width="100%" height="100%"><path d="M0 0.8 H10" stroke="#a05030" stroke-width="0.8"/><path d="M0 4 H2.2 M3 4 H10 M0 7.3 H2.2 M3 7.3 H10" stroke="#b85a36" stroke-width="2"/></svg></div><div class="t" style="left:849.4px;top:517.53px;font-size:4.6px;line-height:5.52px;color:#b0b0b0;font-weight:700;letter-spacing:0.05px">Emitter Summary</div><div style="position:absolute;left:840.2px;top:524.82px;width:93.1px;height:10.36px;background:#2b2b2b;border-bottom:0.9px solid #1c1c1c;box-sizing:border-box"></div><div class="t" style="left:849.8px;top:528.14px;font-size:4.6px;line-height:5.52px;color:#b2b2b2;font-weight:700;letter-spacing:0.05px">Emitter Spawn</div><div style="position:absolute;left:923.1px;top:526.3px;width:7.8px;height:7.8px;"><svg viewBox="0 0 10 10" width="100%" height="100%"><circle cx="5" cy="5" r="4.0" fill="none" stroke="#a0603f" stroke-width="0.85" opacity="0.9"/><path d="M5 3.6 V6.4 M3.6 5 H6.4" stroke="#a0603f" stroke-width="1.1"/></svg></div><div style="position:absolute;left:840.2px;top:535.18px;width:93.1px;height:10.36px;background:#2b2b2b;border-bottom:0.9px solid #1c1c1c;box-sizing:border-box"></div><div style="position:absolute;left:842.8px;top:538.06px;width:4.6px;height:3px;"><svg viewBox="0 0 10 6" width="100%" height="100%"><path d="M0.5 0.5 H9.5 L5 5.8Z" fill="#d0d0d0"/></svg></div><div class="t" style="left:849.8px;top:538.5px;font-size:4.6px;line-height:5.52px;color:#b2b2b2;font-weight:700;letter-spacing:0.05px">Emitter Update</div><div style="position:absolute;left:923.1px;top:536.66px;width:7.8px;height:7.8px;"><svg viewBox="0 0 10 10" width="100%" height="100%"><circle cx="5" cy="5" r="4.0" fill="none" stroke="#a0603f" stroke-width="0.85" opacity="0.9"/><path d="M5 3.6 V6.4 M3.6 5 H6.4" stroke="#a0603f" stroke-width="1.1"/></svg></div><div style="position:absolute;left:840.2px;top:545.53px;width:93.1px;height:10.06px;background:#212121;border-bottom:0.9px solid #181818;box-sizing:border-box"></div><div style="position:absolute;left:840.4px;top:545.53px;width:1.2px;height:9.16px;background:#553724"></div><div class="t" style="left:844.4px;top:548.54px;font-size:4.7px;line-height:5.64px;color:#9a9a9a;font-weight:400;letter-spacing:0.05px">Emitter State</div><div style="position:absolute;left:874.6px;top:547.96px;width:9px;height:6.6px;background:#9c5c0e;border-radius:1.8px"></div><div class="t" style="left:875.8px;top:548.56px;font-size:4.5px;line-height:5.4px;color:#f0dcc0;font-weight:700;transform:scaleX(0.85);transform-origin:0 50%">Self</div><div style="position:absolute;left:885.4px;top:547.46px;width:14.6px;height:7px;background:#0a0a0a;border-radius:1.2px"></div><div class="t" style="left:886.2px;top:548.16px;font-size:4.5px;line-height:5.4px;color:#e8e8e8;font-weight:400;transform:scaleX(0.82);transform-origin:0 50%">Infinite</div><div style="position:absolute;left:924.2px;top:547.46px;width:6.6px;height:6.6px;background:#0e0e0e;border-radius:0.6px"><svg viewBox="0 0 10 10" width="100%" height="100%"><path d="M2 5.2 L4.1 7.3 L8.3 2.6" fill="none" stroke="#1b7ae0" stroke-width="1.7"/></svg></div><div style="position:absolute;left:840.2px;top:555.59px;width:93.1px;height:10.06px;background:#212121;border-bottom:0.9px solid #181818;box-sizing:border-box"></div><div style="position:absolute;left:840.4px;top:555.59px;width:1.2px;height:9.16px;background:#553724"></div><div class="t" style="left:844.4px;top:558.6px;font-size:4.7px;line-height:5.64px;color:#9a9a9a;font-weight:400;letter-spacing:0.05px">Spawn Particles from Other Emitter</div><div style="position:absolute;left:924.2px;top:557.52px;width:6.6px;height:6.6px;background:#0e0e0e;border-radius:0.6px"><svg viewBox="0 0 10 10" width="100%" height="100%"><path d="M2 5.2 L4.1 7.3 L8.3 2.6" fill="none" stroke="#1b7ae0" stroke-width="1.7"/></svg></div><div style="position:absolute;left:840.2px;top:565.65px;width:93.1px;height:10.36px;background:#2b2b2b;border-bottom:0.9px solid #1c1c1c;box-sizing:border-box"></div><div style="position:absolute;left:842.8px;top:568.52px;width:4.6px;height:3px;"><svg viewBox="0 0 10 6" width="100%" height="100%"><path d="M0.5 0.5 H9.5 L5 5.8Z" fill="#d0d0d0"/></svg></div><div class="t" style="left:849.8px;top:568.96px;font-size:4.6px;line-height:5.52px;color:#b2b2b2;font-weight:700;letter-spacing:0.05px">Particle Spawn</div><div style="position:absolute;left:923.1px;top:567.12px;width:7.8px;height:7.8px;"><svg viewBox="0 0 10 10" width="100%" height="100%"><circle cx="5" cy="5" r="4.0" fill="none" stroke="#6a9a42" stroke-width="0.85" opacity="0.9"/><path d="M5 3.6 V6.4 M3.6 5 H6.4" stroke="#6a9a42" stroke-width="1.1"/></svg></div><div style="position:absolute;left:840.2px;top:576px;width:93.1px;height:10.06px;background:#212121;border-bottom:0.9px solid #181818;box-sizing:border-box"></div><div style="position:absolute;left:840.4px;top:576px;width:1.2px;height:9.16px;background:#374c26"></div><div class="t" style="left:844.4px;top:579.01px;font-size:4.7px;line-height:5.64px;color:#9a9a9a;font-weight:400;letter-spacing:0.05px">Initialize Particle</div><div style="position:absolute;left:924.2px;top:577.93px;width:6.6px;height:6.6px;background:#0e0e0e;border-radius:0.6px"><svg viewBox="0 0 10 10" width="100%" height="100%"><path d="M2 5.2 L4.1 7.3 L8.3 2.6" fill="none" stroke="#1b7ae0" stroke-width="1.7"/></svg></div><div style="position:absolute;left:840.2px;top:586.06px;width:93.1px;height:10.06px;background:#212121;border-bottom:0.9px solid #181818;box-sizing:border-box"></div><div style="position:absolute;left:840.4px;top:586.06px;width:1.2px;height:9.16px;background:#374c26"></div><div class="t" style="left:844.4px;top:589.07px;font-size:4.7px;line-height:5.64px;color:#9a9a9a;font-weight:400;letter-spacing:0.05px">Sample Particles from Other Emitter</div><div style="position:absolute;left:924.2px;top:587.99px;width:6.6px;height:6.6px;background:#0e0e0e;border-radius:0.6px"><svg viewBox="0 0 10 10" width="100%" height="100%"><path d="M2 5.2 L4.1 7.3 L8.3 2.6" fill="none" stroke="#1b7ae0" stroke-width="1.7"/></svg></div><div style="position:absolute;left:840.2px;top:596.11px;width:93.1px;height:10.06px;background:#212121;border-bottom:0.9px solid #181818;box-sizing:border-box"></div><div style="position:absolute;left:840.4px;top:596.11px;width:1.2px;height:9.16px;background:#374c26"></div><div class="t" style="left:844.4px;top:599.12px;font-size:4.7px;line-height:5.64px;color:#9a9a9a;font-weight:400;letter-spacing:0.05px">Initial Mesh Orientation</div><div style="position:absolute;left:924.2px;top:598.04px;width:6.6px;height:6.6px;background:#0e0e0e;border-radius:0.6px"><svg viewBox="0 0 10 10" width="100%" height="100%"><path d="M2 5.2 L4.1 7.3 L8.3 2.6" fill="none" stroke="#1b7ae0" stroke-width="1.7"/></svg></div><div style="position:absolute;left:840.2px;top:606.17px;width:93.1px;height:10.06px;background:#212121;border-bottom:0.9px solid #181818;box-sizing:border-box"></div><div style="position:absolute;left:840.4px;top:606.17px;width:1.2px;height:9.16px;background:#374c26"></div><div class="t" style="left:844.4px;top:609.18px;font-size:4.7px;line-height:5.64px;color:#9a9a9a;font-weight:400;letter-spacing:0.05px">Sphere Location</div><div style="position:absolute;left:912.9px;top:610px;width:6px;height:4px;"><svg viewBox="0 0 10 7" width="100%" height="100%"><path d="M0.6 3.5 L5 0.6 L9.4 3.5 L5 6.4Z" fill="none" stroke="#9a9a9a" stroke-width="0.9"/><circle cx="5" cy="3.5" r="1.2" fill="#9a9a9a"/></svg></div><div style="position:absolute;left:924.2px;top:608.1px;width:6.6px;height:6.6px;background:#0e0e0e;border-radius:0.6px"><svg viewBox="0 0 10 10" width="100%" height="100%"><path d="M2 5.2 L4.1 7.3 L8.3 2.6" fill="none" stroke="#1b7ae0" stroke-width="1.7"/></svg></div><div style="position:absolute;left:840.2px;top:616.23px;width:93.1px;height:10.06px;background:#212121;border-bottom:0.9px solid #181818;box-sizing:border-box"></div><div style="position:absolute;left:840.4px;top:616.23px;width:1.2px;height:9.16px;background:#374c26"></div><div class="t" style="left:844.4px;top:619.23px;font-size:4.7px;line-height:5.64px;color:#9a9a9a;font-weight:400;letter-spacing:0.05px">Add Velocity</div><div style="position:absolute;left:924.2px;top:618.15px;width:6.6px;height:6.6px;background:#0e0e0e;border-radius:0.6px"><svg viewBox="0 0 10 10" width="100%" height="100%"><path d="M2 5.2 L4.1 7.3 L8.3 2.6" fill="none" stroke="#1b7ae0" stroke-width="1.7"/></svg></div><div style="position:absolute;left:840.2px;top:626.28px;width:93.1px;height:10.06px;background:#212121;border-bottom:0.9px solid #181818;box-sizing:border-box"></div><div style="position:absolute;left:840.4px;top:626.28px;width:1.2px;height:9.16px;background:#374c26"></div><div class="t" style="left:844.4px;top:629.29px;font-size:4.7px;line-height:5.64px;color:#9a9a9a;font-weight:400;letter-spacing:0.05px">Add Velocity from Point</div><div style="position:absolute;left:924.2px;top:628.21px;width:6.6px;height:6.6px;background:#0e0e0e;border-radius:0.6px"><svg viewBox="0 0 10 10" width="100%" height="100%"><path d="M2 5.2 L4.1 7.3 L8.3 2.6" fill="none" stroke="#1b7ae0" stroke-width="1.7"/></svg></div><div style="position:absolute;left:840.2px;top:636.34px;width:93.1px;height:10.36px;background:#2b2b2b;border-bottom:0.9px solid #1c1c1c;box-sizing:border-box"></div><div style="position:absolute;left:842.8px;top:639.22px;width:4.6px;height:3px;"><svg viewBox="0 0 10 6" width="100%" height="100%"><path d="M0.5 0.5 H9.5 L5 5.8Z" fill="#d0d0d0"/></svg></div><div class="t" style="left:849.8px;top:639.66px;font-size:4.6px;line-height:5.52px;color:#b2b2b2;font-weight:700;letter-spacing:0.05px">Particle Update</div><div style="position:absolute;left:923.1px;top:637.82px;width:7.8px;height:7.8px;"><svg viewBox="0 0 10 10" width="100%" height="100%"><circle cx="5" cy="5" r="4.0" fill="none" stroke="#6a9a42" stroke-width="0.85" opacity="0.9"/><path d="M5 3.6 V6.4 M3.6 5 H6.4" stroke="#6a9a42" stroke-width="1.1"/></svg></div><div style="position:absolute;left:840.2px;top:646.69px;width:93.1px;height:10.06px;background:#212121;border-bottom:0.9px solid #181818;box-sizing:border-box"></div><div style="position:absolute;left:840.4px;top:646.69px;width:1.2px;height:9.16px;background:#374c26"></div><div class="t" style="left:844.4px;top:649.7px;font-size:4.7px;line-height:5.64px;color:#9a9a9a;font-weight:400;letter-spacing:0.05px">Particle State</div><div style="position:absolute;left:924.2px;top:648.62px;width:6.6px;height:6.6px;background:#0e0e0e;border-radius:0.6px"><svg viewBox="0 0 10 10" width="100%" height="100%"><path d="M2 5.2 L4.1 7.3 L8.3 2.6" fill="none" stroke="#1b7ae0" stroke-width="1.7"/></svg></div><div style="position:absolute;left:840.2px;top:656.75px;width:93.1px;height:10.06px;background:#212121;border-bottom:0.9px solid #181818;box-sizing:border-box"></div><div style="position:absolute;left:840.4px;top:656.75px;width:1.2px;height:9.16px;background:#374c26"></div><div class="t" style="left:844.4px;top:659.76px;font-size:4.7px;line-height:5.64px;color:#9a9a9a;font-weight:400;letter-spacing:0.05px">Gravity Force</div><div style="position:absolute;left:924.2px;top:658.68px;width:6.6px;height:6.6px;background:#0e0e0e;border-radius:0.6px"><svg viewBox="0 0 10 10" width="100%" height="100%"><path d="M2 5.2 L4.1 7.3 L8.3 2.6" fill="none" stroke="#1b7ae0" stroke-width="1.7"/></svg></div><div style="position:absolute;left:840.2px;top:666.81px;width:93.1px;height:10.06px;background:#212121;border-bottom:0.9px solid #181818;box-sizing:border-box"></div><div style="position:absolute;left:840.4px;top:666.81px;width:1.2px;height:9.16px;background:#374c26"></div><div class="t" style="left:844.4px;top:669.81px;font-size:4.7px;line-height:5.64px;color:#9a9a9a;font-weight:400;letter-spacing:0.05px">Collision</div><div style="position:absolute;left:912.9px;top:670.63px;width:6px;height:4px;"><svg viewBox="0 0 10 7" width="100%" height="100%"><path d="M0.6 3.5 L5 0.6 L9.4 3.5 L5 6.4Z" fill="none" stroke="#9a9a9a" stroke-width="0.9"/><circle cx="5" cy="3.5" r="1.2" fill="#9a9a9a"/></svg></div><div style="position:absolute;left:924.2px;top:668.73px;width:6.6px;height:6.6px;background:#0e0e0e;border-radius:0.6px"><svg viewBox="0 0 10 10" width="100%" height="100%"><path d="M2 5.2 L4.1 7.3 L8.3 2.6" fill="none" stroke="#1b7ae0" stroke-width="1.7"/></svg></div><div style="position:absolute;left:840.2px;top:676.86px;width:93.1px;height:10.06px;background:#212121;border-bottom:0.9px solid #181818;box-sizing:border-box"></div><div style="position:absolute;left:840.4px;top:676.86px;width:1.2px;height:9.16px;background:#374c26"></div><div class="t" style="left:844.4px;top:679.87px;font-size:4.7px;line-height:5.64px;color:#9a9a9a;font-weight:400;letter-spacing:0.05px">Solve Forces and Velocity</div><div style="position:absolute;left:924.2px;top:678.79px;width:6.6px;height:6.6px;background:#0e0e0e;border-radius:0.6px"><svg viewBox="0 0 10 10" width="100%" height="100%"><path d="M2 5.2 L4.1 7.3 L8.3 2.6" fill="none" stroke="#1b7ae0" stroke-width="1.7"/></svg></div><div style="position:absolute;left:840.2px;top:686.92px;width:93.1px;height:10.06px;background:#212121;border-bottom:0.9px solid #181818;box-sizing:border-box"></div><div style="position:absolute;left:840.4px;top:686.92px;width:1.2px;height:9.16px;background:#374c26"></div><div class="t" style="left:844.4px;top:689.92px;font-size:4.7px;line-height:5.64px;color:#9a9a9a;font-weight:400;letter-spacing:0.05px">Update Mesh Orientation</div><div style="position:absolute;left:912.9px;top:690.74px;width:6px;height:4px;"><svg viewBox="0 0 10 7" width="100%" height="100%"><path d="M0.6 3.5 L5 0.6 L9.4 3.5 L5 6.4Z" fill="none" stroke="#9a9a9a" stroke-width="0.9"/><circle cx="5" cy="3.5" r="1.2" fill="#9a9a9a"/></svg></div><div style="position:absolute;left:924.2px;top:688.84px;width:6.6px;height:6.6px;background:#0e0e0e;border-radius:0.6px"><svg viewBox="0 0 10 10" width="100%" height="100%"><path d="M2 5.2 L4.1 7.3 L8.3 2.6" fill="none" stroke="#1b7ae0" stroke-width="1.7"/></svg></div><div style="position:absolute;left:840.2px;top:696.97px;width:93.1px;height:10.06px;background:#212121;border-bottom:0.9px solid #181818;box-sizing:border-box"></div><div style="position:absolute;left:840.4px;top:696.97px;width:1.2px;height:9.16px;background:#374c26"></div><div class="t" style="left:844.4px;top:699.98px;font-size:4.7px;line-height:5.64px;color:#9a9a9a;font-weight:400;letter-spacing:0.05px">Dynamic Material Parameters</div><div style="position:absolute;left:924.2px;top:698.9px;width:6.6px;height:6.6px;background:#0e0e0e;border-radius:0.6px"><svg viewBox="0 0 10 10" width="100%" height="100%"><path d="M2 5.2 L4.1 7.3 L8.3 2.6" fill="none" stroke="#1b7ae0" stroke-width="1.7"/></svg></div><div style="position:absolute;left:840.2px;top:707.03px;width:93.1px;height:10.06px;background:#212121;border-bottom:0.9px solid #181818;box-sizing:border-box"></div><div style="position:absolute;left:840.4px;top:707.03px;width:1.2px;height:9.16px;background:#374c26"></div><div class="t" style="left:844.4px;top:710.04px;font-size:4.7px;line-height:5.64px;color:#9a9a9a;font-weight:400;letter-spacing:0.05px">Scale Mesh Size</div><div style="position:absolute;left:924.2px;top:708.96px;width:6.6px;height:6.6px;background:#0e0e0e;border-radius:0.6px"><svg viewBox="0 0 10 10" width="100%" height="100%"><path d="M2 5.2 L4.1 7.3 L8.3 2.6" fill="none" stroke="#1b7ae0" stroke-width="1.7"/></svg></div><div style="position:absolute;left:840.2px;top:717.08px;width:93.1px;height:10.36px;background:#2b2b2b;border-bottom:0.9px solid #1c1c1c;box-sizing:border-box"></div><div style="position:absolute;left:842.8px;top:719.96px;width:4.6px;height:3px;"><svg viewBox="0 0 10 6" width="100%" height="100%"><path d="M0.5 0.5 H9.5 L5 5.8Z" fill="#d0d0d0"/></svg></div><div class="t" style="left:849.8px;top:720.4px;font-size:4.6px;line-height:5.52px;color:#b2b2b2;font-weight:700;letter-spacing:0.05px">Render</div><div style="position:absolute;left:923.1px;top:718.56px;width:7.8px;height:7.8px;"><svg viewBox="0 0 10 10" width="100%" height="100%"><circle cx="5" cy="5" r="4.0" fill="none" stroke="#a85050" stroke-width="0.85" opacity="0.9"/><path d="M5 3.6 V6.4 M3.6 5 H6.4" stroke="#a85050" stroke-width="1.1"/></svg></div><div style="position:absolute;left:840.2px;top:727.44px;width:93.1px;height:10.76px;background:#212121;border-bottom:0.9px solid #181818;box-sizing:border-box"></div><div style="position:absolute;left:840.4px;top:727.44px;width:1.2px;height:9.86px;background:#563030"></div><div style="position:absolute;left:843.6px;top:730.22px;width:5.8px;height:6px;"><svg viewBox="0 0 10 10" width="100%" height="100%"><path d="M0.5 1.5 Q5 0 9.5 1.5 V8.3 Q5 10 0.5 8.3Z" fill="#e8e8e8"/><path d="M6.5 2 H9.5 V8.3 Q8 9.3 6.5 9.3Z" fill="#8a8a8a"/><path d="M0.5 1.5 Q5 3 9.5 1.5" stroke="#b0b0b0" stroke-width="0.6" fill="none"/></svg></div><div class="t" style="left:852.8px;top:730.8px;font-size:4.7px;line-height:5.64px;color:#9a9a9a;font-weight:400;letter-spacing:0.05px">Mesh Renderer</div><div style="position:absolute;left:924.2px;top:729.72px;width:6.6px;height:6.6px;background:#0e0e0e;border-radius:0.6px"><svg viewBox="0 0 10 10" width="100%" height="100%"><path d="M2 5.2 L4.1 7.3 L8.3 2.6" fill="none" stroke="#1b7ae0" stroke-width="1.7"/></svg></div>
</div>
<div style="position:absolute;left:0;top:0;width:1024px;height:754px;opacity:0.185"><div class="wm" style="left:737.62px;transform:scaleX(0.7862)">S</div><div class="wm" style="left:784.81px;transform:scaleX(0.7507)">Y</div><div class="wm" style="left:824.94px;transform:scaleX(0.7400)">S</div><div class="wm" style="left:865.76px;transform:scaleX(0.8016)">T</div><div class="wm" style="left:905.59px;transform:scaleX(0.7210)">E</div><div class="wm" style="left:943.94px;transform:scaleX(0.8913)">M</div></div>
</body></html>
